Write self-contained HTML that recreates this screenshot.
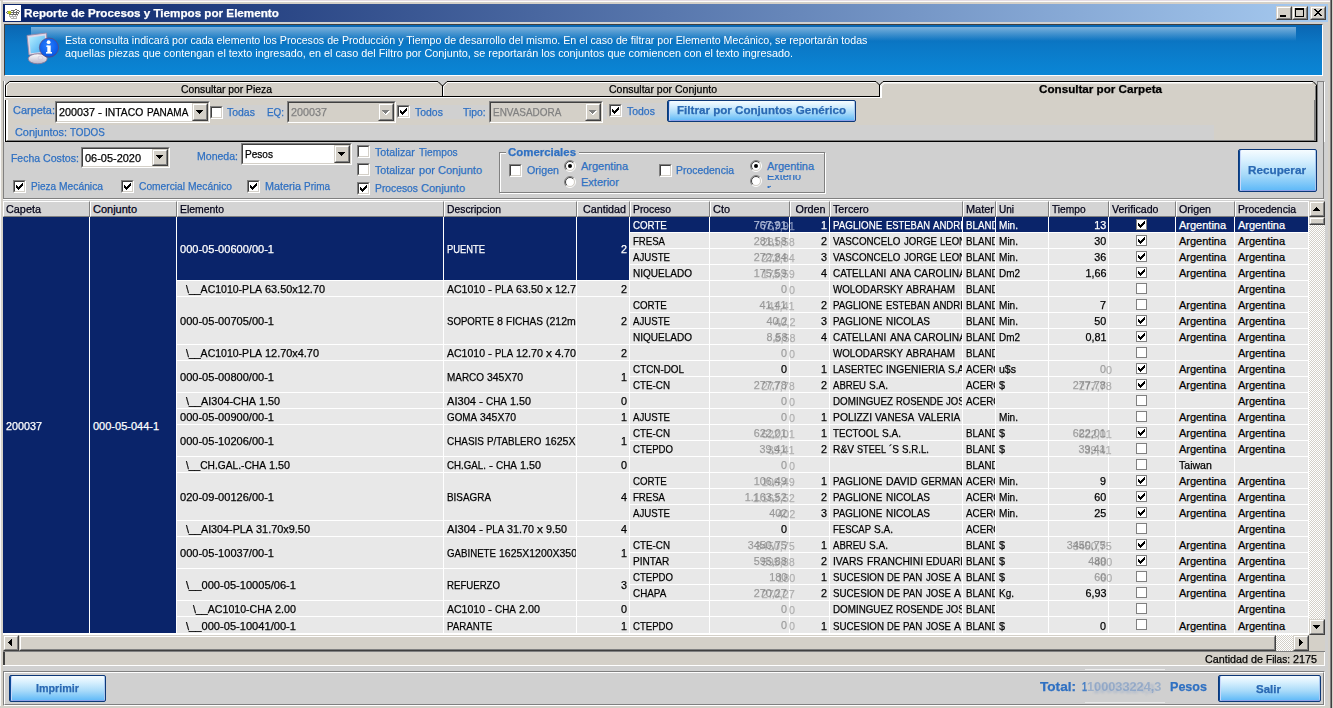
<!DOCTYPE html><html><head><meta charset="utf-8"><title>Reporte</title><style>
html,body{margin:0;padding:0;width:1333px;height:708px;overflow:hidden;background:#d0d0d0}
div,svg{position:absolute;margin:0;padding:0}
.t{font-family:"Liberation Sans", sans-serif;white-space:pre;-webkit-text-stroke:0.25px currentColor}
body{font-family:"Liberation Sans", sans-serif}
</style></head><body>
<div style="left:0px;top:0px;width:1333px;height:708px;background:#d0d0d0"></div>
<div style="left:0px;top:0px;width:1333px;height:4px;background:#d4d0c8"></div>
<div style="left:0px;top:0px;width:1333px;height:1px;background:#e4dce4"></div>
<div style="left:0px;top:1px;width:1331px;height:1px;background:#fbfbf8"></div>
<div style="left:0px;top:0px;width:3px;height:708px;background:#d4d0c8"></div>
<div style="left:0px;top:1px;width:1px;height:707px;background:#f8f8f8"></div>
<div style="left:1328px;top:2px;width:2px;height:706px;background:#d4d0c8"></div>
<div style="left:1330px;top:0px;width:1px;height:708px;background:#808080"></div>
<div style="left:1331px;top:0px;width:1px;height:708px;background:#404040"></div>
<div style="left:1332px;top:0px;width:1px;height:708px;background:#d4d0c8"></div>
<div style="left:0px;top:706px;width:1330px;height:2px;background:#d4d0c8"></div>
<div style="left:3px;top:4px;width:1325px;height:18px;background:linear-gradient(90deg,#0a246a,#a6caf0)"></div>
<div style="left:5px;top:5px;width:16px;height:16px;background:#fff"></div>
<svg style="left:5px;top:5px" width="16" height="16" shape-rendering="crispEdges"><rect x="10" y="4" width="1" height="1" fill="#6a6a6a"/><rect x="11" y="4" width="1" height="1" fill="#6a6a6a"/><rect x="6" y="5" width="1" height="1" fill="#6a6a6a"/><rect x="7" y="5" width="1" height="1" fill="#6a6a6a"/><rect x="8" y="5" width="1" height="1" fill="#6a6a6a"/><rect x="9" y="5" width="1" height="1" fill="#6a6a6a"/><rect x="12" y="5" width="1" height="1" fill="#6a6a6a"/><rect x="13" y="5" width="1" height="1" fill="#6a6a6a"/><rect x="2" y="6" width="1" height="1" fill="#6a6a6a"/><rect x="3" y="6" width="1" height="1" fill="#6a6a6a"/><rect x="5" y="6" width="1" height="1" fill="#6a6a6a"/><rect x="8" y="6" width="1" height="1" fill="#6a6a6a"/><rect x="11" y="6" width="1" height="1" fill="#6a6a6a"/><rect x="14" y="6" width="1" height="1" fill="#6a6a6a"/><rect x="1" y="7" width="1" height="1" fill="#6a6a6a"/><rect x="4" y="7" width="1" height="1" fill="#6a6a6a"/><rect x="5" y="7" width="1" height="1" fill="#6a6a6a"/><rect x="6" y="7" width="1" height="1" fill="#6a6a6a"/><rect x="7" y="7" width="1" height="1" fill="#6a6a6a"/><rect x="8" y="7" width="1" height="1" fill="#6a6a6a"/><rect x="9" y="7" width="1" height="1" fill="#6a6a6a"/><rect x="10" y="7" width="1" height="1" fill="#6a6a6a"/><rect x="11" y="7" width="1" height="1" fill="#6a6a6a"/><rect x="12" y="7" width="1" height="1" fill="#6a6a6a"/><rect x="13" y="7" width="1" height="1" fill="#6a6a6a"/><rect x="2" y="8" width="1" height="1" fill="#6a6a6a"/><rect x="3" y="8" width="1" height="1" fill="#6a6a6a"/><rect x="5" y="8" width="1" height="1" fill="#6a6a6a"/><rect x="8" y="8" width="1" height="1" fill="#6a6a6a"/><rect x="11" y="8" width="1" height="1" fill="#6a6a6a"/><rect x="13" y="8" width="1" height="1" fill="#6a6a6a"/><rect x="4" y="9" width="1" height="1" fill="#6a6a6a"/><rect x="5" y="9" width="1" height="1" fill="#6a6a6a"/><rect x="6" y="9" width="1" height="1" fill="#6a6a6a"/><rect x="7" y="9" width="1" height="1" fill="#6a6a6a"/><rect x="8" y="9" width="1" height="1" fill="#6a6a6a"/><rect x="9" y="9" width="1" height="1" fill="#6a6a6a"/><rect x="10" y="9" width="1" height="1" fill="#6a6a6a"/><rect x="11" y="9" width="1" height="1" fill="#6a6a6a"/><rect x="12" y="9" width="1" height="1" fill="#6a6a6a"/><rect x="4" y="10" width="1" height="1" fill="#b4b4b4"/><rect x="7" y="10" width="1" height="1" fill="#b4b4b4"/><rect x="10" y="10" width="1" height="1" fill="#b4b4b4"/><rect x="12" y="10" width="1" height="1" fill="#b4b4b4"/><rect x="4" y="11" width="1" height="1" fill="#b4b4b4"/><rect x="5" y="11" width="1" height="1" fill="#b4b4b4"/><rect x="6" y="11" width="1" height="1" fill="#b4b4b4"/><rect x="7" y="11" width="1" height="1" fill="#b4b4b4"/><rect x="8" y="11" width="1" height="1" fill="#b4b4b4"/><rect x="9" y="11" width="1" height="1" fill="#b4b4b4"/><rect x="10" y="11" width="1" height="1" fill="#b4b4b4"/><rect x="11" y="11" width="1" height="1" fill="#b4b4b4"/><rect x="5" y="12" width="1" height="1" fill="#b4b4b4"/><rect x="8" y="12" width="1" height="1" fill="#b4b4b4"/><rect x="11" y="12" width="1" height="1" fill="#b4b4b4"/><rect x="6" y="13" width="1" height="1" fill="#b4b4b4"/><rect x="7" y="13" width="1" height="1" fill="#b4b4b4"/><rect x="8" y="13" width="1" height="1" fill="#b4b4b4"/><rect x="9" y="13" width="1" height="1" fill="#b4b4b4"/><rect x="10" y="13" width="1" height="1" fill="#b4b4b4"/><rect x="11" y="13" width="1" height="1" fill="#b4b4b4"/><circle cx="4.5" cy="7.5" r="1.7" fill="#b8c818" shape-rendering="auto"/></svg>
<div class="t" style="left:24.00px;transform-origin:0 0;top:7px;line-height:13px;font-size:11px;font-weight:700;color:#fff;transform:scaleX(1.0588);">Reporte de Procesos y Tiempos por Elemento</div>
<div style="left:1276px;top:6px;width:16px;height:14px;background:#d4d0c8;box-sizing:border-box;border-top:1px solid #d4d0c8;border-left:1px solid #d4d0c8;border-right:1px solid #404040;border-bottom:1px solid #404040"></div>
<div style="left:1277px;top:7px;width:14px;height:12px;box-sizing:border-box;border-top:1px solid #fff;border-left:1px solid #fff;border-right:1px solid #808080;border-bottom:1px solid #808080"></div>
<div style="left:1292px;top:6px;width:16px;height:14px;background:#d4d0c8;box-sizing:border-box;border-top:1px solid #d4d0c8;border-left:1px solid #d4d0c8;border-right:1px solid #404040;border-bottom:1px solid #404040"></div>
<div style="left:1293px;top:7px;width:14px;height:12px;box-sizing:border-box;border-top:1px solid #fff;border-left:1px solid #fff;border-right:1px solid #808080;border-bottom:1px solid #808080"></div>
<div style="left:1310px;top:6px;width:16px;height:14px;background:#d4d0c8;box-sizing:border-box;border-top:1px solid #d4d0c8;border-left:1px solid #d4d0c8;border-right:1px solid #404040;border-bottom:1px solid #404040"></div>
<div style="left:1311px;top:7px;width:14px;height:12px;box-sizing:border-box;border-top:1px solid #fff;border-left:1px solid #fff;border-right:1px solid #808080;border-bottom:1px solid #808080"></div>
<svg style="left:1276px;top:6px" width="16" height="14"><rect x="4" y="9" width="6" height="2" fill="#000"/></svg>
<svg style="left:1292px;top:6px" width="16" height="14"><rect x="3" y="2" width="9" height="9" fill="#000"/><rect x="4" y="4" width="7" height="6" fill="#d4d0c8"/></svg>
<svg style="left:1310px;top:6px" width="16" height="14" shape-rendering="crispEdges"><g fill="#000"><rect x="4" y="3" width="1" height="1"/><rect x="5" y="3" width="1" height="1"/><rect x="10" y="3" width="1" height="1"/><rect x="11" y="3" width="1" height="1"/><rect x="5" y="4" width="1" height="1"/><rect x="6" y="4" width="1" height="1"/><rect x="9" y="4" width="1" height="1"/><rect x="10" y="4" width="1" height="1"/><rect x="6" y="5" width="1" height="1"/><rect x="7" y="5" width="1" height="1"/><rect x="8" y="5" width="1" height="1"/><rect x="9" y="5" width="1" height="1"/><rect x="7" y="6" width="1" height="1"/><rect x="8" y="6" width="1" height="1"/><rect x="6" y="7" width="1" height="1"/><rect x="7" y="7" width="1" height="1"/><rect x="8" y="7" width="1" height="1"/><rect x="9" y="7" width="1" height="1"/><rect x="5" y="8" width="1" height="1"/><rect x="6" y="8" width="1" height="1"/><rect x="9" y="8" width="1" height="1"/><rect x="10" y="8" width="1" height="1"/><rect x="4" y="9" width="1" height="1"/><rect x="5" y="9" width="1" height="1"/><rect x="10" y="9" width="1" height="1"/><rect x="11" y="9" width="1" height="1"/></g></svg>
<div style="left:4px;top:24px;width:1319px;height:52px;background:linear-gradient(180deg,#0a66b2 0%,#0b78c6 40%,#0a86d6 100%);box-sizing:border-box;border-top:1px solid #404040;border-left:1px solid #404040;border-right:1px solid #fff;border-bottom:1px solid #fff"></div>
<div style="left:31px;top:27px;width:1265px;height:14px;background:linear-gradient(180deg,rgba(150,195,230,0.80) 0%,rgba(120,180,225,0.45) 55%,rgba(100,165,215,0) 100%)"></div>
<svg style="left:22px;top:28px" width="44" height="42" viewBox="0 0 44 42">
<defs><linearGradient id="scr" x1="0" y1="0" x2="1" y2="1"><stop offset="0" stop-color="#b8f0ff"/><stop offset="1" stop-color="#40a8f0"/></linearGradient>
<radialGradient id="ic" cx="0.45" cy="0.4" r="0.7"><stop offset="0" stop-color="#2a80ff"/><stop offset="0.75" stop-color="#0a5ae8"/><stop offset="1" stop-color="#0840b0"/></radialGradient>
<linearGradient id="base" x1="0" y1="0" x2="0" y2="1"><stop offset="0" stop-color="#ffffff"/><stop offset="1" stop-color="#b8b4c8"/></linearGradient></defs>
<path d="M5 7.5 L24.5 5 L25.5 25 L7 27 Z" fill="#e0d8e8" stroke="#9a8aa8" stroke-width="0.9"/>
<path d="M7.2 9.5 L22.8 7.5 L23.6 23.5 L8.8 25.2 Z" fill="url(#scr)"/>
<ellipse cx="15.7" cy="30.8" rx="9.5" ry="5" fill="url(#base)" stroke="#8a7a98" stroke-width="0.9"/>
<ellipse cx="18.5" cy="30" rx="2.5" ry="2" fill="none" stroke="#c8c0d8" stroke-width="0.6"/>
<circle cx="27" cy="19.6" r="9.6" fill="url(#ic)" stroke="#6a4a70" stroke-width="0.7"/>
<rect x="25.3" y="17.5" width="3.4" height="7.5" fill="#fff"/><rect x="24" y="24" width="6" height="1.6" fill="#fff"/><rect x="24.3" y="17.5" width="2" height="1.4" fill="#fff"/>
<circle cx="26.6" cy="14.2" r="1.9" fill="#fff"/>
</svg>
<div class="t" style="left:65.00px;transform-origin:0 0;top:34px;line-height:13px;font-size:11px;font-weight:400;color:#fff;transform:scaleX(0.9678);-webkit-text-stroke:0">Esta consulta indicará por cada elemento los Procesos de Producción y Tiempo de desarrollo del mismo. En el caso de filtrar por Elemento Mecánico, se reportarán todas</div>
<div class="t" style="left:65.00px;transform-origin:0 0;top:47px;line-height:13px;font-size:11px;font-weight:400;color:#fff;transform:scaleX(0.9847);-webkit-text-stroke:0">aquellas piezas que contengan el texto ingresado, en el caso del Filtro por Conjunto, se reportarán los conjuntos que comiencen con el texto ingresado.</div>
<div style="left:3px;top:81px;width:1px;height:118px;background:#808080"></div>
<div style="left:4px;top:81px;width:1px;height:61px;background:#fff"></div>
<div style="left:5px;top:96px;width:1312px;height:46px;background:#d4d0c8;box-sizing:border-box;border-left:1px solid #000;border-bottom:1px solid #000;border-right:1px solid #000"></div>
<div style="left:6px;top:97px;width:2px;height:43px;background:#fff"></div>
<div style="left:1314px;top:97px;width:2px;height:44px;background:#808080"></div>
<div style="left:7px;top:140px;width:1308px;height:1px;background:#808080"></div>
<svg style="left:0px;top:76px" width="1333" height="24">
<path d="M5 24 V9 L9 5 H438 L442.5 9.5 L447 5 H876 L879.5 8.5 L883 5 H1313 L1317 9 V24 Z" fill="#d4d0c8"/>
<path d="M5.5 21 V9 L9.5 5.5 H438 L442.5 10 L447 5.5 H876 L879.5 9 L883 5.5 H1313 L1316.5 9 V24" fill="none" stroke="#000"/>
<path d="M6.5 20 V9.5 L10 6.5 H437.5" fill="none" stroke="#fff"/>
<path d="M443.5 20 V10.5 L447.5 6.5 H875.5" fill="none" stroke="#fff"/>
<path d="M442.5 9.5 V20.5 M879.5 9 V20.5" stroke="#000"/>
<path d="M880.5 24 V9.5 L884 6.5 H1312.5" fill="none" stroke="#fff"/>
<path d="M881.5 24 V10 L884.5 7 H1312" fill="none" stroke="#fff" stroke-width="1"/>
<path d="M1315.5 10 V24" stroke="#808080"/>
<path d="M5 20.5 H880" stroke="#000"/>
<path d="M5 21.5 H881" stroke="#fff"/>
</svg>
<div class="t" style="left:181.00px;transform-origin:0 0;top:83px;line-height:13px;font-size:11px;font-weight:400;color:#000;transform:scaleX(0.9420);">Consultar por Pieza</div>
<div class="t" style="left:609.00px;transform-origin:0 0;top:83px;line-height:13px;font-size:11px;font-weight:400;color:#000;transform:scaleX(0.9547);">Consultar por Conjunto</div>
<div class="t" style="left:1039.00px;transform-origin:0 0;top:83px;line-height:13px;font-size:11px;font-weight:700;color:#000;transform:scaleX(1.0592);">Consultar por Carpeta</div>
<div style="left:1317px;top:81px;width:8px;height:61px;box-sizing:border-box;border-left:1px solid #808080;border-top:1px solid #808080;border-right:1px solid #fff"></div>
<div style="left:8px;top:98px;width:1306px;height:42px;background:#d4d0c8"></div>
<div style="left:15px;top:125px;width:1199px;height:15px;background:#d0d0d0"></div>
<div style="left:13px;top:103px;width:42px;height:16px;background:#d0d0d0"></div>
<div class="t" style="left:13.00px;transform-origin:0 0;top:104px;line-height:13px;font-size:11px;font-weight:400;color:#2f70c2;transform:scaleX(0.9955);">Carpeta:</div>
<div style="left:55px;top:101px;width:155px;height:22px;background:#fff;box-sizing:border-box;border-top:1px solid #808080;border-left:1px solid #808080;border-right:1px solid #fff;border-bottom:1px solid #fff"></div>
<div style="left:56px;top:102px;width:153px;height:20px;box-sizing:border-box;border-top:1px solid #404040;border-left:1px solid #404040;border-right:1px solid #d4d0c8;border-bottom:1px solid #d4d0c8"></div>
<div style="left:192px;top:103px;width:16px;height:18px;background:#d4d0c8;box-sizing:border-box;border-top:1px solid #d4d0c8;border-left:1px solid #d4d0c8;border-right:1px solid #404040;border-bottom:1px solid #404040"></div>
<div style="left:193px;top:104px;width:14px;height:16px;box-sizing:border-box;border-top:1px solid #fff;border-left:1px solid #fff;border-right:1px solid #808080;border-bottom:1px solid #808080"></div>
<svg style="left:196px;top:110px" width="7" height="4"><path d="M0 0h7v1h-1v1h-1v1h-1v1h-1v-1h-1v-1h-1v-1h-1z" fill="#000"/></svg>
<div style="left:57px;top:103px;width:135px;height:18px;overflow:hidden"><div style="left:-57px;top:-103px;width:1333px;height:708px">
<div class="t" style="left:59.00px;transform-origin:0 0;top:106px;line-height:13px;font-size:11px;font-weight:400;color:#000;transform:scaleX(0.9808);">200037</div>
<div class="t" style="left:98.00px;transform-origin:0 0;top:106px;line-height:13px;font-size:11px;font-weight:400;color:#000;transform:scaleX(1.0920);">-</div>
<div class="t" style="left:105.00px;transform-origin:0 0;top:106px;line-height:13px;font-size:11px;font-weight:400;color:#000;transform:scaleX(0.9385);">INTACO</div>
<div class="t" style="left:147.00px;transform-origin:0 0;top:106px;line-height:13px;font-size:11px;font-weight:400;color:#000;transform:scaleX(0.9041);">PANAMA</div>
</div></div>
<div style="left:210px;top:106px;width:13px;height:13px;background:#fff;box-sizing:border-box;border-top:1px solid #808080;border-left:1px solid #808080;border-right:1px solid #fff;border-bottom:1px solid #fff"></div>
<div style="left:211px;top:107px;width:11px;height:11px;box-sizing:border-box;border-top:1px solid #404040;border-left:1px solid #404040;border-right:1px solid #d4d0c8;border-bottom:1px solid #d4d0c8"></div>
<div style="left:223px;top:105px;width:38px;height:14px;background:#d0d0d0"></div>
<div class="t" style="left:227.00px;transform-origin:0 0;top:106px;line-height:13px;font-size:11px;font-weight:400;color:#2f70c2;transform:scaleX(0.9486);">Todas</div>
<div style="left:261px;top:105px;width:26px;height:14px;background:#d0d0d0"></div>
<div class="t" style="left:267.00px;transform-origin:0 0;top:106px;line-height:13px;font-size:11px;font-weight:400;color:#2f70c2;transform:scaleX(0.8971);">EQ:</div>
<div style="left:287px;top:101px;width:109px;height:22px;background:#d4d0c8;box-sizing:border-box;border-top:1px solid #808080;border-left:1px solid #808080;border-right:1px solid #fff;border-bottom:1px solid #fff"></div>
<div style="left:288px;top:102px;width:107px;height:20px;box-sizing:border-box;border-top:1px solid #404040;border-left:1px solid #404040;border-right:1px solid #d4d0c8;border-bottom:1px solid #d4d0c8"></div>
<div style="left:378px;top:103px;width:16px;height:18px;background:#d4d0c8;box-sizing:border-box;border-top:1px solid #d4d0c8;border-left:1px solid #d4d0c8;border-right:1px solid #404040;border-bottom:1px solid #404040"></div>
<div style="left:379px;top:104px;width:14px;height:16px;box-sizing:border-box;border-top:1px solid #fff;border-left:1px solid #fff;border-right:1px solid #808080;border-bottom:1px solid #808080"></div>
<svg style="left:382px;top:110px" width="9" height="6"><path d="M1 1h7v1h-1v1h-1v1h-1v1h-1v1h0v-1h-1v-1h-1v-1h-1v-1z" fill="#fff"/><path d="M0 0h7v1h-1v1h-1v1h-1v1h-1v-1h-1v-1h-1v-1h-1z" fill="#808080"/></svg>
<div style="left:289px;top:103px;width:89px;height:18px;overflow:hidden"><div style="left:-289px;top:-103px;width:1333px;height:708px">
<div class="t" style="left:291.00px;transform-origin:0 0;top:106px;line-height:13px;font-size:11px;font-weight:400;color:#808080;transform:scaleX(0.9808);">200037</div>
</div></div>
<div style="left:397px;top:105px;width:13px;height:13px;background:#fff;box-sizing:border-box;border-top:1px solid #808080;border-left:1px solid #808080;border-right:1px solid #fff;border-bottom:1px solid #fff"></div>
<div style="left:398px;top:106px;width:11px;height:11px;box-sizing:border-box;border-top:1px solid #404040;border-left:1px solid #404040;border-right:1px solid #d4d0c8;border-bottom:1px solid #d4d0c8"></div>
<svg style="left:397px;top:105px" width="13" height="13" shape-rendering="crispEdges"><g fill="#000"><rect x="3" y="5" width="1" height="3"/><rect x="4" y="6" width="1" height="3"/><rect x="5" y="7" width="1" height="3"/><rect x="6" y="6" width="1" height="3"/><rect x="7" y="5" width="1" height="3"/><rect x="8" y="4" width="1" height="3"/><rect x="9" y="3" width="1" height="3"/></g></svg>
<div style="left:410px;top:105px;width:197px;height:14px;background:#d0d0d0"></div>
<div class="t" style="left:415.00px;transform-origin:0 0;top:106px;line-height:13px;font-size:11px;font-weight:400;color:#2f70c2;transform:scaleX(0.9486);">Todos</div>
<div class="t" style="left:463.00px;transform-origin:0 0;top:106px;line-height:13px;font-size:11px;font-weight:400;color:#2f70c2;transform:scaleX(0.9405);">Tipo:</div>
<div style="left:489px;top:101px;width:114px;height:22px;background:#d4d0c8;box-sizing:border-box;border-top:1px solid #808080;border-left:1px solid #808080;border-right:1px solid #fff;border-bottom:1px solid #fff"></div>
<div style="left:490px;top:102px;width:112px;height:20px;box-sizing:border-box;border-top:1px solid #404040;border-left:1px solid #404040;border-right:1px solid #d4d0c8;border-bottom:1px solid #d4d0c8"></div>
<div style="left:585px;top:103px;width:16px;height:18px;background:#d4d0c8;box-sizing:border-box;border-top:1px solid #d4d0c8;border-left:1px solid #d4d0c8;border-right:1px solid #404040;border-bottom:1px solid #404040"></div>
<div style="left:586px;top:104px;width:14px;height:16px;box-sizing:border-box;border-top:1px solid #fff;border-left:1px solid #fff;border-right:1px solid #808080;border-bottom:1px solid #808080"></div>
<svg style="left:589px;top:110px" width="9" height="6"><path d="M1 1h7v1h-1v1h-1v1h-1v1h-1v1h0v-1h-1v-1h-1v-1h-1v-1z" fill="#fff"/><path d="M0 0h7v1h-1v1h-1v1h-1v1h-1v-1h-1v-1h-1v-1h-1z" fill="#808080"/></svg>
<div style="left:491px;top:103px;width:94px;height:18px;overflow:hidden"><div style="left:-491px;top:-103px;width:1333px;height:708px">
<div class="t" style="left:493.00px;transform-origin:0 0;top:106px;line-height:13px;font-size:11px;font-weight:400;color:#808080;transform:scaleX(0.9030);">ENVASADORA</div>
</div></div>
<div style="left:609px;top:104px;width:13px;height:13px;background:#fff;box-sizing:border-box;border-top:1px solid #808080;border-left:1px solid #808080;border-right:1px solid #fff;border-bottom:1px solid #fff"></div>
<div style="left:610px;top:105px;width:11px;height:11px;box-sizing:border-box;border-top:1px solid #404040;border-left:1px solid #404040;border-right:1px solid #d4d0c8;border-bottom:1px solid #d4d0c8"></div>
<svg style="left:609px;top:104px" width="13" height="13" shape-rendering="crispEdges"><g fill="#000"><rect x="3" y="5" width="1" height="3"/><rect x="4" y="6" width="1" height="3"/><rect x="5" y="7" width="1" height="3"/><rect x="6" y="6" width="1" height="3"/><rect x="7" y="5" width="1" height="3"/><rect x="8" y="4" width="1" height="3"/><rect x="9" y="3" width="1" height="3"/></g></svg>
<div style="left:622px;top:103px;width:44px;height:14px;background:#d0d0d0"></div>
<div class="t" style="left:627.00px;transform-origin:0 0;top:105px;line-height:13px;font-size:11px;font-weight:400;color:#2f70c2;transform:scaleX(0.9486);">Todos</div>
<div style="left:667px;top:100px;width:189px;height:22px;box-sizing:border-box;border:1px solid #0c3878;border-radius:2px;background:linear-gradient(#f6fcff 0%,#d8f0fe 25%,#a8daf9 60%,#5cb8f8 100%);box-shadow:inset 1px 0 0 #0c4a98,inset 2px 0 0 #c8d8fa,inset 0 -1px 0 #8aa0e8,inset -1px 0 0 #a8c8f0"></div>
<div class="t" style="left:677.00px;transform-origin:0 0;top:104px;line-height:13px;font-size:11px;font-weight:700;color:#2a69b3;transform:scaleX(1.0554);">Filtrar por Conjuntos Genérico</div>
<div class="t" style="left:15.00px;transform-origin:0 0;top:126px;line-height:13px;font-size:11px;font-weight:400;color:#2f70c2;transform:scaleX(0.9888);">Conjuntos:</div>
<div class="t" style="left:70.00px;transform-origin:0 0;top:126px;line-height:13px;font-size:11px;font-weight:400;color:#2f70c2;transform:scaleX(0.8949);">TODOS</div>
<div class="t" style="left:11.00px;transform-origin:0 0;top:152px;line-height:13px;font-size:11px;font-weight:400;color:#2f70c2;transform:scaleX(0.9486);">Fecha</div>
<div class="t" style="left:43.00px;transform-origin:0 0;top:152px;line-height:13px;font-size:11px;font-weight:400;color:#2f70c2;transform:scaleX(0.9654);">Costos:</div>
<div style="left:81px;top:147px;width:89px;height:21px;background:#fff;box-sizing:border-box;border-top:1px solid #808080;border-left:1px solid #808080;border-right:1px solid #fff;border-bottom:1px solid #fff"></div>
<div style="left:82px;top:148px;width:87px;height:19px;box-sizing:border-box;border-top:1px solid #404040;border-left:1px solid #404040;border-right:1px solid #d4d0c8;border-bottom:1px solid #d4d0c8"></div>
<div style="left:152px;top:149px;width:16px;height:17px;background:#d4d0c8;box-sizing:border-box;border-top:1px solid #d4d0c8;border-left:1px solid #d4d0c8;border-right:1px solid #404040;border-bottom:1px solid #404040"></div>
<div style="left:153px;top:150px;width:14px;height:15px;box-sizing:border-box;border-top:1px solid #fff;border-left:1px solid #fff;border-right:1px solid #808080;border-bottom:1px solid #808080"></div>
<svg style="left:156px;top:155px" width="7" height="4"><path d="M0 0h7v1h-1v1h-1v1h-1v1h-1v-1h-1v-1h-1v-1h-1z" fill="#000"/></svg>
<div style="left:83px;top:149px;width:69px;height:17px;overflow:hidden"><div style="left:-83px;top:-149px;width:1333px;height:708px">
<div class="t" style="left:85.00px;transform-origin:0 0;top:152px;line-height:13px;font-size:11px;font-weight:400;color:#000;transform:scaleX(0.9952);">06-05-2020</div>
</div></div>
<div class="t" style="left:197.00px;transform-origin:0 0;top:150px;line-height:13px;font-size:11px;font-weight:400;color:#2f70c2;transform:scaleX(0.9578);">Moneda:</div>
<div style="left:241px;top:143px;width:111px;height:22px;background:#fff;box-sizing:border-box;border-top:1px solid #808080;border-left:1px solid #808080;border-right:1px solid #fff;border-bottom:1px solid #fff"></div>
<div style="left:242px;top:144px;width:109px;height:20px;box-sizing:border-box;border-top:1px solid #404040;border-left:1px solid #404040;border-right:1px solid #d4d0c8;border-bottom:1px solid #d4d0c8"></div>
<div style="left:334px;top:145px;width:16px;height:18px;background:#d4d0c8;box-sizing:border-box;border-top:1px solid #d4d0c8;border-left:1px solid #d4d0c8;border-right:1px solid #404040;border-bottom:1px solid #404040"></div>
<div style="left:335px;top:146px;width:14px;height:16px;box-sizing:border-box;border-top:1px solid #fff;border-left:1px solid #fff;border-right:1px solid #808080;border-bottom:1px solid #808080"></div>
<svg style="left:338px;top:152px" width="7" height="4"><path d="M0 0h7v1h-1v1h-1v1h-1v1h-1v-1h-1v-1h-1v-1h-1z" fill="#000"/></svg>
<div style="left:243px;top:145px;width:91px;height:18px;overflow:hidden"><div style="left:-243px;top:-145px;width:1333px;height:708px">
<div class="t" style="left:245.00px;transform-origin:0 0;top:148px;line-height:13px;font-size:11px;font-weight:400;color:#000;transform:scaleX(0.9159);">Pesos</div>
</div></div>
<div style="left:357px;top:145px;width:13px;height:13px;background:#fff;box-sizing:border-box;border-top:1px solid #808080;border-left:1px solid #808080;border-right:1px solid #fff;border-bottom:1px solid #fff"></div>
<div style="left:358px;top:146px;width:11px;height:11px;box-sizing:border-box;border-top:1px solid #404040;border-left:1px solid #404040;border-right:1px solid #d4d0c8;border-bottom:1px solid #d4d0c8"></div>
<div class="t" style="left:375.00px;transform-origin:0 0;top:146px;line-height:13px;font-size:11px;font-weight:400;color:#2f70c2;transform:scaleX(0.9720);">Totalizar</div>
<div class="t" style="left:419.00px;transform-origin:0 0;top:146px;line-height:13px;font-size:11px;font-weight:400;color:#2f70c2;transform:scaleX(0.9246);">Tiempos</div>
<div style="left:357px;top:163px;width:13px;height:13px;background:#fff;box-sizing:border-box;border-top:1px solid #808080;border-left:1px solid #808080;border-right:1px solid #fff;border-bottom:1px solid #fff"></div>
<div style="left:358px;top:164px;width:11px;height:11px;box-sizing:border-box;border-top:1px solid #404040;border-left:1px solid #404040;border-right:1px solid #d4d0c8;border-bottom:1px solid #d4d0c8"></div>
<div class="t" style="left:375.00px;transform-origin:0 0;top:164px;line-height:13px;font-size:11px;font-weight:400;color:#2f70c2;transform:scaleX(0.9720);">Totalizar</div>
<div class="t" style="left:419.00px;transform-origin:0 0;top:164px;line-height:13px;font-size:11px;font-weight:400;color:#2f70c2;transform:scaleX(1.0064);">por</div>
<div class="t" style="left:438.00px;transform-origin:0 0;top:164px;line-height:13px;font-size:11px;font-weight:400;color:#2f70c2;">Conjunto</div>
<div style="left:357px;top:182px;width:13px;height:13px;background:#fff;box-sizing:border-box;border-top:1px solid #808080;border-left:1px solid #808080;border-right:1px solid #fff;border-bottom:1px solid #fff"></div>
<div style="left:358px;top:183px;width:11px;height:11px;box-sizing:border-box;border-top:1px solid #404040;border-left:1px solid #404040;border-right:1px solid #d4d0c8;border-bottom:1px solid #d4d0c8"></div>
<svg style="left:357px;top:182px" width="13" height="13" shape-rendering="crispEdges"><g fill="#000"><rect x="3" y="5" width="1" height="3"/><rect x="4" y="6" width="1" height="3"/><rect x="5" y="7" width="1" height="3"/><rect x="6" y="6" width="1" height="3"/><rect x="7" y="5" width="1" height="3"/><rect x="8" y="4" width="1" height="3"/><rect x="9" y="3" width="1" height="3"/></g></svg>
<div class="t" style="left:375.00px;transform-origin:0 0;top:182px;line-height:13px;font-size:11px;font-weight:400;color:#2f70c2;transform:scaleX(0.9378);">Procesos</div>
<div class="t" style="left:421.00px;transform-origin:0 0;top:182px;line-height:13px;font-size:11px;font-weight:400;color:#2f70c2;">Conjunto</div>
<div style="left:13px;top:180px;width:13px;height:13px;background:#fff;box-sizing:border-box;border-top:1px solid #808080;border-left:1px solid #808080;border-right:1px solid #fff;border-bottom:1px solid #fff"></div>
<div style="left:14px;top:181px;width:11px;height:11px;box-sizing:border-box;border-top:1px solid #404040;border-left:1px solid #404040;border-right:1px solid #d4d0c8;border-bottom:1px solid #d4d0c8"></div>
<svg style="left:13px;top:180px" width="13" height="13" shape-rendering="crispEdges"><g fill="#000"><rect x="3" y="5" width="1" height="3"/><rect x="4" y="6" width="1" height="3"/><rect x="5" y="7" width="1" height="3"/><rect x="6" y="6" width="1" height="3"/><rect x="7" y="5" width="1" height="3"/><rect x="8" y="4" width="1" height="3"/><rect x="9" y="3" width="1" height="3"/></g></svg>
<div class="t" style="left:31.00px;transform-origin:0 0;top:180px;line-height:13px;font-size:11px;font-weight:400;color:#2f70c2;transform:scaleX(0.9086);">Pieza</div>
<div class="t" style="left:59.00px;transform-origin:0 0;top:180px;line-height:13px;font-size:11px;font-weight:400;color:#2f70c2;transform:scaleX(0.9346);">Mecánica</div>
<div style="left:121px;top:180px;width:13px;height:13px;background:#fff;box-sizing:border-box;border-top:1px solid #808080;border-left:1px solid #808080;border-right:1px solid #fff;border-bottom:1px solid #fff"></div>
<div style="left:122px;top:181px;width:11px;height:11px;box-sizing:border-box;border-top:1px solid #404040;border-left:1px solid #404040;border-right:1px solid #d4d0c8;border-bottom:1px solid #d4d0c8"></div>
<svg style="left:121px;top:180px" width="13" height="13" shape-rendering="crispEdges"><g fill="#000"><rect x="3" y="5" width="1" height="3"/><rect x="4" y="6" width="1" height="3"/><rect x="5" y="7" width="1" height="3"/><rect x="6" y="6" width="1" height="3"/><rect x="7" y="5" width="1" height="3"/><rect x="8" y="4" width="1" height="3"/><rect x="9" y="3" width="1" height="3"/></g></svg>
<div class="t" style="left:139.00px;transform-origin:0 0;top:180px;line-height:13px;font-size:11px;font-weight:400;color:#2f70c2;transform:scaleX(0.9291);">Comercial</div>
<div class="t" style="left:188.00px;transform-origin:0 0;top:180px;line-height:13px;font-size:11px;font-weight:400;color:#2f70c2;transform:scaleX(0.9346);">Mecánico</div>
<div style="left:247px;top:180px;width:13px;height:13px;background:#fff;box-sizing:border-box;border-top:1px solid #808080;border-left:1px solid #808080;border-right:1px solid #fff;border-bottom:1px solid #fff"></div>
<div style="left:248px;top:181px;width:11px;height:11px;box-sizing:border-box;border-top:1px solid #404040;border-left:1px solid #404040;border-right:1px solid #d4d0c8;border-bottom:1px solid #d4d0c8"></div>
<svg style="left:247px;top:180px" width="13" height="13" shape-rendering="crispEdges"><g fill="#000"><rect x="3" y="5" width="1" height="3"/><rect x="4" y="6" width="1" height="3"/><rect x="5" y="7" width="1" height="3"/><rect x="6" y="6" width="1" height="3"/><rect x="7" y="5" width="1" height="3"/><rect x="8" y="4" width="1" height="3"/><rect x="9" y="3" width="1" height="3"/></g></svg>
<div class="t" style="left:265.00px;transform-origin:0 0;top:180px;line-height:13px;font-size:11px;font-weight:400;color:#2f70c2;transform:scaleX(0.9815);">Materia</div>
<div class="t" style="left:304.00px;transform-origin:0 0;top:180px;line-height:13px;font-size:11px;font-weight:400;color:#2f70c2;transform:scaleX(0.9051);">Prima</div>
<div style="left:499px;top:152px;width:326px;height:41px;box-sizing:border-box;border:1px solid #808080;box-shadow:1px 1px 0 #fff, inset 1px 1px 0 #fff"></div>
<div style="left:506px;top:146px;width:73px;height:12px;background:#d0d0d0"></div>
<div class="t" style="left:508.00px;transform-origin:0 0;top:146px;line-height:13px;font-size:11px;font-weight:700;color:#2f70c2;transform:scaleX(1.0394);">Comerciales</div>
<div style="left:509px;top:164px;width:13px;height:13px;background:#fff;box-sizing:border-box;border-top:1px solid #808080;border-left:1px solid #808080;border-right:1px solid #fff;border-bottom:1px solid #fff"></div>
<div style="left:510px;top:165px;width:11px;height:11px;box-sizing:border-box;border-top:1px solid #404040;border-left:1px solid #404040;border-right:1px solid #d4d0c8;border-bottom:1px solid #d4d0c8"></div>
<div class="t" style="left:527.00px;transform-origin:0 0;top:164px;line-height:13px;font-size:11px;font-weight:400;color:#2f70c2;transform:scaleX(0.9692);">Origen</div>
<svg style="left:564px;top:160px" width="12" height="12" viewBox="0 0 12 12"><circle cx="6" cy="6" r="4.5" fill="#fff"/><path d="M2.111 9.889 A5.5 5.5 0 0 1 9.889 2.111" stroke="#808080" fill="none"/><path d="M2.818 9.182 A4.5 4.5 0 0 1 9.182 2.818" stroke="#404040" fill="none"/><path d="M9.889 2.111 A5.5 5.5 0 0 1 2.111 9.889" stroke="#ffffff" fill="none"/><path d="M9.182 2.818 A4.5 4.5 0 0 1 2.818 9.182" stroke="#d4d0c8" fill="none"/><circle cx="6" cy="6" r="2" fill="#000"/></svg>
<div class="t" style="left:581.00px;transform-origin:0 0;top:160px;line-height:13px;font-size:11px;font-weight:400;color:#2f70c2;">Argentina</div>
<svg style="left:564px;top:176px" width="12" height="12" viewBox="0 0 12 12"><circle cx="6" cy="6" r="4.5" fill="#fff"/><path d="M2.111 9.889 A5.5 5.5 0 0 1 9.889 2.111" stroke="#808080" fill="none"/><path d="M2.818 9.182 A4.5 4.5 0 0 1 9.182 2.818" stroke="#404040" fill="none"/><path d="M9.889 2.111 A5.5 5.5 0 0 1 2.111 9.889" stroke="#ffffff" fill="none"/><path d="M9.182 2.818 A4.5 4.5 0 0 1 2.818 9.182" stroke="#d4d0c8" fill="none"/></svg>
<div class="t" style="left:581.00px;transform-origin:0 0;top:176px;line-height:13px;font-size:11px;font-weight:400;color:#2f70c2;">Exterior</div>
<div style="left:659px;top:164px;width:13px;height:13px;background:#fff;box-sizing:border-box;border-top:1px solid #808080;border-left:1px solid #808080;border-right:1px solid #fff;border-bottom:1px solid #fff"></div>
<div style="left:660px;top:165px;width:11px;height:11px;box-sizing:border-box;border-top:1px solid #404040;border-left:1px solid #404040;border-right:1px solid #d4d0c8;border-bottom:1px solid #d4d0c8"></div>
<div class="t" style="left:676.00px;transform-origin:0 0;top:164px;line-height:13px;font-size:11px;font-weight:400;color:#2f70c2;transform:scaleX(0.9485);">Procedencia</div>
<svg style="left:750px;top:160px" width="12" height="12" viewBox="0 0 12 12"><circle cx="6" cy="6" r="4.5" fill="#fff"/><path d="M2.111 9.889 A5.5 5.5 0 0 1 9.889 2.111" stroke="#808080" fill="none"/><path d="M2.818 9.182 A4.5 4.5 0 0 1 9.182 2.818" stroke="#404040" fill="none"/><path d="M9.889 2.111 A5.5 5.5 0 0 1 2.111 9.889" stroke="#ffffff" fill="none"/><path d="M9.182 2.818 A4.5 4.5 0 0 1 2.818 9.182" stroke="#d4d0c8" fill="none"/><circle cx="6" cy="6" r="2" fill="#000"/></svg>
<div class="t" style="left:767.00px;transform-origin:0 0;top:160px;line-height:13px;font-size:11px;font-weight:400;color:#2f70c2;">Argentina</div>
<svg style="left:750px;top:175px" width="12" height="12" viewBox="0 0 12 12"><circle cx="6" cy="6" r="4.5" fill="#fff"/><path d="M2.111 9.889 A5.5 5.5 0 0 1 9.889 2.111" stroke="#808080" fill="none"/><path d="M2.818 9.182 A4.5 4.5 0 0 1 9.182 2.818" stroke="#404040" fill="none"/><path d="M9.889 2.111 A5.5 5.5 0 0 1 2.111 9.889" stroke="#ffffff" fill="none"/><path d="M9.182 2.818 A4.5 4.5 0 0 1 2.818 9.182" stroke="#d4d0c8" fill="none"/></svg>
<div style="left:767px;top:175px;width:60px;height:5px;overflow:hidden"><div style="left:-767px;top:-175px;width:1333px;height:708px">
<div class="t" style="left:767.00px;transform-origin:0 0;top:170px;line-height:13px;font-size:11px;font-weight:400;color:#2f70c2;transform:scaleX(0.9931);">Exterio</div>
</div></div>
<div style="left:767px;top:184px;width:60px;height:4px;overflow:hidden"><div style="left:-767px;top:-184px;width:1333px;height:708px">
<div class="t" style="left:767.00px;transform-origin:0 0;top:182px;line-height:13px;font-size:11px;font-weight:400;color:#2f70c2;transform:scaleX(1.0920);">r</div>
</div></div>
<div style="left:1238px;top:149px;width:79px;height:43px;box-sizing:border-box;border:1px solid #0c3878;border-radius:2px;background:linear-gradient(#f6fcff 0%,#d8f0fe 25%,#a8daf9 60%,#5cb8f8 100%);box-shadow:inset 1px 0 0 #0c4a98,inset 2px 0 0 #c8d8fa,inset 0 -1px 0 #8aa0e8,inset -1px 0 0 #a8c8f0"></div>
<div class="t" style="left:1248.00px;transform-origin:0 0;top:164px;line-height:13px;font-size:11px;font-weight:700;color:#2a69b3;transform:scaleX(1.0659);">Recuperar</div>
<div style="left:3px;top:198px;width:1321px;height:1px;background:#808080"></div>
<div style="left:3px;top:199px;width:1321px;height:1px;background:#fff"></div>
<div style="left:1323px;top:81px;width:1px;height:118px;background:#808080"></div>
<div style="left:3px;top:201px;width:1305px;height:433px;background:#fff"></div>
<div style="left:3px;top:201px;width:87px;height:16px;background:#d4d4d4;box-sizing:border-box;border-top:1px solid #fff;border-left:1px solid #fff;border-right:1px solid #808080;border-bottom:1px solid #808080"></div>
<div style="left:4px;top:202px;width:85px;height:14px;overflow:hidden"><div style="left:-4px;top:-202px;width:1333px;height:708px">
<div class="t" style="left:6.00px;transform-origin:0 0;top:203px;line-height:13px;font-size:11px;font-weight:400;color:#000018;transform:scaleX(0.9867);">Capeta</div>
</div></div>
<div style="left:90px;top:201px;width:87px;height:16px;background:#d4d4d4;box-sizing:border-box;border-top:1px solid #fff;border-left:1px solid #fff;border-right:1px solid #808080;border-bottom:1px solid #808080"></div>
<div style="left:91px;top:202px;width:85px;height:14px;overflow:hidden"><div style="left:-91px;top:-202px;width:1333px;height:708px">
<div class="t" style="left:93.00px;transform-origin:0 0;top:203px;line-height:13px;font-size:11px;font-weight:400;color:#000018;">Conjunto</div>
</div></div>
<div style="left:177px;top:201px;width:267px;height:16px;background:#d4d4d4;box-sizing:border-box;border-top:1px solid #fff;border-left:1px solid #fff;border-right:1px solid #808080;border-bottom:1px solid #808080"></div>
<div style="left:178px;top:202px;width:265px;height:14px;overflow:hidden"><div style="left:-178px;top:-202px;width:1333px;height:708px">
<div class="t" style="left:180.00px;transform-origin:0 0;top:203px;line-height:13px;font-size:11px;font-weight:400;color:#000018;transform:scaleX(0.9468);">Elemento</div>
</div></div>
<div style="left:444px;top:201px;width:133px;height:16px;background:#d4d4d4;box-sizing:border-box;border-top:1px solid #fff;border-left:1px solid #fff;border-right:1px solid #808080;border-bottom:1px solid #808080"></div>
<div style="left:445px;top:202px;width:131px;height:14px;overflow:hidden"><div style="left:-445px;top:-202px;width:1333px;height:708px">
<div class="t" style="left:447.00px;transform-origin:0 0;top:203px;line-height:13px;font-size:11px;font-weight:400;color:#000018;transform:scaleX(0.9397);">Descripcion</div>
</div></div>
<div style="left:577px;top:201px;width:53px;height:16px;background:#d4d4d4;box-sizing:border-box;border-top:1px solid #fff;border-left:1px solid #fff;border-right:1px solid #808080;border-bottom:1px solid #808080"></div>
<div style="left:578px;top:202px;width:51px;height:14px;overflow:hidden"><div style="left:-578px;top:-202px;width:1333px;height:708px">
<div class="t" style="right:707.00px;transform-origin:100% 0;top:203px;line-height:13px;font-size:11px;font-weight:400;color:#000018;transform:scaleX(0.9766);">Cantidad</div>
</div></div>
<div style="left:630px;top:201px;width:80px;height:16px;background:#d4d4d4;box-sizing:border-box;border-top:1px solid #fff;border-left:1px solid #fff;border-right:1px solid #808080;border-bottom:1px solid #808080"></div>
<div style="left:631px;top:202px;width:78px;height:14px;overflow:hidden"><div style="left:-631px;top:-202px;width:1333px;height:708px">
<div class="t" style="left:633.00px;transform-origin:0 0;top:203px;line-height:13px;font-size:11px;font-weight:400;color:#000018;transform:scaleX(0.9417);">Proceso</div>
</div></div>
<div style="left:710px;top:201px;width:80px;height:16px;background:#d4d4d4;box-sizing:border-box;border-top:1px solid #fff;border-left:1px solid #fff;border-right:1px solid #808080;border-bottom:1px solid #808080"></div>
<div style="left:711px;top:202px;width:78px;height:14px;overflow:hidden"><div style="left:-711px;top:-202px;width:1333px;height:708px">
<div class="t" style="left:713.00px;transform-origin:0 0;top:203px;line-height:13px;font-size:11px;font-weight:400;color:#000018;transform:scaleX(0.9931);">Cto</div>
</div></div>
<div style="left:790px;top:201px;width:40px;height:16px;background:#d4d4d4;box-sizing:border-box;border-top:1px solid #fff;border-left:1px solid #fff;border-right:1px solid #808080;border-bottom:1px solid #808080"></div>
<div style="left:791px;top:202px;width:38px;height:14px;overflow:hidden"><div style="left:-791px;top:-202px;width:1333px;height:708px">
<div class="t" style="right:507.00px;transform-origin:100% 0;top:203px;line-height:13px;font-size:11px;font-weight:400;color:#000018;transform:scaleX(0.9813);">Orden</div>
</div></div>
<div style="left:830px;top:201px;width:133px;height:16px;background:#d4d4d4;box-sizing:border-box;border-top:1px solid #fff;border-left:1px solid #fff;border-right:1px solid #808080;border-bottom:1px solid #808080"></div>
<div style="left:831px;top:202px;width:131px;height:14px;overflow:hidden"><div style="left:-831px;top:-202px;width:1333px;height:708px">
<div class="t" style="left:833.00px;transform-origin:0 0;top:203px;line-height:13px;font-size:11px;font-weight:400;color:#000018;transform:scaleX(0.9763);">Tercero</div>
</div></div>
<div style="left:963px;top:201px;width:33px;height:16px;background:#d4d4d4;box-sizing:border-box;border-top:1px solid #fff;border-left:1px solid #fff;border-right:1px solid #808080;border-bottom:1px solid #808080"></div>
<div style="left:964px;top:202px;width:31px;height:14px;overflow:hidden"><div style="left:-964px;top:-202px;width:1333px;height:708px">
<div class="t" style="left:966.00px;transform-origin:0 0;top:203px;line-height:13px;font-size:11px;font-weight:400;color:#000018;transform:scaleX(0.9958);">Mater</div>
</div></div>
<div style="left:996px;top:201px;width:53px;height:16px;background:#d4d4d4;box-sizing:border-box;border-top:1px solid #fff;border-left:1px solid #fff;border-right:1px solid #808080;border-bottom:1px solid #808080"></div>
<div style="left:997px;top:202px;width:51px;height:14px;overflow:hidden"><div style="left:-997px;top:-202px;width:1333px;height:708px">
<div class="t" style="left:999.00px;transform-origin:0 0;top:203px;line-height:13px;font-size:11px;font-weight:400;color:#000018;transform:scaleX(0.9088);">Uni</div>
</div></div>
<div style="left:1049px;top:201px;width:60px;height:16px;background:#d4d4d4;box-sizing:border-box;border-top:1px solid #fff;border-left:1px solid #fff;border-right:1px solid #808080;border-bottom:1px solid #808080"></div>
<div style="left:1050px;top:202px;width:58px;height:14px;overflow:hidden"><div style="left:-1050px;top:-202px;width:1333px;height:708px">
<div class="t" style="left:1052.00px;transform-origin:0 0;top:203px;line-height:13px;font-size:11px;font-weight:400;color:#000018;transform:scaleX(0.9270);">Tiempo</div>
</div></div>
<div style="left:1109px;top:201px;width:67px;height:16px;background:#d4d4d4;box-sizing:border-box;border-top:1px solid #fff;border-left:1px solid #fff;border-right:1px solid #808080;border-bottom:1px solid #808080"></div>
<div style="left:1110px;top:202px;width:65px;height:14px;overflow:hidden"><div style="left:-1110px;top:-202px;width:1333px;height:708px">
<div class="t" style="left:1112.00px;transform-origin:0 0;top:203px;line-height:13px;font-size:11px;font-weight:400;color:#000018;transform:scaleX(0.9609);">Verificado</div>
</div></div>
<div style="left:1176px;top:201px;width:59px;height:16px;background:#d4d4d4;box-sizing:border-box;border-top:1px solid #fff;border-left:1px solid #fff;border-right:1px solid #808080;border-bottom:1px solid #808080"></div>
<div style="left:1177px;top:202px;width:57px;height:14px;overflow:hidden"><div style="left:-1177px;top:-202px;width:1333px;height:708px">
<div class="t" style="left:1179.00px;transform-origin:0 0;top:203px;line-height:13px;font-size:11px;font-weight:400;color:#000018;transform:scaleX(0.9692);">Origen</div>
</div></div>
<div style="left:1235px;top:201px;width:74px;height:16px;background:#d4d4d4;box-sizing:border-box;border-top:1px solid #fff;border-left:1px solid #fff;border-right:1px solid #808080;border-bottom:1px solid #808080"></div>
<div style="left:1236px;top:202px;width:72px;height:14px;overflow:hidden"><div style="left:-1236px;top:-202px;width:1333px;height:708px">
<div class="t" style="left:1238.00px;transform-origin:0 0;top:203px;line-height:13px;font-size:11px;font-weight:400;color:#000018;transform:scaleX(0.9485);">Procedencia</div>
</div></div>
<div style="left:3px;top:217px;width:86px;height:416px;background:#0a246a"></div>
<div style="left:3px;top:217px;width:86px;height:416px;overflow:hidden"><div style="left:-3px;top:-217px;width:1333px;height:708px">
<div class="t" style="left:6.00px;transform-origin:0 0;top:420px;line-height:13px;font-size:11px;font-weight:400;color:#fff;transform:scaleX(0.9808);">200037</div>
</div></div>
<div style="left:90px;top:217px;width:86px;height:416px;background:#0a246a"></div>
<div style="left:90px;top:217px;width:86px;height:416px;overflow:hidden"><div style="left:-90px;top:-217px;width:1333px;height:708px">
<div class="t" style="left:93.00px;transform-origin:0 0;top:420px;line-height:13px;font-size:11px;font-weight:400;color:#fff;">000-05-044-1</div>
</div></div>
<div style="left:177px;top:217px;width:266px;height:63px;background:#0a246a"></div>
<div style="left:177px;top:217px;width:266px;height:63px;overflow:hidden"><div style="left:-177px;top:-217px;width:1333px;height:708px">
<div class="t" style="left:180.00px;transform-origin:0 0;top:243px;line-height:13px;font-size:11px;font-weight:400;color:#fff;transform:scaleX(1.0045);">000-05-00600/00-1</div>
</div></div>
<div style="left:444px;top:217px;width:132px;height:63px;background:#0a246a"></div>
<div style="left:444px;top:217px;width:132px;height:63px;overflow:hidden"><div style="left:-444px;top:-217px;width:1333px;height:708px">
<div class="t" style="left:447.00px;transform-origin:0 0;top:243px;line-height:13px;font-size:11px;font-weight:400;color:#fff;transform:scaleX(0.8517);">PUENTE</div>
</div></div>
<div style="left:577px;top:217px;width:52px;height:63px;background:#0a246a"></div>
<div style="left:577px;top:217px;width:52px;height:63px;overflow:hidden"><div style="left:-577px;top:-217px;width:1333px;height:708px">
<div class="t" style="right:706.00px;transform-origin:100% 0;top:243px;line-height:13px;font-size:11px;font-weight:400;color:#fff;transform:scaleX(0.9808);">2</div>
</div></div>
<div style="left:177px;top:281px;width:266px;height:15px;background:#e8e8e8"></div>
<div style="left:177px;top:281px;width:266px;height:15px;overflow:hidden"><div style="left:-177px;top:-281px;width:1333px;height:708px">
<div class="t" style="left:186.00px;transform-origin:0 0;top:283px;line-height:13px;font-size:11px;font-weight:400;color:#000;transform:scaleX(0.9560);">\__AC1010-PLA</div>
<div class="t" style="left:265.00px;transform-origin:0 0;top:283px;line-height:13px;font-size:11px;font-weight:400;color:#000;transform:scaleX(0.9909);">63.50x12.70</div>
</div></div>
<div style="left:444px;top:281px;width:132px;height:15px;background:#e8e8e8"></div>
<div style="left:444px;top:281px;width:132px;height:15px;overflow:hidden"><div style="left:-444px;top:-281px;width:1333px;height:708px">
<div class="t" style="left:447.00px;transform-origin:0 0;top:283px;line-height:13px;font-size:11px;font-weight:400;color:#000;transform:scaleX(0.9559);">AC1010</div>
<div class="t" style="left:488.00px;transform-origin:0 0;top:283px;line-height:13px;font-size:11px;font-weight:400;color:#000;transform:scaleX(1.0920);">-</div>
<div class="t" style="left:495.00px;transform-origin:0 0;top:283px;line-height:13px;font-size:11px;font-weight:400;color:#000;transform:scaleX(0.8657);">PLA</div>
<div class="t" style="left:516.00px;transform-origin:0 0;top:283px;line-height:13px;font-size:11px;font-weight:400;color:#000;transform:scaleX(0.9809);">63.50</div>
<div class="t" style="left:546.00px;transform-origin:0 0;top:283px;line-height:13px;font-size:11px;font-weight:400;color:#000;transform:scaleX(1.0909);">x</div>
<div class="t" style="left:555.00px;transform-origin:0 0;top:283px;line-height:13px;font-size:11px;font-weight:400;color:#000;transform:scaleX(0.9809);">12.70</div>
</div></div>
<div style="left:577px;top:281px;width:52px;height:15px;background:#e8e8e8"></div>
<div style="left:577px;top:281px;width:52px;height:15px;overflow:hidden"><div style="left:-577px;top:-281px;width:1333px;height:708px">
<div class="t" style="right:706.00px;transform-origin:100% 0;top:283px;line-height:13px;font-size:11px;font-weight:400;color:#000;transform:scaleX(0.9808);">2</div>
</div></div>
<div style="left:177px;top:297px;width:266px;height:47px;background:#e8e8e8"></div>
<div style="left:177px;top:297px;width:266px;height:47px;overflow:hidden"><div style="left:-177px;top:-297px;width:1333px;height:708px">
<div class="t" style="left:180.00px;transform-origin:0 0;top:315px;line-height:13px;font-size:11px;font-weight:400;color:#000;transform:scaleX(1.0045);">000-05-00705/00-1</div>
</div></div>
<div style="left:444px;top:297px;width:132px;height:47px;background:#e8e8e8"></div>
<div style="left:444px;top:297px;width:132px;height:47px;overflow:hidden"><div style="left:-444px;top:-297px;width:1333px;height:708px">
<div class="t" style="left:447.00px;transform-origin:0 0;top:315px;line-height:13px;font-size:11px;font-weight:400;color:#000;transform:scaleX(0.8738);">SOPORTE</div>
<div class="t" style="left:497.00px;transform-origin:0 0;top:315px;line-height:13px;font-size:11px;font-weight:400;color:#000;transform:scaleX(0.9808);">8</div>
<div class="t" style="left:506.00px;transform-origin:0 0;top:315px;line-height:13px;font-size:11px;font-weight:400;color:#000;transform:scaleX(0.9173);">FICHAS</div>
<div class="t" style="left:546.00px;transform-origin:0 0;top:315px;line-height:13px;font-size:11px;font-weight:400;color:#000;transform:scaleX(0.9544);">(212mm)</div>
</div></div>
<div style="left:577px;top:297px;width:52px;height:47px;background:#e8e8e8"></div>
<div style="left:577px;top:297px;width:52px;height:47px;overflow:hidden"><div style="left:-577px;top:-297px;width:1333px;height:708px">
<div class="t" style="right:706.00px;transform-origin:100% 0;top:315px;line-height:13px;font-size:11px;font-weight:400;color:#000;transform:scaleX(0.9808);">2</div>
</div></div>
<div style="left:177px;top:345px;width:266px;height:15px;background:#e8e8e8"></div>
<div style="left:177px;top:345px;width:266px;height:15px;overflow:hidden"><div style="left:-177px;top:-345px;width:1333px;height:708px">
<div class="t" style="left:186.00px;transform-origin:0 0;top:347px;line-height:13px;font-size:11px;font-weight:400;color:#000;transform:scaleX(0.9560);">\__AC1010-PLA</div>
<div class="t" style="left:265.00px;transform-origin:0 0;top:347px;line-height:13px;font-size:11px;font-weight:400;color:#000;transform:scaleX(0.9920);">12.70x4.70</div>
</div></div>
<div style="left:444px;top:345px;width:132px;height:15px;background:#e8e8e8"></div>
<div style="left:444px;top:345px;width:132px;height:15px;overflow:hidden"><div style="left:-444px;top:-345px;width:1333px;height:708px">
<div class="t" style="left:447.00px;transform-origin:0 0;top:347px;line-height:13px;font-size:11px;font-weight:400;color:#000;transform:scaleX(0.9559);">AC1010</div>
<div class="t" style="left:488.00px;transform-origin:0 0;top:347px;line-height:13px;font-size:11px;font-weight:400;color:#000;transform:scaleX(1.0920);">-</div>
<div class="t" style="left:495.00px;transform-origin:0 0;top:347px;line-height:13px;font-size:11px;font-weight:400;color:#000;transform:scaleX(0.8657);">PLA</div>
<div class="t" style="left:516.00px;transform-origin:0 0;top:347px;line-height:13px;font-size:11px;font-weight:400;color:#000;transform:scaleX(0.9809);">12.70</div>
<div class="t" style="left:546.00px;transform-origin:0 0;top:347px;line-height:13px;font-size:11px;font-weight:400;color:#000;transform:scaleX(1.0909);">x</div>
<div class="t" style="left:555.00px;transform-origin:0 0;top:347px;line-height:13px;font-size:11px;font-weight:400;color:#000;transform:scaleX(0.9809);">4.70</div>
</div></div>
<div style="left:577px;top:345px;width:52px;height:15px;background:#e8e8e8"></div>
<div style="left:577px;top:345px;width:52px;height:15px;overflow:hidden"><div style="left:-577px;top:-345px;width:1333px;height:708px">
<div class="t" style="right:706.00px;transform-origin:100% 0;top:347px;line-height:13px;font-size:11px;font-weight:400;color:#000;transform:scaleX(0.9808);">2</div>
</div></div>
<div style="left:177px;top:361px;width:266px;height:31px;background:#e8e8e8"></div>
<div style="left:177px;top:361px;width:266px;height:31px;overflow:hidden"><div style="left:-177px;top:-361px;width:1333px;height:708px">
<div class="t" style="left:180.00px;transform-origin:0 0;top:371px;line-height:13px;font-size:11px;font-weight:400;color:#000;transform:scaleX(1.0045);">000-05-00800/00-1</div>
</div></div>
<div style="left:444px;top:361px;width:132px;height:31px;background:#e8e8e8"></div>
<div style="left:444px;top:361px;width:132px;height:31px;overflow:hidden"><div style="left:-444px;top:-361px;width:1333px;height:708px">
<div class="t" style="left:447.00px;transform-origin:0 0;top:371px;line-height:13px;font-size:11px;font-weight:400;color:#000;transform:scaleX(0.9037);">MARCO</div>
<div class="t" style="left:487.00px;transform-origin:0 0;top:371px;line-height:13px;font-size:11px;font-weight:400;color:#000;transform:scaleX(0.9492);">345X70</div>
</div></div>
<div style="left:577px;top:361px;width:52px;height:31px;background:#e8e8e8"></div>
<div style="left:577px;top:361px;width:52px;height:31px;overflow:hidden"><div style="left:-577px;top:-361px;width:1333px;height:708px">
<div class="t" style="right:706.00px;transform-origin:100% 0;top:371px;line-height:13px;font-size:11px;font-weight:400;color:#000;transform:scaleX(0.9808);">1</div>
</div></div>
<div style="left:177px;top:393px;width:266px;height:15px;background:#e8e8e8"></div>
<div style="left:177px;top:393px;width:266px;height:15px;overflow:hidden"><div style="left:-177px;top:-393px;width:1333px;height:708px">
<div class="t" style="left:186.00px;transform-origin:0 0;top:395px;line-height:13px;font-size:11px;font-weight:400;color:#000;transform:scaleX(0.9870);">\__AI304-CHA</div>
<div class="t" style="left:259.00px;transform-origin:0 0;top:395px;line-height:13px;font-size:11px;font-weight:400;color:#000;transform:scaleX(0.9809);">1.50</div>
</div></div>
<div style="left:444px;top:393px;width:132px;height:15px;background:#e8e8e8"></div>
<div style="left:444px;top:393px;width:132px;height:15px;overflow:hidden"><div style="left:-444px;top:-393px;width:1333px;height:708px">
<div class="t" style="left:447.00px;transform-origin:0 0;top:395px;line-height:13px;font-size:11px;font-weight:400;color:#000;transform:scaleX(1.0088);">AI304</div>
<div class="t" style="left:479.00px;transform-origin:0 0;top:395px;line-height:13px;font-size:11px;font-weight:400;color:#000;transform:scaleX(1.0920);">-</div>
<div class="t" style="left:486.00px;transform-origin:0 0;top:395px;line-height:13px;font-size:11px;font-weight:400;color:#000;transform:scaleX(0.9042);">CHA</div>
<div class="t" style="left:510.00px;transform-origin:0 0;top:395px;line-height:13px;font-size:11px;font-weight:400;color:#000;transform:scaleX(0.9809);">1.50</div>
</div></div>
<div style="left:577px;top:393px;width:52px;height:15px;background:#e8e8e8"></div>
<div style="left:577px;top:393px;width:52px;height:15px;overflow:hidden"><div style="left:-577px;top:-393px;width:1333px;height:708px">
<div class="t" style="right:706.00px;transform-origin:100% 0;top:395px;line-height:13px;font-size:11px;font-weight:400;color:#000;transform:scaleX(0.9808);">0</div>
</div></div>
<div style="left:177px;top:409px;width:266px;height:15px;background:#e8e8e8"></div>
<div style="left:177px;top:409px;width:266px;height:15px;overflow:hidden"><div style="left:-177px;top:-409px;width:1333px;height:708px">
<div class="t" style="left:180.00px;transform-origin:0 0;top:411px;line-height:13px;font-size:11px;font-weight:400;color:#000;transform:scaleX(1.0045);">000-05-00900/00-1</div>
</div></div>
<div style="left:444px;top:409px;width:132px;height:15px;background:#e8e8e8"></div>
<div style="left:444px;top:409px;width:132px;height:15px;overflow:hidden"><div style="left:-444px;top:-409px;width:1333px;height:708px">
<div class="t" style="left:447.00px;transform-origin:0 0;top:411px;line-height:13px;font-size:11px;font-weight:400;color:#000;transform:scaleX(0.8925);">GOMA</div>
<div class="t" style="left:480.00px;transform-origin:0 0;top:411px;line-height:13px;font-size:11px;font-weight:400;color:#000;transform:scaleX(0.9492);">345X70</div>
</div></div>
<div style="left:577px;top:409px;width:52px;height:15px;background:#e8e8e8"></div>
<div style="left:577px;top:409px;width:52px;height:15px;overflow:hidden"><div style="left:-577px;top:-409px;width:1333px;height:708px">
<div class="t" style="right:706.00px;transform-origin:100% 0;top:411px;line-height:13px;font-size:11px;font-weight:400;color:#000;transform:scaleX(0.9808);">1</div>
</div></div>
<div style="left:177px;top:425px;width:266px;height:31px;background:#e8e8e8"></div>
<div style="left:177px;top:425px;width:266px;height:31px;overflow:hidden"><div style="left:-177px;top:-425px;width:1333px;height:708px">
<div class="t" style="left:180.00px;transform-origin:0 0;top:435px;line-height:13px;font-size:11px;font-weight:400;color:#000;transform:scaleX(1.0045);">000-05-10206/00-1</div>
</div></div>
<div style="left:444px;top:425px;width:132px;height:31px;background:#e8e8e8"></div>
<div style="left:444px;top:425px;width:132px;height:31px;overflow:hidden"><div style="left:-444px;top:-425px;width:1333px;height:708px">
<div class="t" style="left:447.00px;transform-origin:0 0;top:435px;line-height:13px;font-size:11px;font-weight:400;color:#000;transform:scaleX(0.9034);">CHASIS</div>
<div class="t" style="left:487.00px;transform-origin:0 0;top:435px;line-height:13px;font-size:11px;font-weight:400;color:#000;transform:scaleX(0.8908);">P/TABLERO</div>
<div class="t" style="left:545.00px;transform-origin:0 0;top:435px;line-height:13px;font-size:11px;font-weight:400;color:#000;transform:scaleX(0.9595);">1625X1200</div>
</div></div>
<div style="left:577px;top:425px;width:52px;height:31px;background:#e8e8e8"></div>
<div style="left:577px;top:425px;width:52px;height:31px;overflow:hidden"><div style="left:-577px;top:-425px;width:1333px;height:708px">
<div class="t" style="right:706.00px;transform-origin:100% 0;top:435px;line-height:13px;font-size:11px;font-weight:400;color:#000;transform:scaleX(0.9808);">1</div>
</div></div>
<div style="left:177px;top:457px;width:266px;height:15px;background:#e8e8e8"></div>
<div style="left:177px;top:457px;width:266px;height:15px;overflow:hidden"><div style="left:-177px;top:-457px;width:1333px;height:708px">
<div class="t" style="left:186.00px;transform-origin:0 0;top:459px;line-height:13px;font-size:11px;font-weight:400;color:#000;transform:scaleX(0.9282);">\__CH.GAL.-CHA</div>
<div class="t" style="left:269.00px;transform-origin:0 0;top:459px;line-height:13px;font-size:11px;font-weight:400;color:#000;transform:scaleX(0.9809);">1.50</div>
</div></div>
<div style="left:444px;top:457px;width:132px;height:15px;background:#e8e8e8"></div>
<div style="left:444px;top:457px;width:132px;height:15px;overflow:hidden"><div style="left:-444px;top:-457px;width:1333px;height:708px">
<div class="t" style="left:447.00px;transform-origin:0 0;top:459px;line-height:13px;font-size:11px;font-weight:400;color:#000;transform:scaleX(0.8861);">CH.GAL.</div>
<div class="t" style="left:489.00px;transform-origin:0 0;top:459px;line-height:13px;font-size:11px;font-weight:400;color:#000;transform:scaleX(1.0920);">-</div>
<div class="t" style="left:496.00px;transform-origin:0 0;top:459px;line-height:13px;font-size:11px;font-weight:400;color:#000;transform:scaleX(0.9042);">CHA</div>
<div class="t" style="left:520.00px;transform-origin:0 0;top:459px;line-height:13px;font-size:11px;font-weight:400;color:#000;transform:scaleX(0.9809);">1.50</div>
</div></div>
<div style="left:577px;top:457px;width:52px;height:15px;background:#e8e8e8"></div>
<div style="left:577px;top:457px;width:52px;height:15px;overflow:hidden"><div style="left:-577px;top:-457px;width:1333px;height:708px">
<div class="t" style="right:706.00px;transform-origin:100% 0;top:459px;line-height:13px;font-size:11px;font-weight:400;color:#000;transform:scaleX(0.9808);">0</div>
</div></div>
<div style="left:177px;top:473px;width:266px;height:47px;background:#e8e8e8"></div>
<div style="left:177px;top:473px;width:266px;height:47px;overflow:hidden"><div style="left:-177px;top:-473px;width:1333px;height:708px">
<div class="t" style="left:180.00px;transform-origin:0 0;top:491px;line-height:13px;font-size:11px;font-weight:400;color:#000;transform:scaleX(1.0045);">020-09-00126/00-1</div>
</div></div>
<div style="left:444px;top:473px;width:132px;height:47px;background:#e8e8e8"></div>
<div style="left:444px;top:473px;width:132px;height:47px;overflow:hidden"><div style="left:-444px;top:-473px;width:1333px;height:708px">
<div class="t" style="left:447.00px;transform-origin:0 0;top:491px;line-height:13px;font-size:11px;font-weight:400;color:#000;transform:scaleX(0.8997);">BISAGRA</div>
</div></div>
<div style="left:577px;top:473px;width:52px;height:47px;background:#e8e8e8"></div>
<div style="left:577px;top:473px;width:52px;height:47px;overflow:hidden"><div style="left:-577px;top:-473px;width:1333px;height:708px">
<div class="t" style="right:706.00px;transform-origin:100% 0;top:491px;line-height:13px;font-size:11px;font-weight:400;color:#000;transform:scaleX(0.9808);">4</div>
</div></div>
<div style="left:177px;top:521px;width:266px;height:15px;background:#e8e8e8"></div>
<div style="left:177px;top:521px;width:266px;height:15px;overflow:hidden"><div style="left:-177px;top:-521px;width:1333px;height:708px">
<div class="t" style="left:186.00px;transform-origin:0 0;top:523px;line-height:13px;font-size:11px;font-weight:400;color:#000;transform:scaleX(0.9782);">\__AI304-PLA</div>
<div class="t" style="left:256.00px;transform-origin:0 0;top:523px;line-height:13px;font-size:11px;font-weight:400;color:#000;transform:scaleX(0.9920);">31.70x9.50</div>
</div></div>
<div style="left:444px;top:521px;width:132px;height:15px;background:#e8e8e8"></div>
<div style="left:444px;top:521px;width:132px;height:15px;overflow:hidden"><div style="left:-444px;top:-521px;width:1333px;height:708px">
<div class="t" style="left:447.00px;transform-origin:0 0;top:523px;line-height:13px;font-size:11px;font-weight:400;color:#000;transform:scaleX(1.0088);">AI304</div>
<div class="t" style="left:479.00px;transform-origin:0 0;top:523px;line-height:13px;font-size:11px;font-weight:400;color:#000;transform:scaleX(1.0920);">-</div>
<div class="t" style="left:486.00px;transform-origin:0 0;top:523px;line-height:13px;font-size:11px;font-weight:400;color:#000;transform:scaleX(0.8657);">PLA</div>
<div class="t" style="left:507.00px;transform-origin:0 0;top:523px;line-height:13px;font-size:11px;font-weight:400;color:#000;transform:scaleX(0.9809);">31.70</div>
<div class="t" style="left:537.00px;transform-origin:0 0;top:523px;line-height:13px;font-size:11px;font-weight:400;color:#000;transform:scaleX(1.0909);">x</div>
<div class="t" style="left:546.00px;transform-origin:0 0;top:523px;line-height:13px;font-size:11px;font-weight:400;color:#000;transform:scaleX(0.9809);">9.50</div>
</div></div>
<div style="left:577px;top:521px;width:52px;height:15px;background:#e8e8e8"></div>
<div style="left:577px;top:521px;width:52px;height:15px;overflow:hidden"><div style="left:-577px;top:-521px;width:1333px;height:708px">
<div class="t" style="right:706.00px;transform-origin:100% 0;top:523px;line-height:13px;font-size:11px;font-weight:400;color:#000;transform:scaleX(0.9808);">4</div>
</div></div>
<div style="left:177px;top:537px;width:266px;height:31px;background:#e8e8e8"></div>
<div style="left:177px;top:537px;width:266px;height:31px;overflow:hidden"><div style="left:-177px;top:-537px;width:1333px;height:708px">
<div class="t" style="left:180.00px;transform-origin:0 0;top:547px;line-height:13px;font-size:11px;font-weight:400;color:#000;transform:scaleX(1.0045);">000-05-10037/00-1</div>
</div></div>
<div style="left:444px;top:537px;width:132px;height:31px;background:#e8e8e8"></div>
<div style="left:444px;top:537px;width:132px;height:31px;overflow:hidden"><div style="left:-444px;top:-537px;width:1333px;height:708px">
<div class="t" style="left:447.00px;transform-origin:0 0;top:547px;line-height:13px;font-size:11px;font-weight:400;color:#000;transform:scaleX(0.8809);">GABINETE</div>
<div class="t" style="left:499.00px;transform-origin:0 0;top:547px;line-height:13px;font-size:11px;font-weight:400;color:#000;transform:scaleX(0.9516);">1625X1200X350</div>
</div></div>
<div style="left:577px;top:537px;width:52px;height:31px;background:#e8e8e8"></div>
<div style="left:577px;top:537px;width:52px;height:31px;overflow:hidden"><div style="left:-577px;top:-537px;width:1333px;height:708px">
<div class="t" style="right:706.00px;transform-origin:100% 0;top:547px;line-height:13px;font-size:11px;font-weight:400;color:#000;transform:scaleX(0.9808);">1</div>
</div></div>
<div style="left:177px;top:569px;width:266px;height:31px;background:#e8e8e8"></div>
<div style="left:177px;top:569px;width:266px;height:31px;overflow:hidden"><div style="left:-177px;top:-569px;width:1333px;height:708px">
<div class="t" style="left:186.00px;transform-origin:0 0;top:579px;line-height:13px;font-size:11px;font-weight:400;color:#000;transform:scaleX(1.0104);">\__000-05-10005/06-1</div>
</div></div>
<div style="left:444px;top:569px;width:132px;height:31px;background:#e8e8e8"></div>
<div style="left:444px;top:569px;width:132px;height:31px;overflow:hidden"><div style="left:-444px;top:-569px;width:1333px;height:708px">
<div class="t" style="left:447.00px;transform-origin:0 0;top:579px;line-height:13px;font-size:11px;font-weight:400;color:#000;transform:scaleX(0.8760);">REFUERZO</div>
</div></div>
<div style="left:577px;top:569px;width:52px;height:31px;background:#e8e8e8"></div>
<div style="left:577px;top:569px;width:52px;height:31px;overflow:hidden"><div style="left:-577px;top:-569px;width:1333px;height:708px">
<div class="t" style="right:706.00px;transform-origin:100% 0;top:579px;line-height:13px;font-size:11px;font-weight:400;color:#000;transform:scaleX(0.9808);">3</div>
</div></div>
<div style="left:177px;top:601px;width:266px;height:15px;background:#e8e8e8"></div>
<div style="left:177px;top:601px;width:266px;height:15px;overflow:hidden"><div style="left:-177px;top:-601px;width:1333px;height:708px">
<div class="t" style="left:193.00px;transform-origin:0 0;top:603px;line-height:13px;font-size:11px;font-weight:400;color:#000;transform:scaleX(0.9642);">\__AC1010-CHA</div>
<div class="t" style="left:275.00px;transform-origin:0 0;top:603px;line-height:13px;font-size:11px;font-weight:400;color:#000;transform:scaleX(0.9809);">2.00</div>
</div></div>
<div style="left:444px;top:601px;width:132px;height:15px;background:#e8e8e8"></div>
<div style="left:444px;top:601px;width:132px;height:15px;overflow:hidden"><div style="left:-444px;top:-601px;width:1333px;height:708px">
<div class="t" style="left:447.00px;transform-origin:0 0;top:603px;line-height:13px;font-size:11px;font-weight:400;color:#000;transform:scaleX(0.9559);">AC1010</div>
<div class="t" style="left:488.00px;transform-origin:0 0;top:603px;line-height:13px;font-size:11px;font-weight:400;color:#000;transform:scaleX(1.0920);">-</div>
<div class="t" style="left:495.00px;transform-origin:0 0;top:603px;line-height:13px;font-size:11px;font-weight:400;color:#000;transform:scaleX(0.9042);">CHA</div>
<div class="t" style="left:519.00px;transform-origin:0 0;top:603px;line-height:13px;font-size:11px;font-weight:400;color:#000;transform:scaleX(0.9809);">2.00</div>
</div></div>
<div style="left:577px;top:601px;width:52px;height:15px;background:#e8e8e8"></div>
<div style="left:577px;top:601px;width:52px;height:15px;overflow:hidden"><div style="left:-577px;top:-601px;width:1333px;height:708px">
<div class="t" style="right:706.00px;transform-origin:100% 0;top:603px;line-height:13px;font-size:11px;font-weight:400;color:#000;transform:scaleX(0.9808);">0</div>
</div></div>
<div style="left:177px;top:617px;width:266px;height:16px;background:#e8e8e8"></div>
<div style="left:177px;top:617px;width:266px;height:16px;overflow:hidden"><div style="left:-177px;top:-617px;width:1333px;height:708px">
<div class="t" style="left:186.00px;transform-origin:0 0;top:620px;line-height:13px;font-size:11px;font-weight:400;color:#000;transform:scaleX(1.0104);">\__000-05-10041/00-1</div>
</div></div>
<div style="left:444px;top:617px;width:132px;height:16px;background:#e8e8e8"></div>
<div style="left:444px;top:617px;width:132px;height:16px;overflow:hidden"><div style="left:-444px;top:-617px;width:1333px;height:708px">
<div class="t" style="left:447.00px;transform-origin:0 0;top:620px;line-height:13px;font-size:11px;font-weight:400;color:#000;transform:scaleX(0.8854);">PARANTE</div>
</div></div>
<div style="left:577px;top:617px;width:52px;height:16px;background:#e8e8e8"></div>
<div style="left:577px;top:617px;width:52px;height:16px;overflow:hidden"><div style="left:-577px;top:-617px;width:1333px;height:708px">
<div class="t" style="right:706.00px;transform-origin:100% 0;top:620px;line-height:13px;font-size:11px;font-weight:400;color:#000;transform:scaleX(0.9808);">1</div>
</div></div>
<div style="left:630px;top:217px;width:79px;height:15px;background:#0a246a"></div>
<div style="left:630px;top:217px;width:79px;height:15px;overflow:hidden"><div style="left:-630px;top:-217px;width:1333px;height:708px">
<div class="t" style="left:633.00px;transform-origin:0 0;top:219px;line-height:13px;font-size:11px;font-weight:400;color:#fff;transform:scaleX(0.8831);">CORTE</div>
</div></div>
<div style="left:710px;top:217px;width:79px;height:15px;background:#0a246a"></div>
<div style="left:790px;top:217px;width:39px;height:15px;background:#0a246a"></div>
<div style="left:790px;top:217px;width:39px;height:15px;overflow:hidden"><div style="left:-790px;top:-217px;width:1333px;height:708px">
<div class="t" style="right:506.00px;transform-origin:100% 0;top:219px;line-height:13px;font-size:11px;font-weight:400;color:#fff;transform:scaleX(0.9808);">1</div>
</div></div>
<div style="left:830px;top:217px;width:132px;height:15px;background:#0a246a"></div>
<div style="left:830px;top:217px;width:132px;height:15px;overflow:hidden"><div style="left:-830px;top:-217px;width:1333px;height:708px">
<div class="t" style="left:833.00px;transform-origin:0 0;top:219px;line-height:13px;font-size:11px;font-weight:400;color:#fff;transform:scaleX(0.8890);">PAGLIONE</div>
<div class="t" style="left:886.00px;transform-origin:0 0;top:219px;line-height:13px;font-size:11px;font-weight:400;color:#fff;transform:scaleX(0.8569);">ESTEBAN</div>
<div class="t" style="left:933.00px;transform-origin:0 0;top:219px;line-height:13px;font-size:11px;font-weight:400;color:#fff;transform:scaleX(0.8726);">ANDRES</div>
</div></div>
<div style="left:963px;top:217px;width:32px;height:15px;background:#0a246a"></div>
<div style="left:963px;top:217px;width:32px;height:15px;overflow:hidden"><div style="left:-963px;top:-217px;width:1333px;height:708px">
<div class="t" style="left:966.00px;transform-origin:0 0;top:219px;line-height:13px;font-size:11px;font-weight:400;color:#fff;transform:scaleX(0.8843);">BLANDO</div>
</div></div>
<div style="left:996px;top:217px;width:52px;height:15px;background:#0a246a"></div>
<div style="left:996px;top:217px;width:52px;height:15px;overflow:hidden"><div style="left:-996px;top:-217px;width:1333px;height:708px">
<div class="t" style="left:999.00px;transform-origin:0 0;top:219px;line-height:13px;font-size:11px;font-weight:400;color:#fff;transform:scaleX(0.9143);">Min.</div>
</div></div>
<div style="left:1049px;top:217px;width:59px;height:15px;background:#0a246a"></div>
<div style="left:1049px;top:217px;width:59px;height:15px;overflow:hidden"><div style="left:-1049px;top:-217px;width:1333px;height:708px">
<div class="t" style="right:227.00px;transform-origin:100% 0;top:219px;line-height:13px;font-size:11px;font-weight:400;color:#fff;transform:scaleX(0.9808);">13</div>
</div></div>
<div style="left:1109px;top:217px;width:66px;height:15px;background:#0a246a"></div>
<div style="left:1136px;top:219px;width:11px;height:11px;box-sizing:border-box;background:#fff;border:1px solid #808080"></div>
<svg style="left:1135px;top:218px" width="13" height="13" shape-rendering="crispEdges"><g fill="#000"><rect x="3" y="5" width="1" height="3"/><rect x="4" y="6" width="1" height="3"/><rect x="5" y="7" width="1" height="3"/><rect x="6" y="6" width="1" height="3"/><rect x="7" y="5" width="1" height="3"/><rect x="8" y="4" width="1" height="3"/><rect x="9" y="3" width="1" height="3"/></g></svg>
<div style="left:1176px;top:217px;width:58px;height:15px;background:#0a246a"></div>
<div style="left:1176px;top:217px;width:58px;height:15px;overflow:hidden"><div style="left:-1176px;top:-217px;width:1333px;height:708px">
<div class="t" style="left:1179.00px;transform-origin:0 0;top:219px;line-height:13px;font-size:11px;font-weight:400;color:#fff;">Argentina</div>
</div></div>
<div style="left:1235px;top:217px;width:73px;height:15px;background:#0a246a"></div>
<div style="left:1235px;top:217px;width:73px;height:15px;overflow:hidden"><div style="left:-1235px;top:-217px;width:1333px;height:708px">
<div class="t" style="left:1238.00px;transform-origin:0 0;top:219px;line-height:13px;font-size:11px;font-weight:400;color:#fff;">Argentina</div>
</div></div>
<div style="left:630px;top:233px;width:79px;height:15px;background:#e8e8e8"></div>
<div style="left:630px;top:233px;width:79px;height:15px;overflow:hidden"><div style="left:-630px;top:-233px;width:1333px;height:708px">
<div class="t" style="left:633.00px;transform-origin:0 0;top:235px;line-height:13px;font-size:11px;font-weight:400;color:#000;transform:scaleX(0.8726);">FRESA</div>
</div></div>
<div style="left:710px;top:233px;width:79px;height:15px;background:#e8e8e8"></div>
<div style="left:790px;top:233px;width:39px;height:15px;background:#e8e8e8"></div>
<div style="left:790px;top:233px;width:39px;height:15px;overflow:hidden"><div style="left:-790px;top:-233px;width:1333px;height:708px">
<div class="t" style="right:506.00px;transform-origin:100% 0;top:235px;line-height:13px;font-size:11px;font-weight:400;color:#000;transform:scaleX(0.9808);">2</div>
</div></div>
<div style="left:830px;top:233px;width:132px;height:15px;background:#e8e8e8"></div>
<div style="left:830px;top:233px;width:132px;height:15px;overflow:hidden"><div style="left:-830px;top:-233px;width:1333px;height:708px">
<div class="t" style="left:833.00px;transform-origin:0 0;top:235px;line-height:13px;font-size:11px;font-weight:400;color:#000;transform:scaleX(0.8899);">VASCONCELO</div>
<div class="t" style="left:904.00px;transform-origin:0 0;top:235px;line-height:13px;font-size:11px;font-weight:400;color:#000;transform:scaleX(0.8709);">JORGE</div>
<div class="t" style="left:940.00px;transform-origin:0 0;top:235px;line-height:13px;font-size:11px;font-weight:400;color:#000;transform:scaleX(0.8680);">LEON</div>
</div></div>
<div style="left:963px;top:233px;width:32px;height:15px;background:#e8e8e8"></div>
<div style="left:963px;top:233px;width:32px;height:15px;overflow:hidden"><div style="left:-963px;top:-233px;width:1333px;height:708px">
<div class="t" style="left:966.00px;transform-origin:0 0;top:235px;line-height:13px;font-size:11px;font-weight:400;color:#000;transform:scaleX(0.8843);">BLANDO</div>
</div></div>
<div style="left:996px;top:233px;width:52px;height:15px;background:#e8e8e8"></div>
<div style="left:996px;top:233px;width:52px;height:15px;overflow:hidden"><div style="left:-996px;top:-233px;width:1333px;height:708px">
<div class="t" style="left:999.00px;transform-origin:0 0;top:235px;line-height:13px;font-size:11px;font-weight:400;color:#000;transform:scaleX(0.9143);">Min.</div>
</div></div>
<div style="left:1049px;top:233px;width:59px;height:15px;background:#e8e8e8"></div>
<div style="left:1049px;top:233px;width:59px;height:15px;overflow:hidden"><div style="left:-1049px;top:-233px;width:1333px;height:708px">
<div class="t" style="right:227.00px;transform-origin:100% 0;top:235px;line-height:13px;font-size:11px;font-weight:400;color:#000;transform:scaleX(0.9808);">30</div>
</div></div>
<div style="left:1109px;top:233px;width:66px;height:15px;background:#e8e8e8"></div>
<div style="left:1136px;top:235px;width:11px;height:11px;box-sizing:border-box;background:#fff;border:1px solid #808080"></div>
<svg style="left:1135px;top:234px" width="13" height="13" shape-rendering="crispEdges"><g fill="#000"><rect x="3" y="5" width="1" height="3"/><rect x="4" y="6" width="1" height="3"/><rect x="5" y="7" width="1" height="3"/><rect x="6" y="6" width="1" height="3"/><rect x="7" y="5" width="1" height="3"/><rect x="8" y="4" width="1" height="3"/><rect x="9" y="3" width="1" height="3"/></g></svg>
<div style="left:1176px;top:233px;width:58px;height:15px;background:#e8e8e8"></div>
<div style="left:1176px;top:233px;width:58px;height:15px;overflow:hidden"><div style="left:-1176px;top:-233px;width:1333px;height:708px">
<div class="t" style="left:1179.00px;transform-origin:0 0;top:235px;line-height:13px;font-size:11px;font-weight:400;color:#000;">Argentina</div>
</div></div>
<div style="left:1235px;top:233px;width:73px;height:15px;background:#e8e8e8"></div>
<div style="left:1235px;top:233px;width:73px;height:15px;overflow:hidden"><div style="left:-1235px;top:-233px;width:1333px;height:708px">
<div class="t" style="left:1238.00px;transform-origin:0 0;top:235px;line-height:13px;font-size:11px;font-weight:400;color:#000;">Argentina</div>
</div></div>
<div style="left:630px;top:249px;width:79px;height:15px;background:#e8e8e8"></div>
<div style="left:630px;top:249px;width:79px;height:15px;overflow:hidden"><div style="left:-630px;top:-249px;width:1333px;height:708px">
<div class="t" style="left:633.00px;transform-origin:0 0;top:251px;line-height:13px;font-size:11px;font-weight:400;color:#000;transform:scaleX(0.8773);">AJUSTE</div>
</div></div>
<div style="left:710px;top:249px;width:79px;height:15px;background:#e8e8e8"></div>
<div style="left:790px;top:249px;width:39px;height:15px;background:#e8e8e8"></div>
<div style="left:790px;top:249px;width:39px;height:15px;overflow:hidden"><div style="left:-790px;top:-249px;width:1333px;height:708px">
<div class="t" style="right:506.00px;transform-origin:100% 0;top:251px;line-height:13px;font-size:11px;font-weight:400;color:#000;transform:scaleX(0.9808);">3</div>
</div></div>
<div style="left:830px;top:249px;width:132px;height:15px;background:#e8e8e8"></div>
<div style="left:830px;top:249px;width:132px;height:15px;overflow:hidden"><div style="left:-830px;top:-249px;width:1333px;height:708px">
<div class="t" style="left:833.00px;transform-origin:0 0;top:251px;line-height:13px;font-size:11px;font-weight:400;color:#000;transform:scaleX(0.8899);">VASCONCELO</div>
<div class="t" style="left:904.00px;transform-origin:0 0;top:251px;line-height:13px;font-size:11px;font-weight:400;color:#000;transform:scaleX(0.8709);">JORGE</div>
<div class="t" style="left:940.00px;transform-origin:0 0;top:251px;line-height:13px;font-size:11px;font-weight:400;color:#000;transform:scaleX(0.8680);">LEON</div>
</div></div>
<div style="left:963px;top:249px;width:32px;height:15px;background:#e8e8e8"></div>
<div style="left:963px;top:249px;width:32px;height:15px;overflow:hidden"><div style="left:-963px;top:-249px;width:1333px;height:708px">
<div class="t" style="left:966.00px;transform-origin:0 0;top:251px;line-height:13px;font-size:11px;font-weight:400;color:#000;transform:scaleX(0.8843);">BLANDO</div>
</div></div>
<div style="left:996px;top:249px;width:52px;height:15px;background:#e8e8e8"></div>
<div style="left:996px;top:249px;width:52px;height:15px;overflow:hidden"><div style="left:-996px;top:-249px;width:1333px;height:708px">
<div class="t" style="left:999.00px;transform-origin:0 0;top:251px;line-height:13px;font-size:11px;font-weight:400;color:#000;transform:scaleX(0.9143);">Min.</div>
</div></div>
<div style="left:1049px;top:249px;width:59px;height:15px;background:#e8e8e8"></div>
<div style="left:1049px;top:249px;width:59px;height:15px;overflow:hidden"><div style="left:-1049px;top:-249px;width:1333px;height:708px">
<div class="t" style="right:227.00px;transform-origin:100% 0;top:251px;line-height:13px;font-size:11px;font-weight:400;color:#000;transform:scaleX(0.9808);">36</div>
</div></div>
<div style="left:1109px;top:249px;width:66px;height:15px;background:#e8e8e8"></div>
<div style="left:1136px;top:251px;width:11px;height:11px;box-sizing:border-box;background:#fff;border:1px solid #808080"></div>
<svg style="left:1135px;top:250px" width="13" height="13" shape-rendering="crispEdges"><g fill="#000"><rect x="3" y="5" width="1" height="3"/><rect x="4" y="6" width="1" height="3"/><rect x="5" y="7" width="1" height="3"/><rect x="6" y="6" width="1" height="3"/><rect x="7" y="5" width="1" height="3"/><rect x="8" y="4" width="1" height="3"/><rect x="9" y="3" width="1" height="3"/></g></svg>
<div style="left:1176px;top:249px;width:58px;height:15px;background:#e8e8e8"></div>
<div style="left:1176px;top:249px;width:58px;height:15px;overflow:hidden"><div style="left:-1176px;top:-249px;width:1333px;height:708px">
<div class="t" style="left:1179.00px;transform-origin:0 0;top:251px;line-height:13px;font-size:11px;font-weight:400;color:#000;">Argentina</div>
</div></div>
<div style="left:1235px;top:249px;width:73px;height:15px;background:#e8e8e8"></div>
<div style="left:1235px;top:249px;width:73px;height:15px;overflow:hidden"><div style="left:-1235px;top:-249px;width:1333px;height:708px">
<div class="t" style="left:1238.00px;transform-origin:0 0;top:251px;line-height:13px;font-size:11px;font-weight:400;color:#000;">Argentina</div>
</div></div>
<div style="left:630px;top:265px;width:79px;height:15px;background:#e8e8e8"></div>
<div style="left:630px;top:265px;width:79px;height:15px;overflow:hidden"><div style="left:-630px;top:-265px;width:1333px;height:708px">
<div class="t" style="left:633.00px;transform-origin:0 0;top:267px;line-height:13px;font-size:11px;font-weight:400;color:#000;transform:scaleX(0.9106);">NIQUELADO</div>
</div></div>
<div style="left:710px;top:265px;width:79px;height:15px;background:#e8e8e8"></div>
<div style="left:790px;top:265px;width:39px;height:15px;background:#e8e8e8"></div>
<div style="left:790px;top:265px;width:39px;height:15px;overflow:hidden"><div style="left:-790px;top:-265px;width:1333px;height:708px">
<div class="t" style="right:506.00px;transform-origin:100% 0;top:267px;line-height:13px;font-size:11px;font-weight:400;color:#000;transform:scaleX(0.9808);">4</div>
</div></div>
<div style="left:830px;top:265px;width:132px;height:15px;background:#e8e8e8"></div>
<div style="left:830px;top:265px;width:132px;height:15px;overflow:hidden"><div style="left:-830px;top:-265px;width:1333px;height:708px">
<div class="t" style="left:833.00px;transform-origin:0 0;top:267px;line-height:13px;font-size:11px;font-weight:400;color:#000;transform:scaleX(0.9014);">CATELLANI</div>
<div class="t" style="left:890.00px;transform-origin:0 0;top:267px;line-height:13px;font-size:11px;font-weight:400;color:#000;transform:scaleX(0.9285);">ANA</div>
<div class="t" style="left:914.00px;transform-origin:0 0;top:267px;line-height:13px;font-size:11px;font-weight:400;color:#000;transform:scaleX(0.9247);">CAROLINA</div>
</div></div>
<div style="left:963px;top:265px;width:32px;height:15px;background:#e8e8e8"></div>
<div style="left:963px;top:265px;width:32px;height:15px;overflow:hidden"><div style="left:-963px;top:-265px;width:1333px;height:708px">
<div class="t" style="left:966.00px;transform-origin:0 0;top:267px;line-height:13px;font-size:11px;font-weight:400;color:#000;transform:scaleX(0.8843);">BLANDO</div>
</div></div>
<div style="left:996px;top:265px;width:52px;height:15px;background:#e8e8e8"></div>
<div style="left:996px;top:265px;width:52px;height:15px;overflow:hidden"><div style="left:-996px;top:-265px;width:1333px;height:708px">
<div class="t" style="left:999.00px;transform-origin:0 0;top:267px;line-height:13px;font-size:11px;font-weight:400;color:#000;transform:scaleX(0.9042);">Dm2</div>
</div></div>
<div style="left:1049px;top:265px;width:59px;height:15px;background:#e8e8e8"></div>
<div style="left:1049px;top:265px;width:59px;height:15px;overflow:hidden"><div style="left:-1049px;top:-265px;width:1333px;height:708px">
<div class="t" style="right:227.00px;transform-origin:100% 0;top:267px;line-height:13px;font-size:11px;font-weight:400;color:#000;transform:scaleX(0.9809);">1,66</div>
</div></div>
<div style="left:1109px;top:265px;width:66px;height:15px;background:#e8e8e8"></div>
<div style="left:1136px;top:267px;width:11px;height:11px;box-sizing:border-box;background:#fff;border:1px solid #808080"></div>
<svg style="left:1135px;top:266px" width="13" height="13" shape-rendering="crispEdges"><g fill="#000"><rect x="3" y="5" width="1" height="3"/><rect x="4" y="6" width="1" height="3"/><rect x="5" y="7" width="1" height="3"/><rect x="6" y="6" width="1" height="3"/><rect x="7" y="5" width="1" height="3"/><rect x="8" y="4" width="1" height="3"/><rect x="9" y="3" width="1" height="3"/></g></svg>
<div style="left:1176px;top:265px;width:58px;height:15px;background:#e8e8e8"></div>
<div style="left:1176px;top:265px;width:58px;height:15px;overflow:hidden"><div style="left:-1176px;top:-265px;width:1333px;height:708px">
<div class="t" style="left:1179.00px;transform-origin:0 0;top:267px;line-height:13px;font-size:11px;font-weight:400;color:#000;">Argentina</div>
</div></div>
<div style="left:1235px;top:265px;width:73px;height:15px;background:#e8e8e8"></div>
<div style="left:1235px;top:265px;width:73px;height:15px;overflow:hidden"><div style="left:-1235px;top:-265px;width:1333px;height:708px">
<div class="t" style="left:1238.00px;transform-origin:0 0;top:267px;line-height:13px;font-size:11px;font-weight:400;color:#000;">Argentina</div>
</div></div>
<div style="left:630px;top:281px;width:79px;height:15px;background:#e8e8e8"></div>
<div style="left:710px;top:281px;width:79px;height:15px;background:#e8e8e8"></div>
<div style="left:790px;top:281px;width:39px;height:15px;background:#e8e8e8"></div>
<div style="left:830px;top:281px;width:132px;height:15px;background:#e8e8e8"></div>
<div style="left:830px;top:281px;width:132px;height:15px;overflow:hidden"><div style="left:-830px;top:-281px;width:1333px;height:708px">
<div class="t" style="left:833.00px;transform-origin:0 0;top:283px;line-height:13px;font-size:11px;font-weight:400;color:#000;transform:scaleX(0.8878);">WOLODARSKY</div>
<div class="t" style="left:906.00px;transform-origin:0 0;top:283px;line-height:13px;font-size:11px;font-weight:400;color:#000;transform:scaleX(0.9008);">ABRAHAM</div>
</div></div>
<div style="left:963px;top:281px;width:32px;height:15px;background:#e8e8e8"></div>
<div style="left:963px;top:281px;width:32px;height:15px;overflow:hidden"><div style="left:-963px;top:-281px;width:1333px;height:708px">
<div class="t" style="left:966.00px;transform-origin:0 0;top:283px;line-height:13px;font-size:11px;font-weight:400;color:#000;transform:scaleX(0.8843);">BLANDO</div>
</div></div>
<div style="left:996px;top:281px;width:52px;height:15px;background:#e8e8e8"></div>
<div style="left:1049px;top:281px;width:59px;height:15px;background:#e8e8e8"></div>
<div style="left:1109px;top:281px;width:66px;height:15px;background:#e8e8e8"></div>
<div style="left:1136px;top:283px;width:11px;height:11px;box-sizing:border-box;background:#fff;border:1px solid #808080"></div>
<div style="left:1176px;top:281px;width:58px;height:15px;background:#e8e8e8"></div>
<div style="left:1235px;top:281px;width:73px;height:15px;background:#e8e8e8"></div>
<div style="left:1235px;top:281px;width:73px;height:15px;overflow:hidden"><div style="left:-1235px;top:-281px;width:1333px;height:708px">
<div class="t" style="left:1238.00px;transform-origin:0 0;top:283px;line-height:13px;font-size:11px;font-weight:400;color:#000;">Argentina</div>
</div></div>
<div style="left:630px;top:297px;width:79px;height:15px;background:#e8e8e8"></div>
<div style="left:630px;top:297px;width:79px;height:15px;overflow:hidden"><div style="left:-630px;top:-297px;width:1333px;height:708px">
<div class="t" style="left:633.00px;transform-origin:0 0;top:299px;line-height:13px;font-size:11px;font-weight:400;color:#000;transform:scaleX(0.8831);">CORTE</div>
</div></div>
<div style="left:710px;top:297px;width:79px;height:15px;background:#e8e8e8"></div>
<div style="left:790px;top:297px;width:39px;height:15px;background:#e8e8e8"></div>
<div style="left:790px;top:297px;width:39px;height:15px;overflow:hidden"><div style="left:-790px;top:-297px;width:1333px;height:708px">
<div class="t" style="right:506.00px;transform-origin:100% 0;top:299px;line-height:13px;font-size:11px;font-weight:400;color:#000;transform:scaleX(0.9808);">2</div>
</div></div>
<div style="left:830px;top:297px;width:132px;height:15px;background:#e8e8e8"></div>
<div style="left:830px;top:297px;width:132px;height:15px;overflow:hidden"><div style="left:-830px;top:-297px;width:1333px;height:708px">
<div class="t" style="left:833.00px;transform-origin:0 0;top:299px;line-height:13px;font-size:11px;font-weight:400;color:#000;transform:scaleX(0.8890);">PAGLIONE</div>
<div class="t" style="left:886.00px;transform-origin:0 0;top:299px;line-height:13px;font-size:11px;font-weight:400;color:#000;transform:scaleX(0.8569);">ESTEBAN</div>
<div class="t" style="left:933.00px;transform-origin:0 0;top:299px;line-height:13px;font-size:11px;font-weight:400;color:#000;transform:scaleX(0.8726);">ANDRES</div>
</div></div>
<div style="left:963px;top:297px;width:32px;height:15px;background:#e8e8e8"></div>
<div style="left:963px;top:297px;width:32px;height:15px;overflow:hidden"><div style="left:-963px;top:-297px;width:1333px;height:708px">
<div class="t" style="left:966.00px;transform-origin:0 0;top:299px;line-height:13px;font-size:11px;font-weight:400;color:#000;transform:scaleX(0.8843);">BLANDO</div>
</div></div>
<div style="left:996px;top:297px;width:52px;height:15px;background:#e8e8e8"></div>
<div style="left:996px;top:297px;width:52px;height:15px;overflow:hidden"><div style="left:-996px;top:-297px;width:1333px;height:708px">
<div class="t" style="left:999.00px;transform-origin:0 0;top:299px;line-height:13px;font-size:11px;font-weight:400;color:#000;transform:scaleX(0.9143);">Min.</div>
</div></div>
<div style="left:1049px;top:297px;width:59px;height:15px;background:#e8e8e8"></div>
<div style="left:1049px;top:297px;width:59px;height:15px;overflow:hidden"><div style="left:-1049px;top:-297px;width:1333px;height:708px">
<div class="t" style="right:227.00px;transform-origin:100% 0;top:299px;line-height:13px;font-size:11px;font-weight:400;color:#000;transform:scaleX(0.9808);">7</div>
</div></div>
<div style="left:1109px;top:297px;width:66px;height:15px;background:#e8e8e8"></div>
<div style="left:1136px;top:299px;width:11px;height:11px;box-sizing:border-box;background:#fff;border:1px solid #808080"></div>
<div style="left:1176px;top:297px;width:58px;height:15px;background:#e8e8e8"></div>
<div style="left:1176px;top:297px;width:58px;height:15px;overflow:hidden"><div style="left:-1176px;top:-297px;width:1333px;height:708px">
<div class="t" style="left:1179.00px;transform-origin:0 0;top:299px;line-height:13px;font-size:11px;font-weight:400;color:#000;">Argentina</div>
</div></div>
<div style="left:1235px;top:297px;width:73px;height:15px;background:#e8e8e8"></div>
<div style="left:1235px;top:297px;width:73px;height:15px;overflow:hidden"><div style="left:-1235px;top:-297px;width:1333px;height:708px">
<div class="t" style="left:1238.00px;transform-origin:0 0;top:299px;line-height:13px;font-size:11px;font-weight:400;color:#000;">Argentina</div>
</div></div>
<div style="left:630px;top:313px;width:79px;height:15px;background:#e8e8e8"></div>
<div style="left:630px;top:313px;width:79px;height:15px;overflow:hidden"><div style="left:-630px;top:-313px;width:1333px;height:708px">
<div class="t" style="left:633.00px;transform-origin:0 0;top:315px;line-height:13px;font-size:11px;font-weight:400;color:#000;transform:scaleX(0.8773);">AJUSTE</div>
</div></div>
<div style="left:710px;top:313px;width:79px;height:15px;background:#e8e8e8"></div>
<div style="left:790px;top:313px;width:39px;height:15px;background:#e8e8e8"></div>
<div style="left:790px;top:313px;width:39px;height:15px;overflow:hidden"><div style="left:-790px;top:-313px;width:1333px;height:708px">
<div class="t" style="right:506.00px;transform-origin:100% 0;top:315px;line-height:13px;font-size:11px;font-weight:400;color:#000;transform:scaleX(0.9808);">3</div>
</div></div>
<div style="left:830px;top:313px;width:132px;height:15px;background:#e8e8e8"></div>
<div style="left:830px;top:313px;width:132px;height:15px;overflow:hidden"><div style="left:-830px;top:-313px;width:1333px;height:708px">
<div class="t" style="left:833.00px;transform-origin:0 0;top:315px;line-height:13px;font-size:11px;font-weight:400;color:#000;transform:scaleX(0.8890);">PAGLIONE</div>
<div class="t" style="left:886.00px;transform-origin:0 0;top:315px;line-height:13px;font-size:11px;font-weight:400;color:#000;transform:scaleX(0.9111);">NICOLAS</div>
</div></div>
<div style="left:963px;top:313px;width:32px;height:15px;background:#e8e8e8"></div>
<div style="left:963px;top:313px;width:32px;height:15px;overflow:hidden"><div style="left:-963px;top:-313px;width:1333px;height:708px">
<div class="t" style="left:966.00px;transform-origin:0 0;top:315px;line-height:13px;font-size:11px;font-weight:400;color:#000;transform:scaleX(0.8843);">BLANDO</div>
</div></div>
<div style="left:996px;top:313px;width:52px;height:15px;background:#e8e8e8"></div>
<div style="left:996px;top:313px;width:52px;height:15px;overflow:hidden"><div style="left:-996px;top:-313px;width:1333px;height:708px">
<div class="t" style="left:999.00px;transform-origin:0 0;top:315px;line-height:13px;font-size:11px;font-weight:400;color:#000;transform:scaleX(0.9143);">Min.</div>
</div></div>
<div style="left:1049px;top:313px;width:59px;height:15px;background:#e8e8e8"></div>
<div style="left:1049px;top:313px;width:59px;height:15px;overflow:hidden"><div style="left:-1049px;top:-313px;width:1333px;height:708px">
<div class="t" style="right:227.00px;transform-origin:100% 0;top:315px;line-height:13px;font-size:11px;font-weight:400;color:#000;transform:scaleX(0.9808);">50</div>
</div></div>
<div style="left:1109px;top:313px;width:66px;height:15px;background:#e8e8e8"></div>
<div style="left:1136px;top:315px;width:11px;height:11px;box-sizing:border-box;background:#fff;border:1px solid #808080"></div>
<svg style="left:1135px;top:314px" width="13" height="13" shape-rendering="crispEdges"><g fill="#000"><rect x="3" y="5" width="1" height="3"/><rect x="4" y="6" width="1" height="3"/><rect x="5" y="7" width="1" height="3"/><rect x="6" y="6" width="1" height="3"/><rect x="7" y="5" width="1" height="3"/><rect x="8" y="4" width="1" height="3"/><rect x="9" y="3" width="1" height="3"/></g></svg>
<div style="left:1176px;top:313px;width:58px;height:15px;background:#e8e8e8"></div>
<div style="left:1176px;top:313px;width:58px;height:15px;overflow:hidden"><div style="left:-1176px;top:-313px;width:1333px;height:708px">
<div class="t" style="left:1179.00px;transform-origin:0 0;top:315px;line-height:13px;font-size:11px;font-weight:400;color:#000;">Argentina</div>
</div></div>
<div style="left:1235px;top:313px;width:73px;height:15px;background:#e8e8e8"></div>
<div style="left:1235px;top:313px;width:73px;height:15px;overflow:hidden"><div style="left:-1235px;top:-313px;width:1333px;height:708px">
<div class="t" style="left:1238.00px;transform-origin:0 0;top:315px;line-height:13px;font-size:11px;font-weight:400;color:#000;">Argentina</div>
</div></div>
<div style="left:630px;top:329px;width:79px;height:15px;background:#e8e8e8"></div>
<div style="left:630px;top:329px;width:79px;height:15px;overflow:hidden"><div style="left:-630px;top:-329px;width:1333px;height:708px">
<div class="t" style="left:633.00px;transform-origin:0 0;top:331px;line-height:13px;font-size:11px;font-weight:400;color:#000;transform:scaleX(0.9106);">NIQUELADO</div>
</div></div>
<div style="left:710px;top:329px;width:79px;height:15px;background:#e8e8e8"></div>
<div style="left:790px;top:329px;width:39px;height:15px;background:#e8e8e8"></div>
<div style="left:790px;top:329px;width:39px;height:15px;overflow:hidden"><div style="left:-790px;top:-329px;width:1333px;height:708px">
<div class="t" style="right:506.00px;transform-origin:100% 0;top:331px;line-height:13px;font-size:11px;font-weight:400;color:#000;transform:scaleX(0.9808);">4</div>
</div></div>
<div style="left:830px;top:329px;width:132px;height:15px;background:#e8e8e8"></div>
<div style="left:830px;top:329px;width:132px;height:15px;overflow:hidden"><div style="left:-830px;top:-329px;width:1333px;height:708px">
<div class="t" style="left:833.00px;transform-origin:0 0;top:331px;line-height:13px;font-size:11px;font-weight:400;color:#000;transform:scaleX(0.9014);">CATELLANI</div>
<div class="t" style="left:890.00px;transform-origin:0 0;top:331px;line-height:13px;font-size:11px;font-weight:400;color:#000;transform:scaleX(0.9285);">ANA</div>
<div class="t" style="left:914.00px;transform-origin:0 0;top:331px;line-height:13px;font-size:11px;font-weight:400;color:#000;transform:scaleX(0.9247);">CAROLINA</div>
</div></div>
<div style="left:963px;top:329px;width:32px;height:15px;background:#e8e8e8"></div>
<div style="left:963px;top:329px;width:32px;height:15px;overflow:hidden"><div style="left:-963px;top:-329px;width:1333px;height:708px">
<div class="t" style="left:966.00px;transform-origin:0 0;top:331px;line-height:13px;font-size:11px;font-weight:400;color:#000;transform:scaleX(0.8843);">BLANDO</div>
</div></div>
<div style="left:996px;top:329px;width:52px;height:15px;background:#e8e8e8"></div>
<div style="left:996px;top:329px;width:52px;height:15px;overflow:hidden"><div style="left:-996px;top:-329px;width:1333px;height:708px">
<div class="t" style="left:999.00px;transform-origin:0 0;top:331px;line-height:13px;font-size:11px;font-weight:400;color:#000;transform:scaleX(0.9042);">Dm2</div>
</div></div>
<div style="left:1049px;top:329px;width:59px;height:15px;background:#e8e8e8"></div>
<div style="left:1049px;top:329px;width:59px;height:15px;overflow:hidden"><div style="left:-1049px;top:-329px;width:1333px;height:708px">
<div class="t" style="right:227.00px;transform-origin:100% 0;top:331px;line-height:13px;font-size:11px;font-weight:400;color:#000;transform:scaleX(0.9809);">0,81</div>
</div></div>
<div style="left:1109px;top:329px;width:66px;height:15px;background:#e8e8e8"></div>
<div style="left:1136px;top:331px;width:11px;height:11px;box-sizing:border-box;background:#fff;border:1px solid #808080"></div>
<svg style="left:1135px;top:330px" width="13" height="13" shape-rendering="crispEdges"><g fill="#000"><rect x="3" y="5" width="1" height="3"/><rect x="4" y="6" width="1" height="3"/><rect x="5" y="7" width="1" height="3"/><rect x="6" y="6" width="1" height="3"/><rect x="7" y="5" width="1" height="3"/><rect x="8" y="4" width="1" height="3"/><rect x="9" y="3" width="1" height="3"/></g></svg>
<div style="left:1176px;top:329px;width:58px;height:15px;background:#e8e8e8"></div>
<div style="left:1176px;top:329px;width:58px;height:15px;overflow:hidden"><div style="left:-1176px;top:-329px;width:1333px;height:708px">
<div class="t" style="left:1179.00px;transform-origin:0 0;top:331px;line-height:13px;font-size:11px;font-weight:400;color:#000;">Argentina</div>
</div></div>
<div style="left:1235px;top:329px;width:73px;height:15px;background:#e8e8e8"></div>
<div style="left:1235px;top:329px;width:73px;height:15px;overflow:hidden"><div style="left:-1235px;top:-329px;width:1333px;height:708px">
<div class="t" style="left:1238.00px;transform-origin:0 0;top:331px;line-height:13px;font-size:11px;font-weight:400;color:#000;">Argentina</div>
</div></div>
<div style="left:630px;top:345px;width:79px;height:15px;background:#e8e8e8"></div>
<div style="left:710px;top:345px;width:79px;height:15px;background:#e8e8e8"></div>
<div style="left:790px;top:345px;width:39px;height:15px;background:#e8e8e8"></div>
<div style="left:830px;top:345px;width:132px;height:15px;background:#e8e8e8"></div>
<div style="left:830px;top:345px;width:132px;height:15px;overflow:hidden"><div style="left:-830px;top:-345px;width:1333px;height:708px">
<div class="t" style="left:833.00px;transform-origin:0 0;top:347px;line-height:13px;font-size:11px;font-weight:400;color:#000;transform:scaleX(0.8878);">WOLODARSKY</div>
<div class="t" style="left:906.00px;transform-origin:0 0;top:347px;line-height:13px;font-size:11px;font-weight:400;color:#000;transform:scaleX(0.9008);">ABRAHAM</div>
</div></div>
<div style="left:963px;top:345px;width:32px;height:15px;background:#e8e8e8"></div>
<div style="left:963px;top:345px;width:32px;height:15px;overflow:hidden"><div style="left:-963px;top:-345px;width:1333px;height:708px">
<div class="t" style="left:966.00px;transform-origin:0 0;top:347px;line-height:13px;font-size:11px;font-weight:400;color:#000;transform:scaleX(0.8843);">BLANDO</div>
</div></div>
<div style="left:996px;top:345px;width:52px;height:15px;background:#e8e8e8"></div>
<div style="left:1049px;top:345px;width:59px;height:15px;background:#e8e8e8"></div>
<div style="left:1109px;top:345px;width:66px;height:15px;background:#e8e8e8"></div>
<div style="left:1136px;top:347px;width:11px;height:11px;box-sizing:border-box;background:#fff;border:1px solid #808080"></div>
<div style="left:1176px;top:345px;width:58px;height:15px;background:#e8e8e8"></div>
<div style="left:1235px;top:345px;width:73px;height:15px;background:#e8e8e8"></div>
<div style="left:1235px;top:345px;width:73px;height:15px;overflow:hidden"><div style="left:-1235px;top:-345px;width:1333px;height:708px">
<div class="t" style="left:1238.00px;transform-origin:0 0;top:347px;line-height:13px;font-size:11px;font-weight:400;color:#000;">Argentina</div>
</div></div>
<div style="left:630px;top:361px;width:79px;height:15px;background:#e8e8e8"></div>
<div style="left:630px;top:361px;width:79px;height:15px;overflow:hidden"><div style="left:-630px;top:-361px;width:1333px;height:708px">
<div class="t" style="left:633.00px;transform-origin:0 0;top:363px;line-height:13px;font-size:11px;font-weight:400;color:#000;transform:scaleX(0.8974);">CTCN-DOL</div>
</div></div>
<div style="left:710px;top:361px;width:79px;height:15px;background:#e8e8e8"></div>
<div style="left:790px;top:361px;width:39px;height:15px;background:#e8e8e8"></div>
<div style="left:790px;top:361px;width:39px;height:15px;overflow:hidden"><div style="left:-790px;top:-361px;width:1333px;height:708px">
<div class="t" style="right:506.00px;transform-origin:100% 0;top:363px;line-height:13px;font-size:11px;font-weight:400;color:#000;transform:scaleX(0.9808);">1</div>
</div></div>
<div style="left:830px;top:361px;width:132px;height:15px;background:#e8e8e8"></div>
<div style="left:830px;top:361px;width:132px;height:15px;overflow:hidden"><div style="left:-830px;top:-361px;width:1333px;height:708px">
<div class="t" style="left:833.00px;transform-origin:0 0;top:363px;line-height:13px;font-size:11px;font-weight:400;color:#000;transform:scaleX(0.8610);">LASERTEC</div>
<div class="t" style="left:886.00px;transform-origin:0 0;top:363px;line-height:13px;font-size:11px;font-weight:400;color:#000;transform:scaleX(0.9282);">INGENIERIA</div>
<div class="t" style="left:948.00px;transform-origin:0 0;top:363px;line-height:13px;font-size:11px;font-weight:400;color:#000;transform:scaleX(0.9141);">S.A.</div>
</div></div>
<div style="left:963px;top:361px;width:32px;height:15px;background:#e8e8e8"></div>
<div style="left:963px;top:361px;width:32px;height:15px;overflow:hidden"><div style="left:-963px;top:-361px;width:1333px;height:708px">
<div class="t" style="left:966.00px;transform-origin:0 0;top:363px;line-height:13px;font-size:11px;font-weight:400;color:#000;transform:scaleX(0.8947);">ACERO</div>
</div></div>
<div style="left:996px;top:361px;width:52px;height:15px;background:#e8e8e8"></div>
<div style="left:996px;top:361px;width:52px;height:15px;overflow:hidden"><div style="left:-996px;top:-361px;width:1333px;height:708px">
<div class="t" style="left:999.00px;transform-origin:0 0;top:363px;line-height:13px;font-size:11px;font-weight:400;color:#000;transform:scaleX(0.9585);">u$s</div>
</div></div>
<div style="left:1049px;top:361px;width:59px;height:15px;background:#e8e8e8"></div>
<div style="left:1109px;top:361px;width:66px;height:15px;background:#e8e8e8"></div>
<div style="left:1136px;top:363px;width:11px;height:11px;box-sizing:border-box;background:#fff;border:1px solid #808080"></div>
<svg style="left:1135px;top:362px" width="13" height="13" shape-rendering="crispEdges"><g fill="#000"><rect x="3" y="5" width="1" height="3"/><rect x="4" y="6" width="1" height="3"/><rect x="5" y="7" width="1" height="3"/><rect x="6" y="6" width="1" height="3"/><rect x="7" y="5" width="1" height="3"/><rect x="8" y="4" width="1" height="3"/><rect x="9" y="3" width="1" height="3"/></g></svg>
<div style="left:1176px;top:361px;width:58px;height:15px;background:#e8e8e8"></div>
<div style="left:1176px;top:361px;width:58px;height:15px;overflow:hidden"><div style="left:-1176px;top:-361px;width:1333px;height:708px">
<div class="t" style="left:1179.00px;transform-origin:0 0;top:363px;line-height:13px;font-size:11px;font-weight:400;color:#000;">Argentina</div>
</div></div>
<div style="left:1235px;top:361px;width:73px;height:15px;background:#e8e8e8"></div>
<div style="left:1235px;top:361px;width:73px;height:15px;overflow:hidden"><div style="left:-1235px;top:-361px;width:1333px;height:708px">
<div class="t" style="left:1238.00px;transform-origin:0 0;top:363px;line-height:13px;font-size:11px;font-weight:400;color:#000;">Argentina</div>
</div></div>
<div style="left:630px;top:377px;width:79px;height:15px;background:#e8e8e8"></div>
<div style="left:630px;top:377px;width:79px;height:15px;overflow:hidden"><div style="left:-630px;top:-377px;width:1333px;height:708px">
<div class="t" style="left:633.00px;transform-origin:0 0;top:379px;line-height:13px;font-size:11px;font-weight:400;color:#000;transform:scaleX(0.8905);">CTE-CN</div>
</div></div>
<div style="left:710px;top:377px;width:79px;height:15px;background:#e8e8e8"></div>
<div style="left:790px;top:377px;width:39px;height:15px;background:#e8e8e8"></div>
<div style="left:790px;top:377px;width:39px;height:15px;overflow:hidden"><div style="left:-790px;top:-377px;width:1333px;height:708px">
<div class="t" style="right:506.00px;transform-origin:100% 0;top:379px;line-height:13px;font-size:11px;font-weight:400;color:#000;transform:scaleX(0.9808);">2</div>
</div></div>
<div style="left:830px;top:377px;width:132px;height:15px;background:#e8e8e8"></div>
<div style="left:830px;top:377px;width:132px;height:15px;overflow:hidden"><div style="left:-830px;top:-377px;width:1333px;height:708px">
<div class="t" style="left:833.00px;transform-origin:0 0;top:379px;line-height:13px;font-size:11px;font-weight:400;color:#000;transform:scaleX(0.8707);">ABREU</div>
<div class="t" style="left:869.00px;transform-origin:0 0;top:379px;line-height:13px;font-size:11px;font-weight:400;color:#000;transform:scaleX(0.9141);">S.A.</div>
</div></div>
<div style="left:963px;top:377px;width:32px;height:15px;background:#e8e8e8"></div>
<div style="left:963px;top:377px;width:32px;height:15px;overflow:hidden"><div style="left:-963px;top:-377px;width:1333px;height:708px">
<div class="t" style="left:966.00px;transform-origin:0 0;top:379px;line-height:13px;font-size:11px;font-weight:400;color:#000;transform:scaleX(0.8947);">ACERO</div>
</div></div>
<div style="left:996px;top:377px;width:52px;height:15px;background:#e8e8e8"></div>
<div style="left:996px;top:377px;width:52px;height:15px;overflow:hidden"><div style="left:-996px;top:-377px;width:1333px;height:708px">
<div class="t" style="left:999.00px;transform-origin:0 0;top:379px;line-height:13px;font-size:11px;font-weight:400;color:#000;transform:scaleX(0.9808);">$</div>
</div></div>
<div style="left:1049px;top:377px;width:59px;height:15px;background:#e8e8e8"></div>
<div style="left:1109px;top:377px;width:66px;height:15px;background:#e8e8e8"></div>
<div style="left:1136px;top:379px;width:11px;height:11px;box-sizing:border-box;background:#fff;border:1px solid #808080"></div>
<svg style="left:1135px;top:378px" width="13" height="13" shape-rendering="crispEdges"><g fill="#000"><rect x="3" y="5" width="1" height="3"/><rect x="4" y="6" width="1" height="3"/><rect x="5" y="7" width="1" height="3"/><rect x="6" y="6" width="1" height="3"/><rect x="7" y="5" width="1" height="3"/><rect x="8" y="4" width="1" height="3"/><rect x="9" y="3" width="1" height="3"/></g></svg>
<div style="left:1176px;top:377px;width:58px;height:15px;background:#e8e8e8"></div>
<div style="left:1176px;top:377px;width:58px;height:15px;overflow:hidden"><div style="left:-1176px;top:-377px;width:1333px;height:708px">
<div class="t" style="left:1179.00px;transform-origin:0 0;top:379px;line-height:13px;font-size:11px;font-weight:400;color:#000;">Argentina</div>
</div></div>
<div style="left:1235px;top:377px;width:73px;height:15px;background:#e8e8e8"></div>
<div style="left:1235px;top:377px;width:73px;height:15px;overflow:hidden"><div style="left:-1235px;top:-377px;width:1333px;height:708px">
<div class="t" style="left:1238.00px;transform-origin:0 0;top:379px;line-height:13px;font-size:11px;font-weight:400;color:#000;">Argentina</div>
</div></div>
<div style="left:630px;top:393px;width:79px;height:15px;background:#e8e8e8"></div>
<div style="left:710px;top:393px;width:79px;height:15px;background:#e8e8e8"></div>
<div style="left:790px;top:393px;width:39px;height:15px;background:#e8e8e8"></div>
<div style="left:830px;top:393px;width:132px;height:15px;background:#e8e8e8"></div>
<div style="left:830px;top:393px;width:132px;height:15px;overflow:hidden"><div style="left:-830px;top:-393px;width:1333px;height:708px">
<div class="t" style="left:833.00px;transform-origin:0 0;top:395px;line-height:13px;font-size:11px;font-weight:400;color:#000;transform:scaleX(0.8926);">DOMINGUEZ</div>
<div class="t" style="left:896.00px;transform-origin:0 0;top:395px;line-height:13px;font-size:11px;font-weight:400;color:#000;transform:scaleX(0.8640);">ROSENDE</div>
<div class="t" style="left:946.00px;transform-origin:0 0;top:395px;line-height:13px;font-size:11px;font-weight:400;color:#000;transform:scaleX(0.8702);">JOSE</div>
</div></div>
<div style="left:963px;top:393px;width:32px;height:15px;background:#e8e8e8"></div>
<div style="left:963px;top:393px;width:32px;height:15px;overflow:hidden"><div style="left:-963px;top:-393px;width:1333px;height:708px">
<div class="t" style="left:966.00px;transform-origin:0 0;top:395px;line-height:13px;font-size:11px;font-weight:400;color:#000;transform:scaleX(0.8947);">ACERO</div>
</div></div>
<div style="left:996px;top:393px;width:52px;height:15px;background:#e8e8e8"></div>
<div style="left:1049px;top:393px;width:59px;height:15px;background:#e8e8e8"></div>
<div style="left:1109px;top:393px;width:66px;height:15px;background:#e8e8e8"></div>
<div style="left:1136px;top:395px;width:11px;height:11px;box-sizing:border-box;background:#fff;border:1px solid #808080"></div>
<div style="left:1176px;top:393px;width:58px;height:15px;background:#e8e8e8"></div>
<div style="left:1235px;top:393px;width:73px;height:15px;background:#e8e8e8"></div>
<div style="left:1235px;top:393px;width:73px;height:15px;overflow:hidden"><div style="left:-1235px;top:-393px;width:1333px;height:708px">
<div class="t" style="left:1238.00px;transform-origin:0 0;top:395px;line-height:13px;font-size:11px;font-weight:400;color:#000;">Argentina</div>
</div></div>
<div style="left:630px;top:409px;width:79px;height:15px;background:#e8e8e8"></div>
<div style="left:630px;top:409px;width:79px;height:15px;overflow:hidden"><div style="left:-630px;top:-409px;width:1333px;height:708px">
<div class="t" style="left:633.00px;transform-origin:0 0;top:411px;line-height:13px;font-size:11px;font-weight:400;color:#000;transform:scaleX(0.8773);">AJUSTE</div>
</div></div>
<div style="left:710px;top:409px;width:79px;height:15px;background:#e8e8e8"></div>
<div style="left:790px;top:409px;width:39px;height:15px;background:#e8e8e8"></div>
<div style="left:790px;top:409px;width:39px;height:15px;overflow:hidden"><div style="left:-790px;top:-409px;width:1333px;height:708px">
<div class="t" style="right:506.00px;transform-origin:100% 0;top:411px;line-height:13px;font-size:11px;font-weight:400;color:#000;transform:scaleX(0.9808);">1</div>
</div></div>
<div style="left:830px;top:409px;width:132px;height:15px;background:#e8e8e8"></div>
<div style="left:830px;top:409px;width:132px;height:15px;overflow:hidden"><div style="left:-830px;top:-409px;width:1333px;height:708px">
<div class="t" style="left:833.00px;transform-origin:0 0;top:411px;line-height:13px;font-size:11px;font-weight:400;color:#000;transform:scaleX(0.9384);">POLIZZI</div>
<div class="t" style="left:875.00px;transform-origin:0 0;top:411px;line-height:13px;font-size:11px;font-weight:400;color:#000;transform:scaleX(0.8963);">VANESA</div>
<div class="t" style="left:918.00px;transform-origin:0 0;top:411px;line-height:13px;font-size:11px;font-weight:400;color:#000;transform:scaleX(0.9254);">VALERIA</div>
</div></div>
<div style="left:963px;top:409px;width:32px;height:15px;background:#e8e8e8"></div>
<div style="left:996px;top:409px;width:52px;height:15px;background:#e8e8e8"></div>
<div style="left:996px;top:409px;width:52px;height:15px;overflow:hidden"><div style="left:-996px;top:-409px;width:1333px;height:708px">
<div class="t" style="left:999.00px;transform-origin:0 0;top:411px;line-height:13px;font-size:11px;font-weight:400;color:#000;transform:scaleX(0.9143);">Min.</div>
</div></div>
<div style="left:1049px;top:409px;width:59px;height:15px;background:#e8e8e8"></div>
<div style="left:1109px;top:409px;width:66px;height:15px;background:#e8e8e8"></div>
<div style="left:1136px;top:411px;width:11px;height:11px;box-sizing:border-box;background:#fff;border:1px solid #808080"></div>
<div style="left:1176px;top:409px;width:58px;height:15px;background:#e8e8e8"></div>
<div style="left:1176px;top:409px;width:58px;height:15px;overflow:hidden"><div style="left:-1176px;top:-409px;width:1333px;height:708px">
<div class="t" style="left:1179.00px;transform-origin:0 0;top:411px;line-height:13px;font-size:11px;font-weight:400;color:#000;">Argentina</div>
</div></div>
<div style="left:1235px;top:409px;width:73px;height:15px;background:#e8e8e8"></div>
<div style="left:1235px;top:409px;width:73px;height:15px;overflow:hidden"><div style="left:-1235px;top:-409px;width:1333px;height:708px">
<div class="t" style="left:1238.00px;transform-origin:0 0;top:411px;line-height:13px;font-size:11px;font-weight:400;color:#000;">Argentina</div>
</div></div>
<div style="left:630px;top:425px;width:79px;height:15px;background:#e8e8e8"></div>
<div style="left:630px;top:425px;width:79px;height:15px;overflow:hidden"><div style="left:-630px;top:-425px;width:1333px;height:708px">
<div class="t" style="left:633.00px;transform-origin:0 0;top:427px;line-height:13px;font-size:11px;font-weight:400;color:#000;transform:scaleX(0.8905);">CTE-CN</div>
</div></div>
<div style="left:710px;top:425px;width:79px;height:15px;background:#e8e8e8"></div>
<div style="left:790px;top:425px;width:39px;height:15px;background:#e8e8e8"></div>
<div style="left:790px;top:425px;width:39px;height:15px;overflow:hidden"><div style="left:-790px;top:-425px;width:1333px;height:708px">
<div class="t" style="right:506.00px;transform-origin:100% 0;top:427px;line-height:13px;font-size:11px;font-weight:400;color:#000;transform:scaleX(0.9808);">1</div>
</div></div>
<div style="left:830px;top:425px;width:132px;height:15px;background:#e8e8e8"></div>
<div style="left:830px;top:425px;width:132px;height:15px;overflow:hidden"><div style="left:-830px;top:-425px;width:1333px;height:708px">
<div class="t" style="left:833.00px;transform-origin:0 0;top:427px;line-height:13px;font-size:11px;font-weight:400;color:#000;transform:scaleX(0.8855);">TECTOOL</div>
<div class="t" style="left:882.00px;transform-origin:0 0;top:427px;line-height:13px;font-size:11px;font-weight:400;color:#000;transform:scaleX(0.9141);">S.A.</div>
</div></div>
<div style="left:963px;top:425px;width:32px;height:15px;background:#e8e8e8"></div>
<div style="left:963px;top:425px;width:32px;height:15px;overflow:hidden"><div style="left:-963px;top:-425px;width:1333px;height:708px">
<div class="t" style="left:966.00px;transform-origin:0 0;top:427px;line-height:13px;font-size:11px;font-weight:400;color:#000;transform:scaleX(0.8843);">BLANDO</div>
</div></div>
<div style="left:996px;top:425px;width:52px;height:15px;background:#e8e8e8"></div>
<div style="left:996px;top:425px;width:52px;height:15px;overflow:hidden"><div style="left:-996px;top:-425px;width:1333px;height:708px">
<div class="t" style="left:999.00px;transform-origin:0 0;top:427px;line-height:13px;font-size:11px;font-weight:400;color:#000;transform:scaleX(0.9808);">$</div>
</div></div>
<div style="left:1049px;top:425px;width:59px;height:15px;background:#e8e8e8"></div>
<div style="left:1109px;top:425px;width:66px;height:15px;background:#e8e8e8"></div>
<div style="left:1136px;top:427px;width:11px;height:11px;box-sizing:border-box;background:#fff;border:1px solid #808080"></div>
<svg style="left:1135px;top:426px" width="13" height="13" shape-rendering="crispEdges"><g fill="#000"><rect x="3" y="5" width="1" height="3"/><rect x="4" y="6" width="1" height="3"/><rect x="5" y="7" width="1" height="3"/><rect x="6" y="6" width="1" height="3"/><rect x="7" y="5" width="1" height="3"/><rect x="8" y="4" width="1" height="3"/><rect x="9" y="3" width="1" height="3"/></g></svg>
<div style="left:1176px;top:425px;width:58px;height:15px;background:#e8e8e8"></div>
<div style="left:1176px;top:425px;width:58px;height:15px;overflow:hidden"><div style="left:-1176px;top:-425px;width:1333px;height:708px">
<div class="t" style="left:1179.00px;transform-origin:0 0;top:427px;line-height:13px;font-size:11px;font-weight:400;color:#000;">Argentina</div>
</div></div>
<div style="left:1235px;top:425px;width:73px;height:15px;background:#e8e8e8"></div>
<div style="left:1235px;top:425px;width:73px;height:15px;overflow:hidden"><div style="left:-1235px;top:-425px;width:1333px;height:708px">
<div class="t" style="left:1238.00px;transform-origin:0 0;top:427px;line-height:13px;font-size:11px;font-weight:400;color:#000;">Argentina</div>
</div></div>
<div style="left:630px;top:441px;width:79px;height:15px;background:#e8e8e8"></div>
<div style="left:630px;top:441px;width:79px;height:15px;overflow:hidden"><div style="left:-630px;top:-441px;width:1333px;height:708px">
<div class="t" style="left:633.00px;transform-origin:0 0;top:443px;line-height:13px;font-size:11px;font-weight:400;color:#000;transform:scaleX(0.8727);">CTEPDO</div>
</div></div>
<div style="left:710px;top:441px;width:79px;height:15px;background:#e8e8e8"></div>
<div style="left:790px;top:441px;width:39px;height:15px;background:#e8e8e8"></div>
<div style="left:790px;top:441px;width:39px;height:15px;overflow:hidden"><div style="left:-790px;top:-441px;width:1333px;height:708px">
<div class="t" style="right:506.00px;transform-origin:100% 0;top:443px;line-height:13px;font-size:11px;font-weight:400;color:#000;transform:scaleX(0.9808);">2</div>
</div></div>
<div style="left:830px;top:441px;width:132px;height:15px;background:#e8e8e8"></div>
<div style="left:830px;top:441px;width:132px;height:15px;overflow:hidden"><div style="left:-830px;top:-441px;width:1333px;height:708px">
<div class="t" style="left:833.00px;transform-origin:0 0;top:443px;line-height:13px;font-size:11px;font-weight:400;color:#000;transform:scaleX(0.9285);">R&amp;V</div>
<div class="t" style="left:857.00px;transform-origin:0 0;top:443px;line-height:13px;font-size:11px;font-weight:400;color:#000;transform:scaleX(0.8322);">STEEL</div>
<div class="t" style="left:889.00px;transform-origin:0 0;top:443px;line-height:13px;font-size:11px;font-weight:400;color:#000;transform:scaleX(0.9091);">´S</div>
<div class="t" style="left:902.00px;transform-origin:0 0;top:443px;line-height:13px;font-size:11px;font-weight:400;color:#000;transform:scaleX(0.8833);">S.R.L.</div>
</div></div>
<div style="left:963px;top:441px;width:32px;height:15px;background:#e8e8e8"></div>
<div style="left:963px;top:441px;width:32px;height:15px;overflow:hidden"><div style="left:-963px;top:-441px;width:1333px;height:708px">
<div class="t" style="left:966.00px;transform-origin:0 0;top:443px;line-height:13px;font-size:11px;font-weight:400;color:#000;transform:scaleX(0.8843);">BLANDO</div>
</div></div>
<div style="left:996px;top:441px;width:52px;height:15px;background:#e8e8e8"></div>
<div style="left:996px;top:441px;width:52px;height:15px;overflow:hidden"><div style="left:-996px;top:-441px;width:1333px;height:708px">
<div class="t" style="left:999.00px;transform-origin:0 0;top:443px;line-height:13px;font-size:11px;font-weight:400;color:#000;transform:scaleX(0.9808);">$</div>
</div></div>
<div style="left:1049px;top:441px;width:59px;height:15px;background:#e8e8e8"></div>
<div style="left:1109px;top:441px;width:66px;height:15px;background:#e8e8e8"></div>
<div style="left:1136px;top:443px;width:11px;height:11px;box-sizing:border-box;background:#fff;border:1px solid #808080"></div>
<div style="left:1176px;top:441px;width:58px;height:15px;background:#e8e8e8"></div>
<div style="left:1176px;top:441px;width:58px;height:15px;overflow:hidden"><div style="left:-1176px;top:-441px;width:1333px;height:708px">
<div class="t" style="left:1179.00px;transform-origin:0 0;top:443px;line-height:13px;font-size:11px;font-weight:400;color:#000;">Argentina</div>
</div></div>
<div style="left:1235px;top:441px;width:73px;height:15px;background:#e8e8e8"></div>
<div style="left:1235px;top:441px;width:73px;height:15px;overflow:hidden"><div style="left:-1235px;top:-441px;width:1333px;height:708px">
<div class="t" style="left:1238.00px;transform-origin:0 0;top:443px;line-height:13px;font-size:11px;font-weight:400;color:#000;">Argentina</div>
</div></div>
<div style="left:630px;top:457px;width:79px;height:15px;background:#e8e8e8"></div>
<div style="left:710px;top:457px;width:79px;height:15px;background:#e8e8e8"></div>
<div style="left:790px;top:457px;width:39px;height:15px;background:#e8e8e8"></div>
<div style="left:830px;top:457px;width:132px;height:15px;background:#e8e8e8"></div>
<div style="left:963px;top:457px;width:32px;height:15px;background:#e8e8e8"></div>
<div style="left:963px;top:457px;width:32px;height:15px;overflow:hidden"><div style="left:-963px;top:-457px;width:1333px;height:708px">
<div class="t" style="left:966.00px;transform-origin:0 0;top:459px;line-height:13px;font-size:11px;font-weight:400;color:#000;transform:scaleX(0.8843);">BLANDO</div>
</div></div>
<div style="left:996px;top:457px;width:52px;height:15px;background:#e8e8e8"></div>
<div style="left:1049px;top:457px;width:59px;height:15px;background:#e8e8e8"></div>
<div style="left:1109px;top:457px;width:66px;height:15px;background:#e8e8e8"></div>
<div style="left:1136px;top:459px;width:11px;height:11px;box-sizing:border-box;background:#fff;border:1px solid #808080"></div>
<div style="left:1176px;top:457px;width:58px;height:15px;background:#e8e8e8"></div>
<div style="left:1176px;top:457px;width:58px;height:15px;overflow:hidden"><div style="left:-1176px;top:-457px;width:1333px;height:708px">
<div class="t" style="left:1179.00px;transform-origin:0 0;top:459px;line-height:13px;font-size:11px;font-weight:400;color:#000;transform:scaleX(0.9588);">Taiwan</div>
</div></div>
<div style="left:1235px;top:457px;width:73px;height:15px;background:#e8e8e8"></div>
<div style="left:630px;top:473px;width:79px;height:15px;background:#e8e8e8"></div>
<div style="left:630px;top:473px;width:79px;height:15px;overflow:hidden"><div style="left:-630px;top:-473px;width:1333px;height:708px">
<div class="t" style="left:633.00px;transform-origin:0 0;top:475px;line-height:13px;font-size:11px;font-weight:400;color:#000;transform:scaleX(0.8831);">CORTE</div>
</div></div>
<div style="left:710px;top:473px;width:79px;height:15px;background:#e8e8e8"></div>
<div style="left:790px;top:473px;width:39px;height:15px;background:#e8e8e8"></div>
<div style="left:790px;top:473px;width:39px;height:15px;overflow:hidden"><div style="left:-790px;top:-473px;width:1333px;height:708px">
<div class="t" style="right:506.00px;transform-origin:100% 0;top:475px;line-height:13px;font-size:11px;font-weight:400;color:#000;transform:scaleX(0.9808);">1</div>
</div></div>
<div style="left:830px;top:473px;width:132px;height:15px;background:#e8e8e8"></div>
<div style="left:830px;top:473px;width:132px;height:15px;overflow:hidden"><div style="left:-830px;top:-473px;width:1333px;height:708px">
<div class="t" style="left:833.00px;transform-origin:0 0;top:475px;line-height:13px;font-size:11px;font-weight:400;color:#000;transform:scaleX(0.8890);">PAGLIONE</div>
<div class="t" style="left:886.00px;transform-origin:0 0;top:475px;line-height:13px;font-size:11px;font-weight:400;color:#000;transform:scaleX(0.9519);">DAVID</div>
<div class="t" style="left:921.00px;transform-origin:0 0;top:475px;line-height:13px;font-size:11px;font-weight:400;color:#000;transform:scaleX(0.8699);">GERMAN</div>
</div></div>
<div style="left:963px;top:473px;width:32px;height:15px;background:#e8e8e8"></div>
<div style="left:963px;top:473px;width:32px;height:15px;overflow:hidden"><div style="left:-963px;top:-473px;width:1333px;height:708px">
<div class="t" style="left:966.00px;transform-origin:0 0;top:475px;line-height:13px;font-size:11px;font-weight:400;color:#000;transform:scaleX(0.8947);">ACERO</div>
</div></div>
<div style="left:996px;top:473px;width:52px;height:15px;background:#e8e8e8"></div>
<div style="left:996px;top:473px;width:52px;height:15px;overflow:hidden"><div style="left:-996px;top:-473px;width:1333px;height:708px">
<div class="t" style="left:999.00px;transform-origin:0 0;top:475px;line-height:13px;font-size:11px;font-weight:400;color:#000;transform:scaleX(0.9143);">Min.</div>
</div></div>
<div style="left:1049px;top:473px;width:59px;height:15px;background:#e8e8e8"></div>
<div style="left:1049px;top:473px;width:59px;height:15px;overflow:hidden"><div style="left:-1049px;top:-473px;width:1333px;height:708px">
<div class="t" style="right:227.00px;transform-origin:100% 0;top:475px;line-height:13px;font-size:11px;font-weight:400;color:#000;transform:scaleX(0.9808);">9</div>
</div></div>
<div style="left:1109px;top:473px;width:66px;height:15px;background:#e8e8e8"></div>
<div style="left:1136px;top:475px;width:11px;height:11px;box-sizing:border-box;background:#fff;border:1px solid #808080"></div>
<svg style="left:1135px;top:474px" width="13" height="13" shape-rendering="crispEdges"><g fill="#000"><rect x="3" y="5" width="1" height="3"/><rect x="4" y="6" width="1" height="3"/><rect x="5" y="7" width="1" height="3"/><rect x="6" y="6" width="1" height="3"/><rect x="7" y="5" width="1" height="3"/><rect x="8" y="4" width="1" height="3"/><rect x="9" y="3" width="1" height="3"/></g></svg>
<div style="left:1176px;top:473px;width:58px;height:15px;background:#e8e8e8"></div>
<div style="left:1176px;top:473px;width:58px;height:15px;overflow:hidden"><div style="left:-1176px;top:-473px;width:1333px;height:708px">
<div class="t" style="left:1179.00px;transform-origin:0 0;top:475px;line-height:13px;font-size:11px;font-weight:400;color:#000;">Argentina</div>
</div></div>
<div style="left:1235px;top:473px;width:73px;height:15px;background:#e8e8e8"></div>
<div style="left:1235px;top:473px;width:73px;height:15px;overflow:hidden"><div style="left:-1235px;top:-473px;width:1333px;height:708px">
<div class="t" style="left:1238.00px;transform-origin:0 0;top:475px;line-height:13px;font-size:11px;font-weight:400;color:#000;">Argentina</div>
</div></div>
<div style="left:630px;top:489px;width:79px;height:15px;background:#e8e8e8"></div>
<div style="left:630px;top:489px;width:79px;height:15px;overflow:hidden"><div style="left:-630px;top:-489px;width:1333px;height:708px">
<div class="t" style="left:633.00px;transform-origin:0 0;top:491px;line-height:13px;font-size:11px;font-weight:400;color:#000;transform:scaleX(0.8726);">FRESA</div>
</div></div>
<div style="left:710px;top:489px;width:79px;height:15px;background:#e8e8e8"></div>
<div style="left:790px;top:489px;width:39px;height:15px;background:#e8e8e8"></div>
<div style="left:790px;top:489px;width:39px;height:15px;overflow:hidden"><div style="left:-790px;top:-489px;width:1333px;height:708px">
<div class="t" style="right:506.00px;transform-origin:100% 0;top:491px;line-height:13px;font-size:11px;font-weight:400;color:#000;transform:scaleX(0.9808);">2</div>
</div></div>
<div style="left:830px;top:489px;width:132px;height:15px;background:#e8e8e8"></div>
<div style="left:830px;top:489px;width:132px;height:15px;overflow:hidden"><div style="left:-830px;top:-489px;width:1333px;height:708px">
<div class="t" style="left:833.00px;transform-origin:0 0;top:491px;line-height:13px;font-size:11px;font-weight:400;color:#000;transform:scaleX(0.8890);">PAGLIONE</div>
<div class="t" style="left:886.00px;transform-origin:0 0;top:491px;line-height:13px;font-size:11px;font-weight:400;color:#000;transform:scaleX(0.9111);">NICOLAS</div>
</div></div>
<div style="left:963px;top:489px;width:32px;height:15px;background:#e8e8e8"></div>
<div style="left:963px;top:489px;width:32px;height:15px;overflow:hidden"><div style="left:-963px;top:-489px;width:1333px;height:708px">
<div class="t" style="left:966.00px;transform-origin:0 0;top:491px;line-height:13px;font-size:11px;font-weight:400;color:#000;transform:scaleX(0.8947);">ACERO</div>
</div></div>
<div style="left:996px;top:489px;width:52px;height:15px;background:#e8e8e8"></div>
<div style="left:996px;top:489px;width:52px;height:15px;overflow:hidden"><div style="left:-996px;top:-489px;width:1333px;height:708px">
<div class="t" style="left:999.00px;transform-origin:0 0;top:491px;line-height:13px;font-size:11px;font-weight:400;color:#000;transform:scaleX(0.9143);">Min.</div>
</div></div>
<div style="left:1049px;top:489px;width:59px;height:15px;background:#e8e8e8"></div>
<div style="left:1049px;top:489px;width:59px;height:15px;overflow:hidden"><div style="left:-1049px;top:-489px;width:1333px;height:708px">
<div class="t" style="right:227.00px;transform-origin:100% 0;top:491px;line-height:13px;font-size:11px;font-weight:400;color:#000;transform:scaleX(0.9808);">60</div>
</div></div>
<div style="left:1109px;top:489px;width:66px;height:15px;background:#e8e8e8"></div>
<div style="left:1136px;top:491px;width:11px;height:11px;box-sizing:border-box;background:#fff;border:1px solid #808080"></div>
<svg style="left:1135px;top:490px" width="13" height="13" shape-rendering="crispEdges"><g fill="#000"><rect x="3" y="5" width="1" height="3"/><rect x="4" y="6" width="1" height="3"/><rect x="5" y="7" width="1" height="3"/><rect x="6" y="6" width="1" height="3"/><rect x="7" y="5" width="1" height="3"/><rect x="8" y="4" width="1" height="3"/><rect x="9" y="3" width="1" height="3"/></g></svg>
<div style="left:1176px;top:489px;width:58px;height:15px;background:#e8e8e8"></div>
<div style="left:1176px;top:489px;width:58px;height:15px;overflow:hidden"><div style="left:-1176px;top:-489px;width:1333px;height:708px">
<div class="t" style="left:1179.00px;transform-origin:0 0;top:491px;line-height:13px;font-size:11px;font-weight:400;color:#000;">Argentina</div>
</div></div>
<div style="left:1235px;top:489px;width:73px;height:15px;background:#e8e8e8"></div>
<div style="left:1235px;top:489px;width:73px;height:15px;overflow:hidden"><div style="left:-1235px;top:-489px;width:1333px;height:708px">
<div class="t" style="left:1238.00px;transform-origin:0 0;top:491px;line-height:13px;font-size:11px;font-weight:400;color:#000;">Argentina</div>
</div></div>
<div style="left:630px;top:505px;width:79px;height:15px;background:#e8e8e8"></div>
<div style="left:630px;top:505px;width:79px;height:15px;overflow:hidden"><div style="left:-630px;top:-505px;width:1333px;height:708px">
<div class="t" style="left:633.00px;transform-origin:0 0;top:507px;line-height:13px;font-size:11px;font-weight:400;color:#000;transform:scaleX(0.8773);">AJUSTE</div>
</div></div>
<div style="left:710px;top:505px;width:79px;height:15px;background:#e8e8e8"></div>
<div style="left:790px;top:505px;width:39px;height:15px;background:#e8e8e8"></div>
<div style="left:790px;top:505px;width:39px;height:15px;overflow:hidden"><div style="left:-790px;top:-505px;width:1333px;height:708px">
<div class="t" style="right:506.00px;transform-origin:100% 0;top:507px;line-height:13px;font-size:11px;font-weight:400;color:#000;transform:scaleX(0.9808);">3</div>
</div></div>
<div style="left:830px;top:505px;width:132px;height:15px;background:#e8e8e8"></div>
<div style="left:830px;top:505px;width:132px;height:15px;overflow:hidden"><div style="left:-830px;top:-505px;width:1333px;height:708px">
<div class="t" style="left:833.00px;transform-origin:0 0;top:507px;line-height:13px;font-size:11px;font-weight:400;color:#000;transform:scaleX(0.8890);">PAGLIONE</div>
<div class="t" style="left:886.00px;transform-origin:0 0;top:507px;line-height:13px;font-size:11px;font-weight:400;color:#000;transform:scaleX(0.9111);">NICOLAS</div>
</div></div>
<div style="left:963px;top:505px;width:32px;height:15px;background:#e8e8e8"></div>
<div style="left:963px;top:505px;width:32px;height:15px;overflow:hidden"><div style="left:-963px;top:-505px;width:1333px;height:708px">
<div class="t" style="left:966.00px;transform-origin:0 0;top:507px;line-height:13px;font-size:11px;font-weight:400;color:#000;transform:scaleX(0.8947);">ACERO</div>
</div></div>
<div style="left:996px;top:505px;width:52px;height:15px;background:#e8e8e8"></div>
<div style="left:996px;top:505px;width:52px;height:15px;overflow:hidden"><div style="left:-996px;top:-505px;width:1333px;height:708px">
<div class="t" style="left:999.00px;transform-origin:0 0;top:507px;line-height:13px;font-size:11px;font-weight:400;color:#000;transform:scaleX(0.9143);">Min.</div>
</div></div>
<div style="left:1049px;top:505px;width:59px;height:15px;background:#e8e8e8"></div>
<div style="left:1049px;top:505px;width:59px;height:15px;overflow:hidden"><div style="left:-1049px;top:-505px;width:1333px;height:708px">
<div class="t" style="right:227.00px;transform-origin:100% 0;top:507px;line-height:13px;font-size:11px;font-weight:400;color:#000;transform:scaleX(0.9808);">25</div>
</div></div>
<div style="left:1109px;top:505px;width:66px;height:15px;background:#e8e8e8"></div>
<div style="left:1136px;top:507px;width:11px;height:11px;box-sizing:border-box;background:#fff;border:1px solid #808080"></div>
<svg style="left:1135px;top:506px" width="13" height="13" shape-rendering="crispEdges"><g fill="#000"><rect x="3" y="5" width="1" height="3"/><rect x="4" y="6" width="1" height="3"/><rect x="5" y="7" width="1" height="3"/><rect x="6" y="6" width="1" height="3"/><rect x="7" y="5" width="1" height="3"/><rect x="8" y="4" width="1" height="3"/><rect x="9" y="3" width="1" height="3"/></g></svg>
<div style="left:1176px;top:505px;width:58px;height:15px;background:#e8e8e8"></div>
<div style="left:1176px;top:505px;width:58px;height:15px;overflow:hidden"><div style="left:-1176px;top:-505px;width:1333px;height:708px">
<div class="t" style="left:1179.00px;transform-origin:0 0;top:507px;line-height:13px;font-size:11px;font-weight:400;color:#000;">Argentina</div>
</div></div>
<div style="left:1235px;top:505px;width:73px;height:15px;background:#e8e8e8"></div>
<div style="left:1235px;top:505px;width:73px;height:15px;overflow:hidden"><div style="left:-1235px;top:-505px;width:1333px;height:708px">
<div class="t" style="left:1238.00px;transform-origin:0 0;top:507px;line-height:13px;font-size:11px;font-weight:400;color:#000;">Argentina</div>
</div></div>
<div style="left:630px;top:521px;width:79px;height:15px;background:#e8e8e8"></div>
<div style="left:710px;top:521px;width:79px;height:15px;background:#e8e8e8"></div>
<div style="left:790px;top:521px;width:39px;height:15px;background:#e8e8e8"></div>
<div style="left:830px;top:521px;width:132px;height:15px;background:#e8e8e8"></div>
<div style="left:830px;top:521px;width:132px;height:15px;overflow:hidden"><div style="left:-830px;top:-521px;width:1333px;height:708px">
<div class="t" style="left:833.00px;transform-origin:0 0;top:523px;line-height:13px;font-size:11px;font-weight:400;color:#000;transform:scaleX(0.8634);">FESCAP</div>
<div class="t" style="left:874.00px;transform-origin:0 0;top:523px;line-height:13px;font-size:11px;font-weight:400;color:#000;transform:scaleX(0.9141);">S.A.</div>
</div></div>
<div style="left:963px;top:521px;width:32px;height:15px;background:#e8e8e8"></div>
<div style="left:963px;top:521px;width:32px;height:15px;overflow:hidden"><div style="left:-963px;top:-521px;width:1333px;height:708px">
<div class="t" style="left:966.00px;transform-origin:0 0;top:523px;line-height:13px;font-size:11px;font-weight:400;color:#000;transform:scaleX(0.8947);">ACERO</div>
</div></div>
<div style="left:996px;top:521px;width:52px;height:15px;background:#e8e8e8"></div>
<div style="left:1049px;top:521px;width:59px;height:15px;background:#e8e8e8"></div>
<div style="left:1109px;top:521px;width:66px;height:15px;background:#e8e8e8"></div>
<div style="left:1136px;top:523px;width:11px;height:11px;box-sizing:border-box;background:#fff;border:1px solid #808080"></div>
<div style="left:1176px;top:521px;width:58px;height:15px;background:#e8e8e8"></div>
<div style="left:1235px;top:521px;width:73px;height:15px;background:#e8e8e8"></div>
<div style="left:1235px;top:521px;width:73px;height:15px;overflow:hidden"><div style="left:-1235px;top:-521px;width:1333px;height:708px">
<div class="t" style="left:1238.00px;transform-origin:0 0;top:523px;line-height:13px;font-size:11px;font-weight:400;color:#000;">Argentina</div>
</div></div>
<div style="left:630px;top:537px;width:79px;height:15px;background:#e8e8e8"></div>
<div style="left:630px;top:537px;width:79px;height:15px;overflow:hidden"><div style="left:-630px;top:-537px;width:1333px;height:708px">
<div class="t" style="left:633.00px;transform-origin:0 0;top:539px;line-height:13px;font-size:11px;font-weight:400;color:#000;transform:scaleX(0.8905);">CTE-CN</div>
</div></div>
<div style="left:710px;top:537px;width:79px;height:15px;background:#e8e8e8"></div>
<div style="left:790px;top:537px;width:39px;height:15px;background:#e8e8e8"></div>
<div style="left:790px;top:537px;width:39px;height:15px;overflow:hidden"><div style="left:-790px;top:-537px;width:1333px;height:708px">
<div class="t" style="right:506.00px;transform-origin:100% 0;top:539px;line-height:13px;font-size:11px;font-weight:400;color:#000;transform:scaleX(0.9808);">1</div>
</div></div>
<div style="left:830px;top:537px;width:132px;height:15px;background:#e8e8e8"></div>
<div style="left:830px;top:537px;width:132px;height:15px;overflow:hidden"><div style="left:-830px;top:-537px;width:1333px;height:708px">
<div class="t" style="left:833.00px;transform-origin:0 0;top:539px;line-height:13px;font-size:11px;font-weight:400;color:#000;transform:scaleX(0.8707);">ABREU</div>
<div class="t" style="left:869.00px;transform-origin:0 0;top:539px;line-height:13px;font-size:11px;font-weight:400;color:#000;transform:scaleX(0.9141);">S.A.</div>
</div></div>
<div style="left:963px;top:537px;width:32px;height:15px;background:#e8e8e8"></div>
<div style="left:963px;top:537px;width:32px;height:15px;overflow:hidden"><div style="left:-963px;top:-537px;width:1333px;height:708px">
<div class="t" style="left:966.00px;transform-origin:0 0;top:539px;line-height:13px;font-size:11px;font-weight:400;color:#000;transform:scaleX(0.8843);">BLANDO</div>
</div></div>
<div style="left:996px;top:537px;width:52px;height:15px;background:#e8e8e8"></div>
<div style="left:996px;top:537px;width:52px;height:15px;overflow:hidden"><div style="left:-996px;top:-537px;width:1333px;height:708px">
<div class="t" style="left:999.00px;transform-origin:0 0;top:539px;line-height:13px;font-size:11px;font-weight:400;color:#000;transform:scaleX(0.9808);">$</div>
</div></div>
<div style="left:1049px;top:537px;width:59px;height:15px;background:#e8e8e8"></div>
<div style="left:1109px;top:537px;width:66px;height:15px;background:#e8e8e8"></div>
<div style="left:1136px;top:539px;width:11px;height:11px;box-sizing:border-box;background:#fff;border:1px solid #808080"></div>
<svg style="left:1135px;top:538px" width="13" height="13" shape-rendering="crispEdges"><g fill="#000"><rect x="3" y="5" width="1" height="3"/><rect x="4" y="6" width="1" height="3"/><rect x="5" y="7" width="1" height="3"/><rect x="6" y="6" width="1" height="3"/><rect x="7" y="5" width="1" height="3"/><rect x="8" y="4" width="1" height="3"/><rect x="9" y="3" width="1" height="3"/></g></svg>
<div style="left:1176px;top:537px;width:58px;height:15px;background:#e8e8e8"></div>
<div style="left:1176px;top:537px;width:58px;height:15px;overflow:hidden"><div style="left:-1176px;top:-537px;width:1333px;height:708px">
<div class="t" style="left:1179.00px;transform-origin:0 0;top:539px;line-height:13px;font-size:11px;font-weight:400;color:#000;">Argentina</div>
</div></div>
<div style="left:1235px;top:537px;width:73px;height:15px;background:#e8e8e8"></div>
<div style="left:1235px;top:537px;width:73px;height:15px;overflow:hidden"><div style="left:-1235px;top:-537px;width:1333px;height:708px">
<div class="t" style="left:1238.00px;transform-origin:0 0;top:539px;line-height:13px;font-size:11px;font-weight:400;color:#000;">Argentina</div>
</div></div>
<div style="left:630px;top:553px;width:79px;height:15px;background:#e8e8e8"></div>
<div style="left:630px;top:553px;width:79px;height:15px;overflow:hidden"><div style="left:-630px;top:-553px;width:1333px;height:708px">
<div class="t" style="left:633.00px;transform-origin:0 0;top:555px;line-height:13px;font-size:11px;font-weight:400;color:#000;transform:scaleX(0.9173);">PINTAR</div>
</div></div>
<div style="left:710px;top:553px;width:79px;height:15px;background:#e8e8e8"></div>
<div style="left:790px;top:553px;width:39px;height:15px;background:#e8e8e8"></div>
<div style="left:790px;top:553px;width:39px;height:15px;overflow:hidden"><div style="left:-790px;top:-553px;width:1333px;height:708px">
<div class="t" style="right:506.00px;transform-origin:100% 0;top:555px;line-height:13px;font-size:11px;font-weight:400;color:#000;transform:scaleX(0.9808);">2</div>
</div></div>
<div style="left:830px;top:553px;width:132px;height:15px;background:#e8e8e8"></div>
<div style="left:830px;top:553px;width:132px;height:15px;overflow:hidden"><div style="left:-830px;top:-553px;width:1333px;height:708px">
<div class="t" style="left:833.00px;transform-origin:0 0;top:555px;line-height:13px;font-size:11px;font-weight:400;color:#000;transform:scaleX(0.9391);">IVARS</div>
<div class="t" style="left:867.00px;transform-origin:0 0;top:555px;line-height:13px;font-size:11px;font-weight:400;color:#000;transform:scaleX(0.9351);">FRANCHINI</div>
<div class="t" style="left:926.00px;transform-origin:0 0;top:555px;line-height:13px;font-size:11px;font-weight:400;color:#000;transform:scaleX(0.8908);">EDUARDO</div>
</div></div>
<div style="left:963px;top:553px;width:32px;height:15px;background:#e8e8e8"></div>
<div style="left:963px;top:553px;width:32px;height:15px;overflow:hidden"><div style="left:-963px;top:-553px;width:1333px;height:708px">
<div class="t" style="left:966.00px;transform-origin:0 0;top:555px;line-height:13px;font-size:11px;font-weight:400;color:#000;transform:scaleX(0.8843);">BLANDO</div>
</div></div>
<div style="left:996px;top:553px;width:52px;height:15px;background:#e8e8e8"></div>
<div style="left:996px;top:553px;width:52px;height:15px;overflow:hidden"><div style="left:-996px;top:-553px;width:1333px;height:708px">
<div class="t" style="left:999.00px;transform-origin:0 0;top:555px;line-height:13px;font-size:11px;font-weight:400;color:#000;transform:scaleX(0.9808);">$</div>
</div></div>
<div style="left:1049px;top:553px;width:59px;height:15px;background:#e8e8e8"></div>
<div style="left:1109px;top:553px;width:66px;height:15px;background:#e8e8e8"></div>
<div style="left:1136px;top:555px;width:11px;height:11px;box-sizing:border-box;background:#fff;border:1px solid #808080"></div>
<svg style="left:1135px;top:554px" width="13" height="13" shape-rendering="crispEdges"><g fill="#000"><rect x="3" y="5" width="1" height="3"/><rect x="4" y="6" width="1" height="3"/><rect x="5" y="7" width="1" height="3"/><rect x="6" y="6" width="1" height="3"/><rect x="7" y="5" width="1" height="3"/><rect x="8" y="4" width="1" height="3"/><rect x="9" y="3" width="1" height="3"/></g></svg>
<div style="left:1176px;top:553px;width:58px;height:15px;background:#e8e8e8"></div>
<div style="left:1176px;top:553px;width:58px;height:15px;overflow:hidden"><div style="left:-1176px;top:-553px;width:1333px;height:708px">
<div class="t" style="left:1179.00px;transform-origin:0 0;top:555px;line-height:13px;font-size:11px;font-weight:400;color:#000;">Argentina</div>
</div></div>
<div style="left:1235px;top:553px;width:73px;height:15px;background:#e8e8e8"></div>
<div style="left:1235px;top:553px;width:73px;height:15px;overflow:hidden"><div style="left:-1235px;top:-553px;width:1333px;height:708px">
<div class="t" style="left:1238.00px;transform-origin:0 0;top:555px;line-height:13px;font-size:11px;font-weight:400;color:#000;">Argentina</div>
</div></div>
<div style="left:630px;top:569px;width:79px;height:15px;background:#e8e8e8"></div>
<div style="left:630px;top:569px;width:79px;height:15px;overflow:hidden"><div style="left:-630px;top:-569px;width:1333px;height:708px">
<div class="t" style="left:633.00px;transform-origin:0 0;top:571px;line-height:13px;font-size:11px;font-weight:400;color:#000;transform:scaleX(0.8727);">CTEPDO</div>
</div></div>
<div style="left:710px;top:569px;width:79px;height:15px;background:#e8e8e8"></div>
<div style="left:790px;top:569px;width:39px;height:15px;background:#e8e8e8"></div>
<div style="left:790px;top:569px;width:39px;height:15px;overflow:hidden"><div style="left:-790px;top:-569px;width:1333px;height:708px">
<div class="t" style="right:506.00px;transform-origin:100% 0;top:571px;line-height:13px;font-size:11px;font-weight:400;color:#000;transform:scaleX(0.9808);">1</div>
</div></div>
<div style="left:830px;top:569px;width:132px;height:15px;background:#e8e8e8"></div>
<div style="left:830px;top:569px;width:132px;height:15px;overflow:hidden"><div style="left:-830px;top:-569px;width:1333px;height:708px">
<div class="t" style="left:833.00px;transform-origin:0 0;top:571px;line-height:13px;font-size:11px;font-weight:400;color:#000;transform:scaleX(0.8877);">SUCESION</div>
<div class="t" style="left:887.00px;transform-origin:0 0;top:571px;line-height:13px;font-size:11px;font-weight:400;color:#000;transform:scaleX(0.8507);">DE</div>
<div class="t" style="left:903.00px;transform-origin:0 0;top:571px;line-height:13px;font-size:11px;font-weight:400;color:#000;transform:scaleX(0.8843);">PAN</div>
<div class="t" style="left:926.00px;transform-origin:0 0;top:571px;line-height:13px;font-size:11px;font-weight:400;color:#000;transform:scaleX(0.8702);">JOSE</div>
<div class="t" style="left:954.00px;transform-origin:0 0;top:571px;line-height:13px;font-size:11px;font-weight:400;color:#000;transform:scaleX(0.9541);">A</div>
</div></div>
<div style="left:963px;top:569px;width:32px;height:15px;background:#e8e8e8"></div>
<div style="left:963px;top:569px;width:32px;height:15px;overflow:hidden"><div style="left:-963px;top:-569px;width:1333px;height:708px">
<div class="t" style="left:966.00px;transform-origin:0 0;top:571px;line-height:13px;font-size:11px;font-weight:400;color:#000;transform:scaleX(0.8843);">BLANDO</div>
</div></div>
<div style="left:996px;top:569px;width:52px;height:15px;background:#e8e8e8"></div>
<div style="left:996px;top:569px;width:52px;height:15px;overflow:hidden"><div style="left:-996px;top:-569px;width:1333px;height:708px">
<div class="t" style="left:999.00px;transform-origin:0 0;top:571px;line-height:13px;font-size:11px;font-weight:400;color:#000;transform:scaleX(0.9808);">$</div>
</div></div>
<div style="left:1049px;top:569px;width:59px;height:15px;background:#e8e8e8"></div>
<div style="left:1109px;top:569px;width:66px;height:15px;background:#e8e8e8"></div>
<div style="left:1136px;top:571px;width:11px;height:11px;box-sizing:border-box;background:#fff;border:1px solid #808080"></div>
<div style="left:1176px;top:569px;width:58px;height:15px;background:#e8e8e8"></div>
<div style="left:1176px;top:569px;width:58px;height:15px;overflow:hidden"><div style="left:-1176px;top:-569px;width:1333px;height:708px">
<div class="t" style="left:1179.00px;transform-origin:0 0;top:571px;line-height:13px;font-size:11px;font-weight:400;color:#000;">Argentina</div>
</div></div>
<div style="left:1235px;top:569px;width:73px;height:15px;background:#e8e8e8"></div>
<div style="left:1235px;top:569px;width:73px;height:15px;overflow:hidden"><div style="left:-1235px;top:-569px;width:1333px;height:708px">
<div class="t" style="left:1238.00px;transform-origin:0 0;top:571px;line-height:13px;font-size:11px;font-weight:400;color:#000;">Argentina</div>
</div></div>
<div style="left:630px;top:585px;width:79px;height:15px;background:#e8e8e8"></div>
<div style="left:630px;top:585px;width:79px;height:15px;overflow:hidden"><div style="left:-630px;top:-585px;width:1333px;height:708px">
<div class="t" style="left:633.00px;transform-origin:0 0;top:587px;line-height:13px;font-size:11px;font-weight:400;color:#000;transform:scaleX(0.8971);">CHAPA</div>
</div></div>
<div style="left:710px;top:585px;width:79px;height:15px;background:#e8e8e8"></div>
<div style="left:790px;top:585px;width:39px;height:15px;background:#e8e8e8"></div>
<div style="left:790px;top:585px;width:39px;height:15px;overflow:hidden"><div style="left:-790px;top:-585px;width:1333px;height:708px">
<div class="t" style="right:506.00px;transform-origin:100% 0;top:587px;line-height:13px;font-size:11px;font-weight:400;color:#000;transform:scaleX(0.9808);">2</div>
</div></div>
<div style="left:830px;top:585px;width:132px;height:15px;background:#e8e8e8"></div>
<div style="left:830px;top:585px;width:132px;height:15px;overflow:hidden"><div style="left:-830px;top:-585px;width:1333px;height:708px">
<div class="t" style="left:833.00px;transform-origin:0 0;top:587px;line-height:13px;font-size:11px;font-weight:400;color:#000;transform:scaleX(0.8877);">SUCESION</div>
<div class="t" style="left:887.00px;transform-origin:0 0;top:587px;line-height:13px;font-size:11px;font-weight:400;color:#000;transform:scaleX(0.8507);">DE</div>
<div class="t" style="left:903.00px;transform-origin:0 0;top:587px;line-height:13px;font-size:11px;font-weight:400;color:#000;transform:scaleX(0.8843);">PAN</div>
<div class="t" style="left:926.00px;transform-origin:0 0;top:587px;line-height:13px;font-size:11px;font-weight:400;color:#000;transform:scaleX(0.8702);">JOSE</div>
<div class="t" style="left:954.00px;transform-origin:0 0;top:587px;line-height:13px;font-size:11px;font-weight:400;color:#000;transform:scaleX(0.9541);">A</div>
</div></div>
<div style="left:963px;top:585px;width:32px;height:15px;background:#e8e8e8"></div>
<div style="left:963px;top:585px;width:32px;height:15px;overflow:hidden"><div style="left:-963px;top:-585px;width:1333px;height:708px">
<div class="t" style="left:966.00px;transform-origin:0 0;top:587px;line-height:13px;font-size:11px;font-weight:400;color:#000;transform:scaleX(0.8843);">BLANDO</div>
</div></div>
<div style="left:996px;top:585px;width:52px;height:15px;background:#e8e8e8"></div>
<div style="left:996px;top:585px;width:52px;height:15px;overflow:hidden"><div style="left:-996px;top:-585px;width:1333px;height:708px">
<div class="t" style="left:999.00px;transform-origin:0 0;top:587px;line-height:13px;font-size:11px;font-weight:400;color:#000;transform:scaleX(0.9085);">Kg.</div>
</div></div>
<div style="left:1049px;top:585px;width:59px;height:15px;background:#e8e8e8"></div>
<div style="left:1049px;top:585px;width:59px;height:15px;overflow:hidden"><div style="left:-1049px;top:-585px;width:1333px;height:708px">
<div class="t" style="right:227.00px;transform-origin:100% 0;top:587px;line-height:13px;font-size:11px;font-weight:400;color:#000;transform:scaleX(0.9809);">6,93</div>
</div></div>
<div style="left:1109px;top:585px;width:66px;height:15px;background:#e8e8e8"></div>
<div style="left:1136px;top:587px;width:11px;height:11px;box-sizing:border-box;background:#fff;border:1px solid #808080"></div>
<div style="left:1176px;top:585px;width:58px;height:15px;background:#e8e8e8"></div>
<div style="left:1176px;top:585px;width:58px;height:15px;overflow:hidden"><div style="left:-1176px;top:-585px;width:1333px;height:708px">
<div class="t" style="left:1179.00px;transform-origin:0 0;top:587px;line-height:13px;font-size:11px;font-weight:400;color:#000;">Argentina</div>
</div></div>
<div style="left:1235px;top:585px;width:73px;height:15px;background:#e8e8e8"></div>
<div style="left:1235px;top:585px;width:73px;height:15px;overflow:hidden"><div style="left:-1235px;top:-585px;width:1333px;height:708px">
<div class="t" style="left:1238.00px;transform-origin:0 0;top:587px;line-height:13px;font-size:11px;font-weight:400;color:#000;">Argentina</div>
</div></div>
<div style="left:630px;top:601px;width:79px;height:15px;background:#e8e8e8"></div>
<div style="left:710px;top:601px;width:79px;height:15px;background:#e8e8e8"></div>
<div style="left:790px;top:601px;width:39px;height:15px;background:#e8e8e8"></div>
<div style="left:830px;top:601px;width:132px;height:15px;background:#e8e8e8"></div>
<div style="left:830px;top:601px;width:132px;height:15px;overflow:hidden"><div style="left:-830px;top:-601px;width:1333px;height:708px">
<div class="t" style="left:833.00px;transform-origin:0 0;top:603px;line-height:13px;font-size:11px;font-weight:400;color:#000;transform:scaleX(0.8926);">DOMINGUEZ</div>
<div class="t" style="left:896.00px;transform-origin:0 0;top:603px;line-height:13px;font-size:11px;font-weight:400;color:#000;transform:scaleX(0.8640);">ROSENDE</div>
<div class="t" style="left:946.00px;transform-origin:0 0;top:603px;line-height:13px;font-size:11px;font-weight:400;color:#000;transform:scaleX(0.8702);">JOSE</div>
</div></div>
<div style="left:963px;top:601px;width:32px;height:15px;background:#e8e8e8"></div>
<div style="left:963px;top:601px;width:32px;height:15px;overflow:hidden"><div style="left:-963px;top:-601px;width:1333px;height:708px">
<div class="t" style="left:966.00px;transform-origin:0 0;top:603px;line-height:13px;font-size:11px;font-weight:400;color:#000;transform:scaleX(0.8843);">BLANDO</div>
</div></div>
<div style="left:996px;top:601px;width:52px;height:15px;background:#e8e8e8"></div>
<div style="left:1049px;top:601px;width:59px;height:15px;background:#e8e8e8"></div>
<div style="left:1109px;top:601px;width:66px;height:15px;background:#e8e8e8"></div>
<div style="left:1136px;top:603px;width:11px;height:11px;box-sizing:border-box;background:#fff;border:1px solid #808080"></div>
<div style="left:1176px;top:601px;width:58px;height:15px;background:#e8e8e8"></div>
<div style="left:1235px;top:601px;width:73px;height:15px;background:#e8e8e8"></div>
<div style="left:1235px;top:601px;width:73px;height:15px;overflow:hidden"><div style="left:-1235px;top:-601px;width:1333px;height:708px">
<div class="t" style="left:1238.00px;transform-origin:0 0;top:603px;line-height:13px;font-size:11px;font-weight:400;color:#000;">Argentina</div>
</div></div>
<div style="left:630px;top:617px;width:79px;height:16px;background:#e8e8e8"></div>
<div style="left:630px;top:617px;width:79px;height:16px;overflow:hidden"><div style="left:-630px;top:-617px;width:1333px;height:708px">
<div class="t" style="left:633.00px;transform-origin:0 0;top:620px;line-height:13px;font-size:11px;font-weight:400;color:#000;transform:scaleX(0.8727);">CTEPDO</div>
</div></div>
<div style="left:710px;top:617px;width:79px;height:16px;background:#e8e8e8"></div>
<div style="left:790px;top:617px;width:39px;height:16px;background:#e8e8e8"></div>
<div style="left:790px;top:617px;width:39px;height:16px;overflow:hidden"><div style="left:-790px;top:-617px;width:1333px;height:708px">
<div class="t" style="right:506.00px;transform-origin:100% 0;top:620px;line-height:13px;font-size:11px;font-weight:400;color:#000;transform:scaleX(0.9808);">1</div>
</div></div>
<div style="left:830px;top:617px;width:132px;height:16px;background:#e8e8e8"></div>
<div style="left:830px;top:617px;width:132px;height:16px;overflow:hidden"><div style="left:-830px;top:-617px;width:1333px;height:708px">
<div class="t" style="left:833.00px;transform-origin:0 0;top:620px;line-height:13px;font-size:11px;font-weight:400;color:#000;transform:scaleX(0.8877);">SUCESION</div>
<div class="t" style="left:887.00px;transform-origin:0 0;top:620px;line-height:13px;font-size:11px;font-weight:400;color:#000;transform:scaleX(0.8507);">DE</div>
<div class="t" style="left:903.00px;transform-origin:0 0;top:620px;line-height:13px;font-size:11px;font-weight:400;color:#000;transform:scaleX(0.8843);">PAN</div>
<div class="t" style="left:926.00px;transform-origin:0 0;top:620px;line-height:13px;font-size:11px;font-weight:400;color:#000;transform:scaleX(0.8702);">JOSE</div>
<div class="t" style="left:954.00px;transform-origin:0 0;top:620px;line-height:13px;font-size:11px;font-weight:400;color:#000;transform:scaleX(0.9541);">A</div>
</div></div>
<div style="left:963px;top:617px;width:32px;height:16px;background:#e8e8e8"></div>
<div style="left:963px;top:617px;width:32px;height:16px;overflow:hidden"><div style="left:-963px;top:-617px;width:1333px;height:708px">
<div class="t" style="left:966.00px;transform-origin:0 0;top:620px;line-height:13px;font-size:11px;font-weight:400;color:#000;transform:scaleX(0.8843);">BLANDO</div>
</div></div>
<div style="left:996px;top:617px;width:52px;height:16px;background:#e8e8e8"></div>
<div style="left:996px;top:617px;width:52px;height:16px;overflow:hidden"><div style="left:-996px;top:-617px;width:1333px;height:708px">
<div class="t" style="left:999.00px;transform-origin:0 0;top:620px;line-height:13px;font-size:11px;font-weight:400;color:#000;transform:scaleX(0.9808);">$</div>
</div></div>
<div style="left:1049px;top:617px;width:59px;height:16px;background:#e8e8e8"></div>
<div style="left:1049px;top:617px;width:59px;height:16px;overflow:hidden"><div style="left:-1049px;top:-617px;width:1333px;height:708px">
<div class="t" style="right:227.00px;transform-origin:100% 0;top:620px;line-height:13px;font-size:11px;font-weight:400;color:#000;transform:scaleX(0.9808);">0</div>
</div></div>
<div style="left:1109px;top:617px;width:66px;height:16px;background:#e8e8e8"></div>
<div style="left:1136px;top:619px;width:11px;height:11px;box-sizing:border-box;background:#fff;border:1px solid #808080"></div>
<div style="left:1176px;top:617px;width:58px;height:16px;background:#e8e8e8"></div>
<div style="left:1176px;top:617px;width:58px;height:16px;overflow:hidden"><div style="left:-1176px;top:-617px;width:1333px;height:708px">
<div class="t" style="left:1179.00px;transform-origin:0 0;top:620px;line-height:13px;font-size:11px;font-weight:400;color:#000;">Argentina</div>
</div></div>
<div style="left:1235px;top:617px;width:73px;height:16px;background:#e8e8e8"></div>
<div style="left:1235px;top:617px;width:73px;height:16px;overflow:hidden"><div style="left:-1235px;top:-617px;width:1333px;height:708px">
<div class="t" style="left:1238.00px;transform-origin:0 0;top:620px;line-height:13px;font-size:11px;font-weight:400;color:#000;">Argentina</div>
</div></div>
<div style="left:710px;top:217px;width:91px;height:15px;overflow:hidden"><div style="left:-710px;top:-217px;width:1333px;height:708px">
<div class="t" style="right:546.00px;transform-origin:100% 0;top:219px;line-height:13px;font-size:11px;font-weight:400;color:rgba(190,200,225,0.85);transform:scaleX(0.9808);">767,91</div>
<div class="t" style="right:538.00px;transform-origin:100% 0;top:220px;line-height:13px;font-size:11px;font-weight:400;color:rgba(190,200,225,0.6);transform:scaleX(0.9808);">767,91</div>
</div></div>
<div style="left:710px;top:233px;width:91px;height:15px;overflow:hidden"><div style="left:-710px;top:-233px;width:1333px;height:708px">
<div class="t" style="right:546.00px;transform-origin:100% 0;top:235px;line-height:13px;font-size:11px;font-weight:400;color:rgba(110,110,110,0.55);transform:scaleX(0.9808);">281,58</div>
<div class="t" style="right:538.00px;transform-origin:100% 0;top:236px;line-height:13px;font-size:11px;font-weight:400;color:rgba(110,110,110,0.40);transform:scaleX(0.9808);">281,58</div>
</div></div>
<div style="left:710px;top:249px;width:91px;height:15px;overflow:hidden"><div style="left:-710px;top:-249px;width:1333px;height:708px">
<div class="t" style="right:546.00px;transform-origin:100% 0;top:251px;line-height:13px;font-size:11px;font-weight:400;color:rgba(110,110,110,0.55);transform:scaleX(0.9808);">272,84</div>
<div class="t" style="right:538.00px;transform-origin:100% 0;top:252px;line-height:13px;font-size:11px;font-weight:400;color:rgba(110,110,110,0.40);transform:scaleX(0.9808);">272,84</div>
</div></div>
<div style="left:710px;top:265px;width:91px;height:15px;overflow:hidden"><div style="left:-710px;top:-265px;width:1333px;height:708px">
<div class="t" style="right:546.00px;transform-origin:100% 0;top:267px;line-height:13px;font-size:11px;font-weight:400;color:rgba(110,110,110,0.55);transform:scaleX(0.9808);">175,59</div>
<div class="t" style="right:538.00px;transform-origin:100% 0;top:268px;line-height:13px;font-size:11px;font-weight:400;color:rgba(110,110,110,0.40);transform:scaleX(0.9808);">175,59</div>
</div></div>
<div style="left:710px;top:281px;width:91px;height:15px;overflow:hidden"><div style="left:-710px;top:-281px;width:1333px;height:708px">
<div class="t" style="right:546.00px;transform-origin:100% 0;top:283px;line-height:13px;font-size:11px;font-weight:400;color:rgba(110,110,110,0.55);transform:scaleX(0.9808);">0</div>
<div class="t" style="right:538.00px;transform-origin:100% 0;top:284px;line-height:13px;font-size:11px;font-weight:400;color:rgba(110,110,110,0.40);transform:scaleX(0.9808);">0</div>
</div></div>
<div style="left:710px;top:297px;width:91px;height:15px;overflow:hidden"><div style="left:-710px;top:-297px;width:1333px;height:708px">
<div class="t" style="right:546.00px;transform-origin:100% 0;top:299px;line-height:13px;font-size:11px;font-weight:400;color:rgba(110,110,110,0.55);transform:scaleX(0.9809);">41,41</div>
<div class="t" style="right:538.00px;transform-origin:100% 0;top:300px;line-height:13px;font-size:11px;font-weight:400;color:rgba(110,110,110,0.40);transform:scaleX(0.9809);">41,41</div>
</div></div>
<div style="left:710px;top:313px;width:91px;height:15px;overflow:hidden"><div style="left:-710px;top:-313px;width:1333px;height:708px">
<div class="t" style="right:546.00px;transform-origin:100% 0;top:315px;line-height:13px;font-size:11px;font-weight:400;color:rgba(110,110,110,0.55);transform:scaleX(0.9809);">40,2</div>
<div class="t" style="right:538.00px;transform-origin:100% 0;top:316px;line-height:13px;font-size:11px;font-weight:400;color:rgba(110,110,110,0.40);transform:scaleX(0.9809);">40,2</div>
</div></div>
<div style="left:710px;top:329px;width:91px;height:15px;overflow:hidden"><div style="left:-710px;top:-329px;width:1333px;height:708px">
<div class="t" style="right:546.00px;transform-origin:100% 0;top:331px;line-height:13px;font-size:11px;font-weight:400;color:rgba(110,110,110,0.55);transform:scaleX(0.9809);">8,58</div>
<div class="t" style="right:538.00px;transform-origin:100% 0;top:332px;line-height:13px;font-size:11px;font-weight:400;color:rgba(110,110,110,0.40);transform:scaleX(0.9809);">8,58</div>
</div></div>
<div style="left:710px;top:345px;width:91px;height:15px;overflow:hidden"><div style="left:-710px;top:-345px;width:1333px;height:708px">
<div class="t" style="right:546.00px;transform-origin:100% 0;top:347px;line-height:13px;font-size:11px;font-weight:400;color:rgba(110,110,110,0.55);transform:scaleX(0.9808);">0</div>
<div class="t" style="right:538.00px;transform-origin:100% 0;top:348px;line-height:13px;font-size:11px;font-weight:400;color:rgba(110,110,110,0.40);transform:scaleX(0.9808);">0</div>
</div></div>
<div class="t" style="right:546.00px;transform-origin:100% 0;top:363px;line-height:13px;font-size:11px;font-weight:400;color:#000;transform:scaleX(0.9808);">0</div>
<div style="left:1049px;top:361px;width:71px;height:15px;overflow:hidden"><div style="left:-1049px;top:-361px;width:1333px;height:708px">
<div class="t" style="right:227.00px;transform-origin:100% 0;top:363px;line-height:13px;font-size:11px;font-weight:400;color:rgba(110,110,110,0.55);transform:scaleX(0.9808);">0</div>
<div class="t" style="right:221.00px;transform-origin:100% 0;top:364px;line-height:13px;font-size:11px;font-weight:400;color:rgba(110,110,110,0.40);transform:scaleX(0.9808);">0</div>
</div></div>
<div style="left:710px;top:377px;width:91px;height:15px;overflow:hidden"><div style="left:-710px;top:-377px;width:1333px;height:708px">
<div class="t" style="right:546.00px;transform-origin:100% 0;top:379px;line-height:13px;font-size:11px;font-weight:400;color:rgba(110,110,110,0.55);transform:scaleX(0.9808);">277,78</div>
<div class="t" style="right:538.00px;transform-origin:100% 0;top:380px;line-height:13px;font-size:11px;font-weight:400;color:rgba(110,110,110,0.40);transform:scaleX(0.9808);">277,78</div>
</div></div>
<div style="left:1049px;top:377px;width:71px;height:15px;overflow:hidden"><div style="left:-1049px;top:-377px;width:1333px;height:708px">
<div class="t" style="right:227.00px;transform-origin:100% 0;top:379px;line-height:13px;font-size:11px;font-weight:400;color:rgba(110,110,110,0.55);transform:scaleX(0.9808);">277,78</div>
<div class="t" style="right:221.00px;transform-origin:100% 0;top:380px;line-height:13px;font-size:11px;font-weight:400;color:rgba(110,110,110,0.40);transform:scaleX(0.9808);">277,78</div>
</div></div>
<div style="left:710px;top:393px;width:91px;height:15px;overflow:hidden"><div style="left:-710px;top:-393px;width:1333px;height:708px">
<div class="t" style="right:546.00px;transform-origin:100% 0;top:395px;line-height:13px;font-size:11px;font-weight:400;color:rgba(110,110,110,0.55);transform:scaleX(0.9808);">0</div>
<div class="t" style="right:538.00px;transform-origin:100% 0;top:396px;line-height:13px;font-size:11px;font-weight:400;color:rgba(110,110,110,0.40);transform:scaleX(0.9808);">0</div>
</div></div>
<div style="left:710px;top:409px;width:91px;height:15px;overflow:hidden"><div style="left:-710px;top:-409px;width:1333px;height:708px">
<div class="t" style="right:546.00px;transform-origin:100% 0;top:411px;line-height:13px;font-size:11px;font-weight:400;color:rgba(110,110,110,0.55);transform:scaleX(0.9808);">0</div>
<div class="t" style="right:538.00px;transform-origin:100% 0;top:412px;line-height:13px;font-size:11px;font-weight:400;color:rgba(110,110,110,0.40);transform:scaleX(0.9808);">0</div>
</div></div>
<div style="left:710px;top:425px;width:91px;height:15px;overflow:hidden"><div style="left:-710px;top:-425px;width:1333px;height:708px">
<div class="t" style="right:546.00px;transform-origin:100% 0;top:427px;line-height:13px;font-size:11px;font-weight:400;color:rgba(110,110,110,0.55);transform:scaleX(0.9808);">622,01</div>
<div class="t" style="right:538.00px;transform-origin:100% 0;top:428px;line-height:13px;font-size:11px;font-weight:400;color:rgba(110,110,110,0.40);transform:scaleX(0.9808);">622,01</div>
</div></div>
<div style="left:1049px;top:425px;width:71px;height:15px;overflow:hidden"><div style="left:-1049px;top:-425px;width:1333px;height:708px">
<div class="t" style="right:227.00px;transform-origin:100% 0;top:427px;line-height:13px;font-size:11px;font-weight:400;color:rgba(110,110,110,0.55);transform:scaleX(0.9808);">622,01</div>
<div class="t" style="right:221.00px;transform-origin:100% 0;top:428px;line-height:13px;font-size:11px;font-weight:400;color:rgba(110,110,110,0.40);transform:scaleX(0.9808);">622,01</div>
</div></div>
<div style="left:710px;top:441px;width:91px;height:15px;overflow:hidden"><div style="left:-710px;top:-441px;width:1333px;height:708px">
<div class="t" style="right:546.00px;transform-origin:100% 0;top:443px;line-height:13px;font-size:11px;font-weight:400;color:rgba(110,110,110,0.55);transform:scaleX(0.9809);">39,41</div>
<div class="t" style="right:538.00px;transform-origin:100% 0;top:444px;line-height:13px;font-size:11px;font-weight:400;color:rgba(110,110,110,0.40);transform:scaleX(0.9809);">39,41</div>
</div></div>
<div style="left:1049px;top:441px;width:71px;height:15px;overflow:hidden"><div style="left:-1049px;top:-441px;width:1333px;height:708px">
<div class="t" style="right:227.00px;transform-origin:100% 0;top:443px;line-height:13px;font-size:11px;font-weight:400;color:rgba(110,110,110,0.55);transform:scaleX(0.9809);">39,41</div>
<div class="t" style="right:221.00px;transform-origin:100% 0;top:444px;line-height:13px;font-size:11px;font-weight:400;color:rgba(110,110,110,0.40);transform:scaleX(0.9809);">39,41</div>
</div></div>
<div style="left:710px;top:457px;width:91px;height:15px;overflow:hidden"><div style="left:-710px;top:-457px;width:1333px;height:708px">
<div class="t" style="right:546.00px;transform-origin:100% 0;top:459px;line-height:13px;font-size:11px;font-weight:400;color:rgba(110,110,110,0.55);transform:scaleX(0.9808);">0</div>
<div class="t" style="right:538.00px;transform-origin:100% 0;top:460px;line-height:13px;font-size:11px;font-weight:400;color:rgba(110,110,110,0.40);transform:scaleX(0.9808);">0</div>
</div></div>
<div style="left:710px;top:473px;width:91px;height:15px;overflow:hidden"><div style="left:-710px;top:-473px;width:1333px;height:708px">
<div class="t" style="right:546.00px;transform-origin:100% 0;top:475px;line-height:13px;font-size:11px;font-weight:400;color:rgba(110,110,110,0.55);transform:scaleX(0.9808);">106,49</div>
<div class="t" style="right:538.00px;transform-origin:100% 0;top:476px;line-height:13px;font-size:11px;font-weight:400;color:rgba(110,110,110,0.40);transform:scaleX(0.9808);">106,49</div>
</div></div>
<div style="left:710px;top:489px;width:91px;height:15px;overflow:hidden"><div style="left:-710px;top:-489px;width:1333px;height:708px">
<div class="t" style="right:546.00px;transform-origin:100% 0;top:491px;line-height:13px;font-size:11px;font-weight:400;color:rgba(110,110,110,0.55);transform:scaleX(0.9809);">1.163,52</div>
<div class="t" style="right:538.00px;transform-origin:100% 0;top:492px;line-height:13px;font-size:11px;font-weight:400;color:rgba(110,110,110,0.40);transform:scaleX(0.9809);">1.163,52</div>
</div></div>
<div style="left:710px;top:505px;width:91px;height:15px;overflow:hidden"><div style="left:-710px;top:-505px;width:1333px;height:708px">
<div class="t" style="right:546.00px;transform-origin:100% 0;top:507px;line-height:13px;font-size:11px;font-weight:400;color:rgba(110,110,110,0.55);transform:scaleX(0.9808);">402</div>
<div class="t" style="right:538.00px;transform-origin:100% 0;top:508px;line-height:13px;font-size:11px;font-weight:400;color:rgba(110,110,110,0.40);transform:scaleX(0.9808);">402</div>
</div></div>
<div class="t" style="right:546.00px;transform-origin:100% 0;top:523px;line-height:13px;font-size:11px;font-weight:400;color:#000;transform:scaleX(0.9808);">0</div>
<div style="left:710px;top:537px;width:91px;height:15px;overflow:hidden"><div style="left:-710px;top:-537px;width:1333px;height:708px">
<div class="t" style="right:546.00px;transform-origin:100% 0;top:539px;line-height:13px;font-size:11px;font-weight:400;color:rgba(110,110,110,0.55);transform:scaleX(0.9808);">3450,75</div>
<div class="t" style="right:538.00px;transform-origin:100% 0;top:540px;line-height:13px;font-size:11px;font-weight:400;color:rgba(110,110,110,0.40);transform:scaleX(0.9808);">3450,75</div>
</div></div>
<div style="left:1049px;top:537px;width:71px;height:15px;overflow:hidden"><div style="left:-1049px;top:-537px;width:1333px;height:708px">
<div class="t" style="right:227.00px;transform-origin:100% 0;top:539px;line-height:13px;font-size:11px;font-weight:400;color:rgba(110,110,110,0.55);transform:scaleX(0.9808);">3450,75</div>
<div class="t" style="right:221.00px;transform-origin:100% 0;top:540px;line-height:13px;font-size:11px;font-weight:400;color:rgba(110,110,110,0.40);transform:scaleX(0.9808);">3450,75</div>
</div></div>
<div style="left:710px;top:553px;width:91px;height:15px;overflow:hidden"><div style="left:-710px;top:-553px;width:1333px;height:708px">
<div class="t" style="right:546.00px;transform-origin:100% 0;top:555px;line-height:13px;font-size:11px;font-weight:400;color:rgba(110,110,110,0.55);transform:scaleX(0.9808);">595,88</div>
<div class="t" style="right:538.00px;transform-origin:100% 0;top:556px;line-height:13px;font-size:11px;font-weight:400;color:rgba(110,110,110,0.40);transform:scaleX(0.9808);">595,88</div>
</div></div>
<div style="left:1049px;top:553px;width:71px;height:15px;overflow:hidden"><div style="left:-1049px;top:-553px;width:1333px;height:708px">
<div class="t" style="right:227.00px;transform-origin:100% 0;top:555px;line-height:13px;font-size:11px;font-weight:400;color:rgba(110,110,110,0.55);transform:scaleX(0.9808);">480</div>
<div class="t" style="right:221.00px;transform-origin:100% 0;top:556px;line-height:13px;font-size:11px;font-weight:400;color:rgba(110,110,110,0.40);transform:scaleX(0.9808);">480</div>
</div></div>
<div style="left:710px;top:569px;width:91px;height:15px;overflow:hidden"><div style="left:-710px;top:-569px;width:1333px;height:708px">
<div class="t" style="right:546.00px;transform-origin:100% 0;top:571px;line-height:13px;font-size:11px;font-weight:400;color:rgba(110,110,110,0.55);transform:scaleX(0.9808);">180</div>
<div class="t" style="right:538.00px;transform-origin:100% 0;top:572px;line-height:13px;font-size:11px;font-weight:400;color:rgba(110,110,110,0.40);transform:scaleX(0.9808);">180</div>
</div></div>
<div style="left:1049px;top:569px;width:71px;height:15px;overflow:hidden"><div style="left:-1049px;top:-569px;width:1333px;height:708px">
<div class="t" style="right:227.00px;transform-origin:100% 0;top:571px;line-height:13px;font-size:11px;font-weight:400;color:rgba(110,110,110,0.55);transform:scaleX(0.9808);">60</div>
<div class="t" style="right:221.00px;transform-origin:100% 0;top:572px;line-height:13px;font-size:11px;font-weight:400;color:rgba(110,110,110,0.40);transform:scaleX(0.9808);">60</div>
</div></div>
<div style="left:710px;top:585px;width:91px;height:15px;overflow:hidden"><div style="left:-710px;top:-585px;width:1333px;height:708px">
<div class="t" style="right:546.00px;transform-origin:100% 0;top:587px;line-height:13px;font-size:11px;font-weight:400;color:rgba(110,110,110,0.55);transform:scaleX(0.9808);">270,27</div>
<div class="t" style="right:538.00px;transform-origin:100% 0;top:588px;line-height:13px;font-size:11px;font-weight:400;color:rgba(110,110,110,0.40);transform:scaleX(0.9808);">270,27</div>
</div></div>
<div style="left:710px;top:601px;width:91px;height:15px;overflow:hidden"><div style="left:-710px;top:-601px;width:1333px;height:708px">
<div class="t" style="right:546.00px;transform-origin:100% 0;top:603px;line-height:13px;font-size:11px;font-weight:400;color:rgba(110,110,110,0.55);transform:scaleX(0.9808);">0</div>
<div class="t" style="right:538.00px;transform-origin:100% 0;top:604px;line-height:13px;font-size:11px;font-weight:400;color:rgba(110,110,110,0.40);transform:scaleX(0.9808);">0</div>
</div></div>
<div style="left:710px;top:617px;width:91px;height:16px;overflow:hidden"><div style="left:-710px;top:-617px;width:1333px;height:708px">
<div class="t" style="right:546.00px;transform-origin:100% 0;top:619px;line-height:13px;font-size:11px;font-weight:400;color:rgba(110,110,110,0.55);transform:scaleX(0.9808);">0</div>
<div class="t" style="right:538.00px;transform-origin:100% 0;top:620px;line-height:13px;font-size:11px;font-weight:400;color:rgba(110,110,110,0.40);transform:scaleX(0.9808);">0</div>
</div></div>
<div style="left:1308px;top:201px;width:1px;height:434px;background:#fff"></div>
<div style="left:1309px;top:225px;width:16px;height:394px;background-color:#fff;background-image:linear-gradient(45deg,#d4d0c8 25%,transparent 25%,transparent 75%,#d4d0c8 75%),linear-gradient(45deg,#d4d0c8 25%,transparent 25%,transparent 75%,#d4d0c8 75%);background-size:2px 2px;background-position:0 0,1px 1px"></div>
<div style="left:1309px;top:201px;width:16px;height:16px;background:#d4d0c8;box-sizing:border-box;border-top:1px solid #d4d0c8;border-left:1px solid #d4d0c8;border-right:1px solid #404040;border-bottom:1px solid #404040"></div>
<div style="left:1310px;top:202px;width:14px;height:14px;box-sizing:border-box;border-top:1px solid #fff;border-left:1px solid #fff;border-right:1px solid #808080;border-bottom:1px solid #808080"></div>
<svg style="left:1309px;top:201px" width="16" height="16"><path d="M7 6h1v1h1v1h1v1h1v1h-7v-1h1v-1h1v-1h1z" fill="#000"/></svg>
<div style="left:1309px;top:217px;width:16px;height:8px;background:#d4d0c8;box-sizing:border-box;border-top:1px solid #d4d0c8;border-left:1px solid #d4d0c8;border-right:1px solid #404040;border-bottom:1px solid #404040"></div>
<div style="left:1310px;top:218px;width:14px;height:6px;box-sizing:border-box;border-top:1px solid #fff;border-left:1px solid #fff;border-right:1px solid #808080;border-bottom:1px solid #808080"></div>
<div style="left:1309px;top:619px;width:16px;height:16px;background:#d4d0c8;box-sizing:border-box;border-top:1px solid #d4d0c8;border-left:1px solid #d4d0c8;border-right:1px solid #404040;border-bottom:1px solid #404040"></div>
<div style="left:1310px;top:620px;width:14px;height:14px;box-sizing:border-box;border-top:1px solid #fff;border-left:1px solid #fff;border-right:1px solid #808080;border-bottom:1px solid #808080"></div>
<svg style="left:1309px;top:619px" width="16" height="16"><path d="M4 6h7v1h-1v1h-1v1h-1v1h-1v-1h-1v-1h-1v-1h-1z" fill="#000"/></svg>
<div style="left:3px;top:634px;width:1306px;height:1px;background:#fff"></div>
<div style="left:3px;top:635px;width:1322px;height:16px;background:#d4d0c8"></div>
<div style="left:3px;top:635px;width:16px;height:16px;background:#d4d0c8;box-sizing:border-box;border-top:1px solid #d4d0c8;border-left:1px solid #d4d0c8;border-right:1px solid #404040;border-bottom:1px solid #404040"></div>
<div style="left:4px;top:636px;width:14px;height:14px;box-sizing:border-box;border-top:1px solid #fff;border-left:1px solid #fff;border-right:1px solid #808080;border-bottom:1px solid #808080"></div>
<svg style="left:3px;top:635px" width="16" height="16"><path d="M8 4h1v7h-1v-1h-1v-1h-1v-1h-1v-1h1v-1h1v-1h1z" fill="#000"/></svg>
<div style="left:19px;top:635px;width:1257px;height:16px;background:#d4d0c8;box-sizing:border-box;border-top:1px solid #d4d0c8;border-left:1px solid #d4d0c8;border-right:1px solid #404040;border-bottom:1px solid #404040"></div>
<div style="left:20px;top:636px;width:1255px;height:14px;box-sizing:border-box;border-top:1px solid #fff;border-left:1px solid #fff;border-right:1px solid #808080;border-bottom:1px solid #808080"></div>
<div style="left:1276px;top:635px;width:17px;height:16px;background-color:#fff;background-image:linear-gradient(45deg,#d4d0c8 25%,transparent 25%,transparent 75%,#d4d0c8 75%),linear-gradient(45deg,#d4d0c8 25%,transparent 25%,transparent 75%,#d4d0c8 75%);background-size:2px 2px;background-position:0 0,1px 1px"></div>
<div style="left:1293px;top:635px;width:16px;height:16px;background:#d4d0c8;box-sizing:border-box;border-top:1px solid #d4d0c8;border-left:1px solid #d4d0c8;border-right:1px solid #404040;border-bottom:1px solid #404040"></div>
<div style="left:1294px;top:636px;width:14px;height:14px;box-sizing:border-box;border-top:1px solid #fff;border-left:1px solid #fff;border-right:1px solid #808080;border-bottom:1px solid #808080"></div>
<svg style="left:1293px;top:635px" width="16" height="16"><path d="M6 4h1v1h1v1h1v1h1v1h-1v1h-1v1h-1v1h-1z" fill="#000"/></svg>
<div style="left:3px;top:651px;width:1322px;height:1px;background:#808080"></div>
<div style="left:3px;top:652px;width:1322px;height:13px;background:#d4d0c8"></div>
<div style="left:3px;top:652px;width:2px;height:13px;background:#404040"></div>
<div style="left:3px;top:665px;width:1322px;height:1px;background:#fff"></div>
<div style="left:1324px;top:652px;width:1px;height:14px;background:#fff"></div>
<div class="t" style="left:1205.00px;transform-origin:0 0;top:653px;line-height:13px;font-size:11px;font-weight:400;color:#000;transform:scaleX(0.9766);">Cantidad</div>
<div class="t" style="left:1251.00px;transform-origin:0 0;top:653px;line-height:13px;font-size:11px;font-weight:400;color:#000;transform:scaleX(0.9808);">de</div>
<div class="t" style="left:1266.00px;transform-origin:0 0;top:653px;line-height:13px;font-size:11px;font-weight:400;color:#000;transform:scaleX(0.9132);">Filas:</div>
<div class="t" style="left:1293.00px;transform-origin:0 0;top:653px;line-height:13px;font-size:11px;font-weight:400;color:#000;transform:scaleX(0.9808);">2175</div>
<div style="left:3px;top:671px;width:1322px;height:35px;box-sizing:border-box;border-top:1px solid #808080;border-left:1px solid #808080;border-right:1px solid #fff;border-bottom:1px solid #fff"></div>
<div style="left:4px;top:672px;width:1320px;height:33px;box-sizing:border-box;border-top:1px solid #fff;border-left:1px solid #fff;border-right:1px solid #808080;border-bottom:1px solid #808080"></div>
<div style="left:9px;top:675px;width:97px;height:27px;box-sizing:border-box;border:1px solid #0c3878;border-radius:2px;background:linear-gradient(#f6fcff 0%,#d8f0fe 25%,#a8daf9 60%,#5cb8f8 100%);box-shadow:inset 1px 0 0 #0c4a98,inset 2px 0 0 #c8d8fa,inset 0 -1px 0 #8aa0e8,inset -1px 0 0 #a8c8f0"></div>
<div class="t" style="left:36.00px;transform-origin:0 0;top:682px;line-height:13px;font-size:11px;font-weight:700;color:#2a69b3;transform:scaleX(0.9770);">Imprimir</div>
<div style="left:1218px;top:675px;width:103px;height:27px;box-sizing:border-box;border:1px solid #0c3878;border-radius:2px;background:linear-gradient(#f6fcff 0%,#d8f0fe 25%,#a8daf9 60%,#5cb8f8 100%);box-shadow:inset 1px 0 0 #0c4a98,inset 2px 0 0 #c8d8fa,inset 0 -1px 0 #8aa0e8,inset -1px 0 0 #a8c8f0"></div>
<div class="t" style="left:1256.00px;transform-origin:0 0;top:683px;line-height:13px;font-size:11px;font-weight:700;color:#2a69b3;transform:scaleX(1.0483);">Salir</div>
<div class="t" style="left:1040.00px;transform-origin:0 0;top:680px;line-height:13px;font-size:13px;font-weight:700;color:#2f70c2;transform:scaleX(1.0457);">Total:</div>
<div class="t" style="left:1082.00px;transform-origin:0 0;top:680px;line-height:13px;font-size:13px;font-weight:700;color:#2f70c2;transform:scaleX(0.6916);opacity:0.85">1</div>
<div class="t" style="left:1087px;top:679px;line-height:16px;font-size:13px;font-weight:700;color:rgba(70,120,190,0.38);filter:blur(0.7px);transform:scaleX(0.98);transform-origin:0 0;-webkit-text-stroke:0">100033224,3</div>
<div class="t" style="left:1093px;top:681px;line-height:16px;font-size:13px;font-weight:700;color:rgba(70,120,190,0.25);filter:blur(0.9px);transform:scaleX(0.9);transform-origin:0 0;-webkit-text-stroke:0">10033224,3</div>
<div style="left:1085px;top:669px;width:80px;height:1px;background:rgba(255,255,255,0.6)"></div>
<div style="left:1085px;top:702px;width:80px;height:1px;background:rgba(255,255,255,0.5)"></div>
<div class="t" style="left:1170.00px;transform-origin:0 0;top:680px;line-height:13px;font-size:13px;font-weight:700;color:#2f70c2;transform:scaleX(0.9660);">Pesos</div>
</body></html>
